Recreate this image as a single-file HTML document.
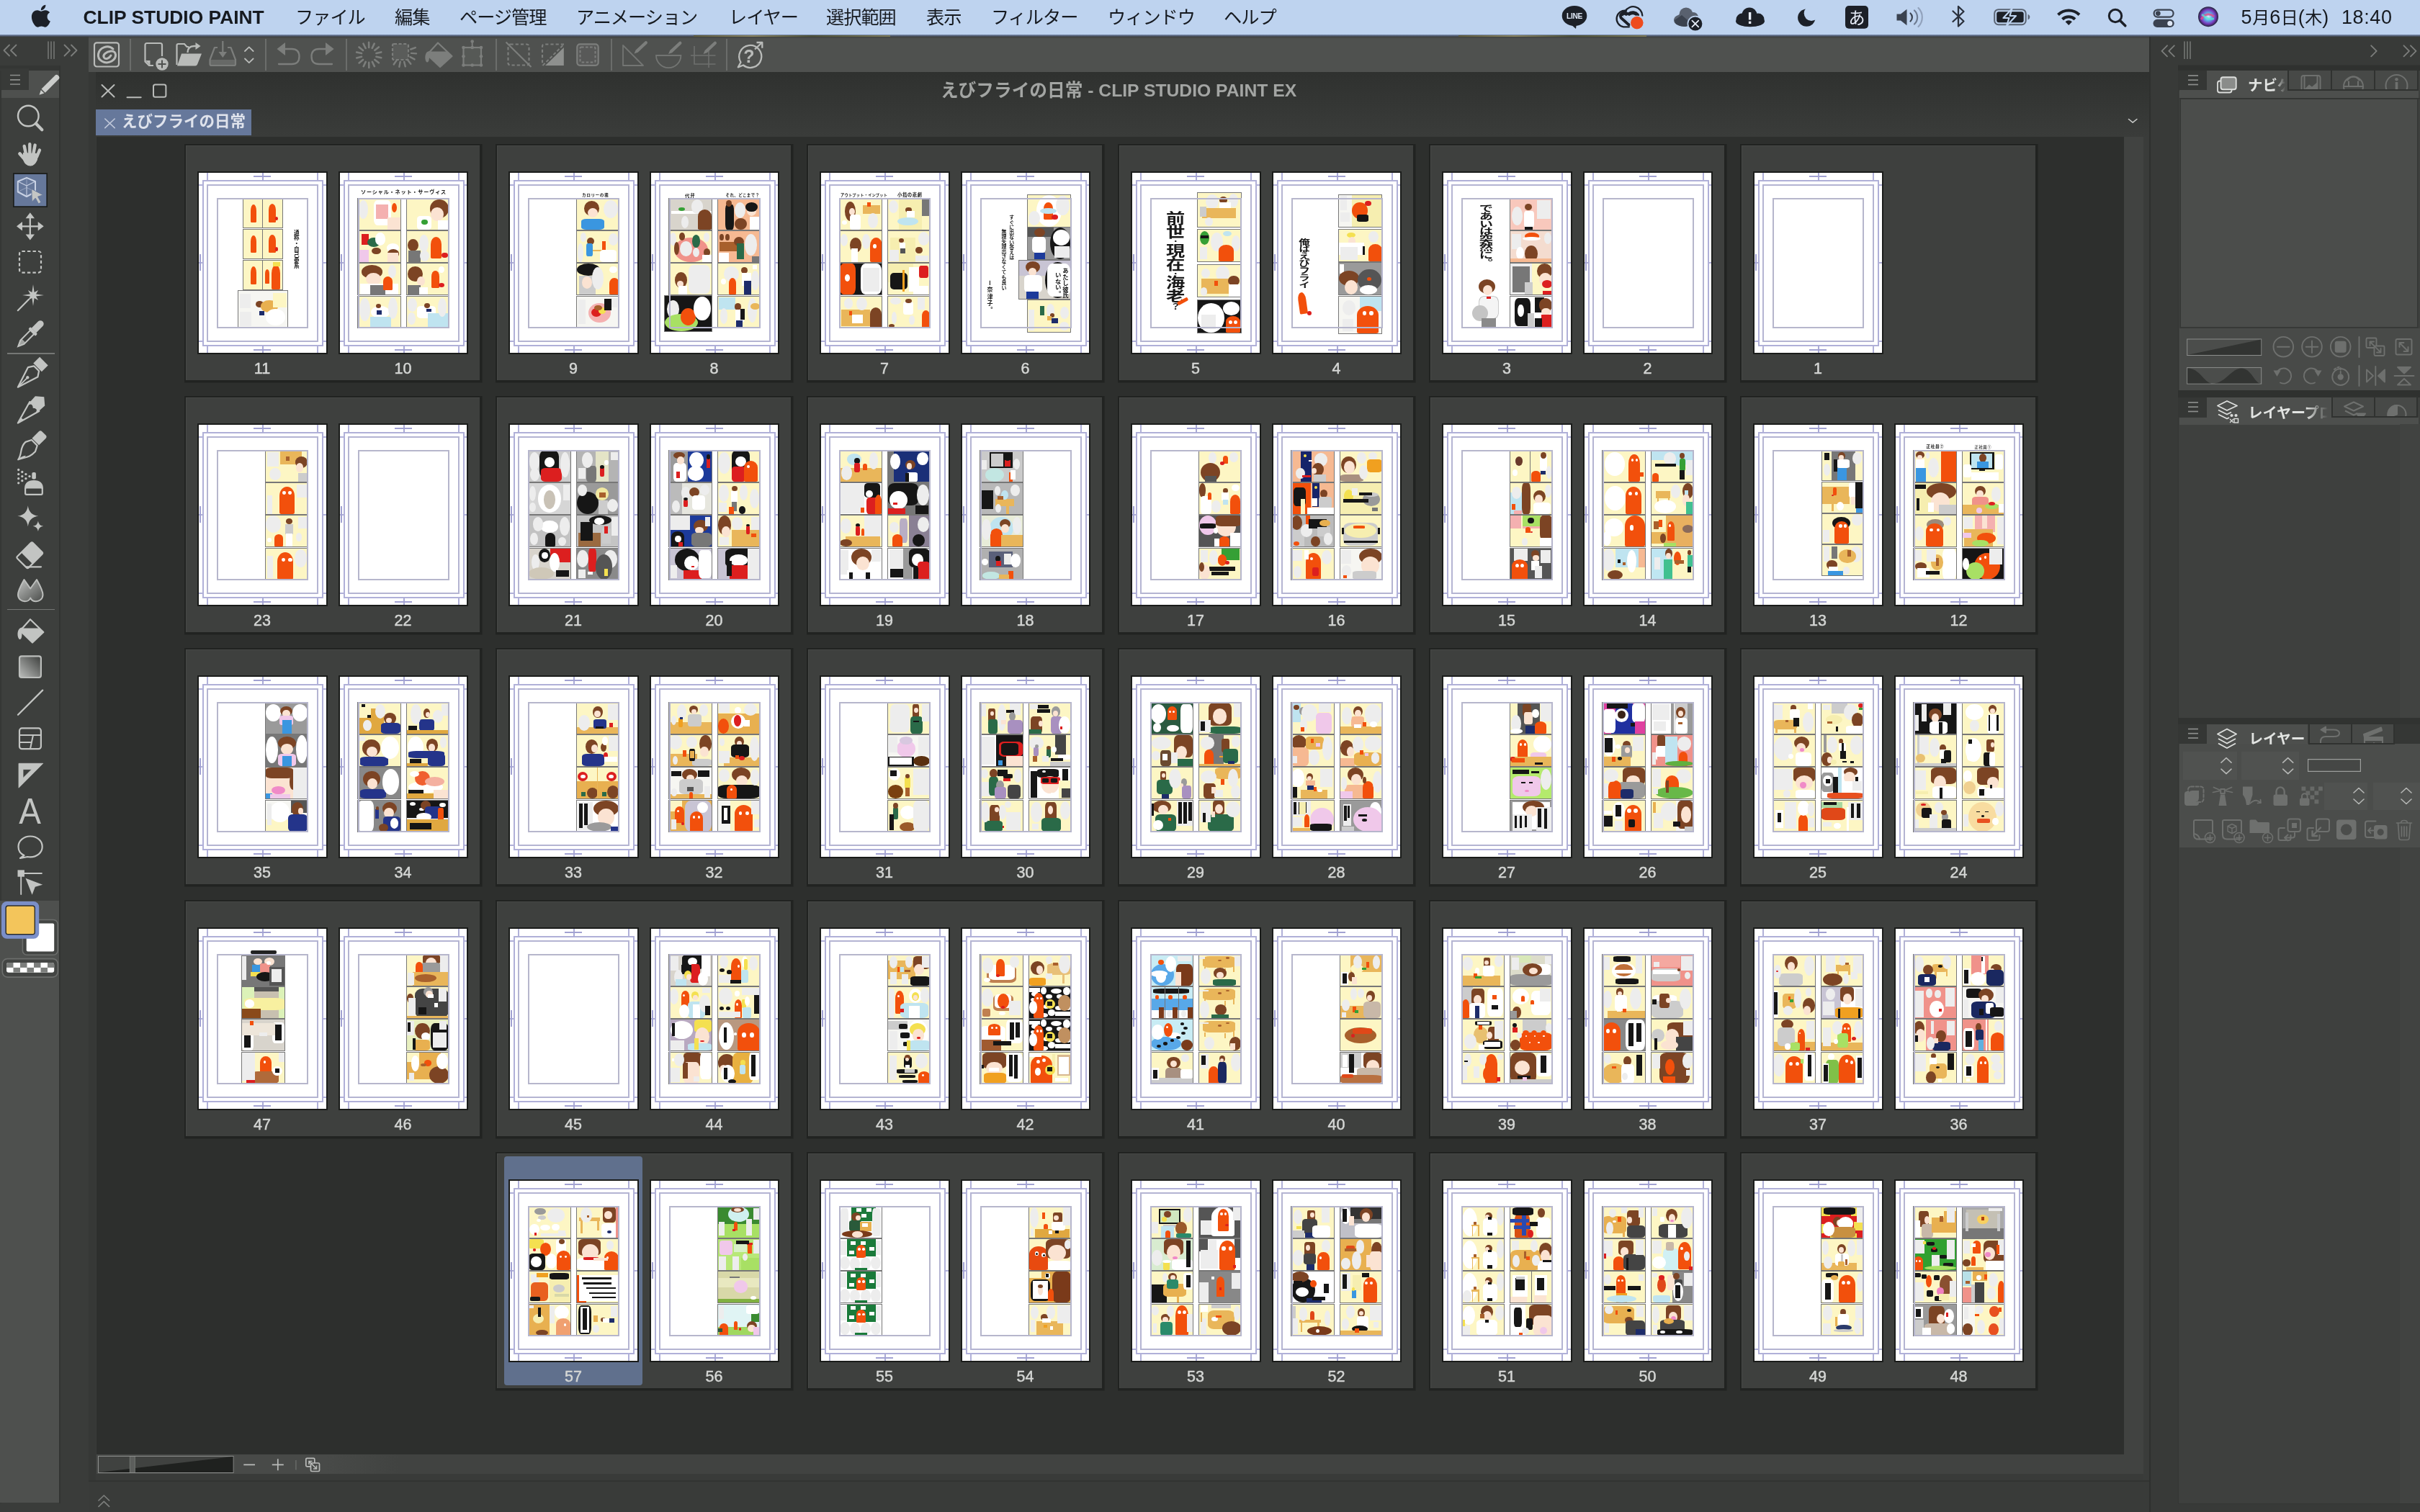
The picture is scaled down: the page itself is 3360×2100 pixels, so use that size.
<!DOCTYPE html><html lang="ja"><head><meta charset="utf-8"><title>CLIP STUDIO PAINT</title><style>
*{margin:0;padding:0;box-sizing:border-box}
html,body{width:3360px;height:2100px;overflow:hidden;background:#393b39}
body{will-change:transform;position:relative;font-family:"Liberation Sans","Noto Sans CJK JP",sans-serif;color:#c8c8c8}
.a{position:absolute}
div,i,b,span,svg{position:absolute;display:block}
#mb{left:0;top:0;width:3360px;height:48px;background:#bed3ef}
#mbl{left:0;top:48px;width:3360px;height:3px;background:linear-gradient(#7f93b8,#3b4048)}
.wp{top:48.5px;height:3px;background:linear-gradient(90deg,#5d5a3c,#8a8460 30%,#4c5036 60%,#7d7a58)}
#mb span{top:0;height:48px;line-height:48.5px;font-size:25.2px;letter-spacing:-1px;color:#161a20;white-space:nowrap}
#mb .tm{letter-spacing:1.15px}
#mb em{font-style:normal;font-size:24px;letter-spacing:0}
#mb .ap{font-weight:bold;font-size:26.4px;letter-spacing:0;line-height:48px}
#mb .md{font-size:27px;letter-spacing:0.6px;line-height:49.5px}
/* left */
#lt{left:0;top:51px;width:123px;height:2049px;background:#3a3c3a}
#lp{left:0;top:98px;width:82px;height:1989px;background:#3d3f3d}
#lph{left:0;top:98px;width:82px;height:38px;background:#4e504e}
#lpt{left:0;top:90.5px;width:84px;height:7.5px;background:#343634}
#lpr{left:82px;top:90.5px;width:1.8px;height:1997px;background:#323432}
#lpl{left:0;top:98px;width:2px;height:1990px;background:#353735}
#lpm{left:0;top:94.600px;width:39.700px;height:30.600px;background:#383a38}
#lpb{left:0;top:1251px;width:82px;height:836px;background:#4e504e}
.sep{left:10px;width:66px;height:1.6px;background:#757775}

/* toolbar */
#tb{left:123px;top:51px;width:2861px;height:49px;background:#4f514f}
#tbl{left:123px;top:51px;width:2861px;height:2px;background:#454745}
.vs{top:54px;width:2px;height:44px;background:#6b6d6b}
/* doc window */
#dw{left:123px;top:100px;width:2861px;height:90px;background:linear-gradient(#2f312f,#3a3c3a)}
#dwl{left:123px;top:100px;width:10px;height:1956px;background:#363836}
#tab{left:133px;top:152px;width:216px;height:36px;background:#66789b}
#tab span{left:36px;top:0;line-height:35px;font-size:21.5px;font-weight:bold;color:#dfe3ec;white-space:nowrap}
#ttl{left:1203px;top:108px;width:700px;text-align:center;font-size:24.7px;font-weight:bold;color:#a3a5a3;white-space:nowrap;line-height:36px}
#cv{left:134px;top:190px;width:2815px;height:1830px;background:#2d2f2d}
#vsb{left:2949px;top:190px;width:27px;height:1857px;background:#414341}
#vsr{left:2976px;top:190px;width:8px;height:1866px;background:#3a3c3a}
#hsb{left:134px;top:2020px;width:2815px;height:27px;background:#414341}
#st{left:134px;top:2020px;width:420px;height:27px;background:linear-gradient(90deg,#484a48 76%,#414341)}
#bt{left:123px;top:2056px;width:2861px;height:44px;background:#393b39;border-top:2px solid #323432}
/* spreads */
.sp{width:408px;height:326px;background:#3e403e;box-shadow:.75px .75px 0 2.75px #212321, inset 1px 1px 0 #474947}
.pg{width:176.5px;height:250px;background:#fff;top:38px;box-shadow:0 0 0 2px #1a1c1a;overflow:hidden}
.pn{top:294.6px;width:176px;text-align:center;font-size:21.5px;line-height:30px;color:#d4d6d4;-webkit-text-stroke:0.5px #d4d6d4}
.pg i{border:0 solid #b0b0d8}
.g1{left:5px;top:10px;width:168px;height:231px;border-width:2px!important}
.g2{left:11px;top:16px;width:155px;height:219px;border-width:2px!important;border-color:#b4b4d2!important}
.g3{left:25px;top:35px;width:127px;height:181px;border-width:2px!important;border-color:#b6b6cc!important}
.t1{left:11px;top:0;width:155px;height:11px;border-left-width:2px!important;border-right-width:2px!important}
.t2{left:11px;top:240px;width:155px;height:10px;border-left-width:2px!important;border-right-width:2px!important}
.t3{left:0;top:16px;width:6px;height:219px;border-top-width:2px!important;border-bottom-width:2px!important}
.t4{left:171px;top:16px;width:6px;height:219px;border-top-width:2px!important;border-bottom-width:2px!important}
.c1{left:88px;top:0;width:2px;height:11px;background:#aaaad6}
.c2{left:76px;top:4px;width:24px;height:2px;background:#a2a2d2}
.c3{left:88px;top:240px;width:2px;height:10px;background:#aaaad6}
.c4{left:76px;top:245px;width:24px;height:2px;background:#a2a2d2}
.c5{left:0;top:124px;width:6px;height:2px;background:#b0b0d8}
.c6{left:1px;top:113px;width:2px;height:23px;background:#a2a2d2}
.c7{left:171px;top:124px;width:6px;height:2px;background:#b0b0d8}
.pg b{position:absolute;display:block}
.k{outline:.7px solid #777;outline-offset:-.7px;overflow:hidden}
.kn{overflow:hidden}
.e{border-radius:50%}
.t{border-radius:50% 50% 12% 12%/34% 34% 6% 6%}
.r{border-radius:22%}
.tt{color:#1a1a1a;font-weight:bold;white-space:nowrap;line-height:1.2;font-family:"Liberation Sans","Noto Sans CJK JP",sans-serif}
.vt{color:#1a1a1a;font-weight:bold;white-space:nowrap;writing-mode:vertical-rl;line-height:1.15;font-family:"Liberation Sans","Noto Sans CJK JP",sans-serif}
.hw{font-family:"Noto Sans CJK JP",sans-serif;font-weight:700}
.dt{position:static!important;display:inline!important;font-style:normal;font-size:40%;border:0!important}
.dq{position:static!important;display:inline!important;font-style:normal;font-size:55%;border:0!important}
/* right dock */
#rd{left:2984px;top:51px;width:376px;height:2049px;background:#383a38;border-left:2px solid #2e302e}
#rp{left:3025px;top:91px;width:335px;height:1997px;background:#3e403e;box-shadow:0 0 0 1px #343634}
.ph{left:3024px;width:336px;background:#353735}
.pt{background:#4b4d4b}
.pt2{background:#474947;box-shadow:inset 2px 2px 0 #333533}

.ic{overflow:visible}
.s{fill:none;stroke:#b4b6b4;stroke-width:2.2;stroke-linecap:round;stroke-linejoin:round}
.sd{fill:none;stroke:#7d7f7d;stroke-width:2.4;stroke-linecap:round;stroke-linejoin:round}
.fl{fill:#b4b6b4}
.fd{fill:#7d7f7d}
.ptx{font-size:20.5px;font-weight:bold;color:#e2e4e2;line-height:36px;height:36px;white-space:nowrap;overflow:hidden;-webkit-mask-image:linear-gradient(90deg,#000 72%,transparent 100%);mask-image:linear-gradient(90deg,#000 72%,transparent 100%)}
</style></head><body><div id="mb"><span class="ap" style="left:115.5px">CLIP STUDIO PAINT</span><span class="" style="left:410px">ファイル</span><span class="" style="left:548px">編集</span><span class="" style="left:638px">ページ管理</span><span class="" style="left:800px">アニメーション</span><span class="" style="left:1012px">レイヤー</span><span class="" style="left:1147px">選択範囲</span><span class="" style="left:1286px">表示</span><span class="" style="left:1376px">フィルター</span><span class="" style="left:1538px">ウィンドウ</span><span class="" style="left:1699px">ヘルプ</span><span class="md" style="left:3111.5px">5<em>月</em>6<em>日</em>(<em>木</em>)</span><span class="md tm" style="left:3251px">18:40</span><svg class="ic" style="left:0;top:0" width="3360" height="48" viewBox="0 0 3360 48"><g transform="translate(43.6,4.6) scale(0.0690)"><path fill="#1c2028" d="M318.7 268.7c-.2-36.7 16.4-64.4 50-84.8-18.8-26.9-47.2-41.7-84.7-44.6-35.5-2.8-74.3 20.7-88.5 20.7-15 0-49.4-19.7-76.4-19.7C63.3 141.2 4 184.8 4 273.5q0 39.3 14.4 81.2c12.8 36.7 59 126.7 107.2 125.2 25.2-.6 43-17.9 75.8-17.9 31.8 0 48.3 17.9 76.4 17.9 48.6-.7 90.4-82.5 102.6-119.3-65.2-30.7-61.7-90-61.7-91.9zm-56.6-164.2c27.3-32.4 24.8-61.9 24-72.5-24.1 1.4-52 16.4-67.9 34.9-17.5 19.8-27.8 44.3-25.6 71.9 26.1 2 49.9-11.4 69.5-34.3z"/></g><ellipse cx="2186" cy="22" rx="17.3" ry="14" fill="#1c2028"/><path d="M2180 33 l8 7 l1 -8z" fill="#1c2028"/><text x="2186" y="26" font-family="Liberation Sans,sans-serif" font-weight="bold" font-size="10.2" fill="#dfe8f6" text-anchor="middle" letter-spacing="-0.3">LINE</text><g fill="none" stroke="#1c2028" stroke-linecap="round"><path d="M2262 37.300 H2254 A10.600 10.600 0 1 1 2258 14.800" stroke-width="2.300"/><path d="M2256.500 15.500 A12.800 12.800 0 0 1 2280.300 21.500" stroke-width="2.300"/><path d="M2261.500 33.500 L2251.300 24.300 A4.300 4.300 0 0 1 2257.800 19" stroke-width="5.400"/><path d="M2262 19.300 A8.300 8.300 0 0 1 2273.500 20.800" stroke-width="5"/></g><path d="M2252.800 22.800 L2262.500 31.600" stroke="#bed3ef" stroke-width="1.700" stroke-linecap="round"/><circle cx="2272.800" cy="31.600" r="9.400" fill="#ee4b1e" stroke="#bed3ef" stroke-width="1.200"/><g fill="#59616f"><ellipse cx="2337" cy="28" rx="13" ry="8.5"/><circle cx="2341" cy="20" r="9.5"/><circle cx="2351" cy="24" r="7"/></g><path d="M2325 28 a13 8.5 0 0 0 24 5 l-14 -12z" fill="#3b424e"/><circle cx="2353.8" cy="33" r="10.4" fill="#1c2028" stroke="#bed3ef" stroke-width="1.6"/><path d="M2349.4 28.6 l8.8 8.8 M2358.2 28.6 l-8.8 8.8" stroke="#e8eefa" stroke-width="1.8" stroke-linecap="round"/><g fill="#1c2028"><ellipse cx="2430" cy="29.5" rx="20" ry="7.8"/><circle cx="2429" cy="21" r="10.6"/><circle cx="2419" cy="27" r="8.5"/><circle cx="2441" cy="27" r="8.5"/></g><rect x="2427.9" y="17" width="3.4" height="10.5" fill="#e8eefa"/><rect x="2427.9" y="29.6" width="3.4" height="3.4" fill="#e8eefa"/><circle cx="2508.300" cy="24.600" r="12.200" fill="#1c2028"/><circle cx="2515" cy="18.600" r="10.300" fill="#bed3ef"/><rect x="2562" y="8" width="32" height="31.8" rx="5" fill="#1c2028"/><text x="2578" y="32.5" font-family="Noto Sans CJK JP,sans-serif" font-size="23" fill="#e8eefa" text-anchor="middle">あ</text><path d="M2633.5 19.5 h5.5 l8.5 -6.8 v22.6 l-8.5 -6.8 h-5.5z" fill="#3a4250"/><g fill="none" stroke-linecap="round" stroke-width="2.2"><path d="M2652.5 18.5 a7.5 7.5 0 0 1 0 11" stroke="#3a4250"/><path d="M2658 14.5 a13 13 0 0 1 0 19" stroke="#6f7c92"/><path d="M2663.5 11 a18.5 18.5 0 0 1 0 26" stroke="#92a2bc"/></g><path d="M2711.5 15.5 l15 14 l-7.5 7 v-27.5 l7.5 7 l-15 14" fill="none" stroke="#2a303c" stroke-width="2.3" stroke-linejoin="round" stroke-linecap="round"/><rect x="2769.2" y="13.2" width="43.5" height="21" rx="5.5" fill="none" stroke="#5a6474" stroke-width="2"/><rect x="2772.2" y="16.2" width="37.5" height="15" rx="3" fill="#1c2028"/><path d="M2815.6 20 a4 4 0 0 1 0 7.6z" fill="#5a6474"/><path d="M2793.5 12 l-12 13 h8 l-3.5 11 l13 -14 h-8.500z" fill="#1c2028" stroke="#bed3ef" stroke-width="2.2" stroke-linejoin="round"/><g fill="none" stroke="#1c2028" stroke-width="4" stroke-linecap="butt"><path d="M2857.5 20.5 a21 21 0 0 1 29.500 0"/><path d="M2863.5 26.700 a12.5 12.5 0 0 1 17.500 0"/></g><path d="M2867.6 30.200 a6.500 6.500 0 0 1 9.300 0 l-4.650 4.900z" fill="#1c2028"/><circle cx="2937" cy="22" r="8.7" fill="none" stroke="#1c2028" stroke-width="3"/><path d="M2943.5 28.500 l7.300 7.300" stroke="#1c2028" stroke-width="3.6" stroke-linecap="round"/><rect x="2990.600" y="13.600" width="27" height="10" rx="5" fill="none" stroke="#3a4250" stroke-width="2.200"/><circle cx="2996.300" cy="18.600" r="3.400" fill="#3a4250"/><rect x="2989.500" y="26.800" width="29.200" height="11.200" rx="5.600" fill="#3a4250"/><circle cx="3012.800" cy="32.400" r="3.500" fill="#dfe8f6"/><defs><radialGradient id="sg" cx="0.5" cy="0.5" r="0.5"><stop offset="0" stop-color="#dfe6ff"/><stop offset="0.35" stop-color="#5ac0e8"/><stop offset="0.7" stop-color="#7a3cc0"/><stop offset="1" stop-color="#23233a"/></radialGradient></defs><circle cx="3066" cy="23.200" r="14" fill="url(#sg)"/><path d="M3056 27 q8 -12 18 -4" stroke="#e64a8a" stroke-width="3" fill="none" opacity=".8"/><path d="M3057 20 q9 8 17 6" stroke="#5af0d0" stroke-width="2.500" fill="none" opacity=".7"/></svg></div><div id="mbl"></div><div class="wp" style="left:963px;width:273px"></div><div class="wp" style="left:2025px;width:261px"></div><div id="lt"></div><div id="lp"></div><div id="lph"></div><div id="lpt"></div><div id="lpm"></div><div id="lpr"></div><div id="lpl"></div><div id="lpb"></div><div class="sep" style="top:490.2px"></div><div class="sep" style="top:845.8px"></div><svg class="ic" style="left:0;top:0" width="124" height="1400" viewBox="0 0 124 1400"><defs><linearGradient id="gb" x1="0" y1="0" x2="1" y2="1"><stop offset="0" stop-color="#c0c2c0"/><stop offset="1" stop-color="#4a4c4a"/></linearGradient><linearGradient id="gg" x1="1" y1="0" x2="0" y2="1"><stop offset="0" stop-color="#3c3e3c"/><stop offset="1" stop-color="#bcbebc"/></linearGradient></defs><g fill="none" stroke="#7c7e7c" stroke-width="1.8" stroke-linecap="round" stroke-linejoin="round"><path d="M13 62.500 l-7.500 7.500 l7.500 7.500 M22.500 62.500 l-7.500 7.500 l7.500 7.500 M89.500 62.500 l7.500 7.500 l-7.500 7.500 M99 62.500 l7.500 7.500 l-7.500 7.500"/><path d="M67 58 v23.400 M71 58 v23.400 M75 58 v23.400" stroke-width="1.4"/></g><path d="M14 104.500 h14 M14 110.800 h14 M14 117 h14" stroke="#8c8e8c" stroke-width="1.700"/><g transform="translate(54.500,131.800) rotate(-45)" fill="#cbcdcb"><path d="M0 0 L6.500 -3.200 L6.500 3.200z"/><path d="M8 -3.700 H34 a3.700 3.700 0 0 1 0 7.400 H8z"/></g><circle cx="39.300" cy="161" r="14.300" fill="none" stroke="#c2c4c2" stroke-width="2.400"/><path d="M50 171.800 L58.300 180.300" stroke="#c2c4c2" stroke-width="4.300" stroke-linecap="round"/><g stroke="#c2c4c2" stroke-linecap="round" fill="none"><path d="M36 214 L33.700 203 M41.300 212 L41.300 200.200 M46.500 213 L48.600 201.600 M51 218 L55 208.500" stroke-width="4.400"/><path d="M35 222 L27.500 213.500" stroke-width="4.800"/></g><path d="M32 212 L52.500 213 L52 222 Q48 231 42 230.500 Q35 230.500 32 222Z" fill="#c2c4c2"/><rect x="18.900" y="241.100" width="46.300" height="46" fill="#66789b" stroke="#1b1d1b" stroke-width="1.700"/><g fill="none" stroke="#c9d2e4" stroke-linejoin="round"><path d="M37 246.800 L49 252 V266.500 L37 273 L24.800 266.500 V252Z" stroke-width="2"/><path d="M24.800 252 L37 258 L49 252 M37 258 V273" stroke-width="1.100"/><path d="M37 246.800 V258 M24.800 266.500 L37 260.500 L49 266.500" stroke-width=".7" opacity=".7"/></g><path d="M43.800 262.400 L59.700 270.800 L52.600 273.200 L57 281 L53.500 283 L49.200 275.200 L44.300 280.500Z" fill="#c4c6c4" stroke="#66789b" stroke-width="1"/><path d="M41.800 299 V329.500 M26.500 314.300 H57" stroke="#c2c4c2" stroke-width="2.300"/><path d="M41.800 295.200 L35.600 303.200 H48 Z M41.800 333.400 L35.600 325.400 H48 Z M23 314.300 L31 308.100 V320.500 Z M60.700 314.300 L52.700 308.100 V320.500Z" fill="#c2c4c2"/><rect x="27" y="349" width="30" height="29.600" rx="3.500" fill="none" stroke="#c2c4c2" stroke-width="2.200" stroke-dasharray="4.400 3.100"/><polygon points="46.0,395.0 47.6,406.0 53.1,402.9 50.0,408.4 61.0,410.0 50.0,411.6 53.1,417.1 47.6,414.0 46.0,425.0 44.4,414.0 38.9,417.1 42.0,411.6 31.0,410.0 42.0,408.4 38.9,402.9 44.4,406.0" fill="#c2c4c2"/><path d="M24.800 431.200 L40 415.800" stroke="#c2c4c2" stroke-width="2.200" stroke-linecap="round"/><g transform="translate(24.500,481.800) rotate(-45.400)"><path d="M1 0 L9 -3.600 H29 V3.600 H9Z" fill="none" stroke="#c2c4c2" stroke-width="2"/><path d="M1 0 L9 -3.600 L12 -3.600 L12 3.600 L9 3.600Z" fill="#c2c4c2" opacity=".75"/><rect x="28" y="-7" width="4.200" height="14" rx="1.500" fill="#c2c4c2"/><path d="M32 -4.600 H45 a4.600 4.600 0 0 1 0 9.200 H32Z" fill="#c2c4c2"/></g><g transform="translate(24.500,538) rotate(-45)"><path d="M0.500 0 L30 -9.500 L37 -4.800 V4.800 L30 9.500Z" fill="none" stroke="#c2c4c2" stroke-width="2.200" stroke-linejoin="round"/><path d="M3 0 H18" stroke="#c2c4c2" stroke-width="1.800"/><circle cx="19.500" cy="0" r="2.200" fill="#c2c4c2"/><rect x="39" y="-8.200" width="12.500" height="16.400" fill="#c2c4c2"/></g><g transform="translate(24.500,587.900) rotate(-45)"><path d="M0.500 0 L33 -9.200 V9.200Z" fill="none" stroke="#c2c4c2" stroke-width="2.200" stroke-linejoin="round"/><path d="M0 0 L9 -2.600 V2.600Z" fill="#c2c4c2"/><path d="M27 -8.500 L44 -9.400 L52 0 L44 9.400 L27 8.500 L33.500 4.500 L30 0 L33.500 -4.500Z" fill="#c2c4c2"/></g><g transform="translate(24.500,638.300) rotate(-45)"><path d="M0.500 0.500 C11 -1 13 -10 25 -9.500 L33 -5.500 V5.500 L25 9.500 C13 10 9 4 0.500 0.500Z" fill="none" stroke="#c2c4c2" stroke-width="2.200" stroke-linejoin="round"/><path d="M0 0 C6 0 9 2 12 4 L8 5 Z" fill="#c2c4c2"/><path d="M35 -6.800 H48 q3.500 0 3.500 3 V3.800 q0 3 -3.500 3 H35Z" fill="#c2c4c2"/></g><circle cx="25.7" cy="652.5" r="1.650" fill="#c2c4c2"/><circle cx="25.7" cy="658.6" r="1.650" fill="#c2c4c2"/><circle cx="25.7" cy="664.7" r="1.650" fill="#c2c4c2"/><circle cx="25.7" cy="670.8" r="1.650" fill="#c2c4c2"/><circle cx="30.8" cy="655.5" r="1.650" fill="#c2c4c2"/><circle cx="30.8" cy="661.6" r="1.650" fill="#c2c4c2"/><circle cx="30.8" cy="667.7" r="1.650" fill="#c2c4c2"/><circle cx="35.9" cy="658.6" r="1.650" fill="#c2c4c2"/><circle cx="35.9" cy="664.7" r="1.650" fill="#c2c4c2"/><circle cx="41.0" cy="661.6" r="1.650" fill="#c2c4c2"/><rect x="44.300" y="656" width="5.600" height="9.500" rx="2" fill="#c2c4c2"/><path d="M34 679 q0 -12 13 -12 q13 0 13 12z" fill="#c2c4c2"/><rect x="35.100" y="677.500" width="23.700" height="9.400" rx="1.800" fill="#3d3f3d" stroke="#c2c4c2" stroke-width="2.200"/><path d="M38.800 702.300 Q40.300 715.300 53.300 716.800 Q40.300 718.300 38.800 731.300 Q37.300 718.300 24.300 716.800 Q37.300 715.300 38.800 702.300Z M52.900 723.500 Q53.700 730 60.200 730.800 Q53.700 731.600 52.900 738.100 Q52.100 731.600 45.600 730.800 Q52.100 730 52.900 723.500Z" fill="#c2c4c2"/><g transform="translate(42.500,770) rotate(-45)"><rect x="-17" y="-11" width="30.500" height="22" rx="2" fill="none" stroke="#c2c4c2" stroke-width="2.200"/><rect x="-7.500" y="-11" width="21" height="22" rx="1.500" fill="#c2c4c2"/></g><path d="M36.500 787.300 H57" stroke="#c2c4c2" stroke-width="2.200" stroke-linecap="round"/><path d="M33.500 805 L42.200 817.500 L51 805 C56 814 59.500 820 59.500 826 C59.500 832.500 54 835.300 50 835.300 C46.500 835.300 43.500 833.500 42.200 830.500 C41 833.500 38 835.300 34.500 835.300 C30.500 835.300 25 832.500 25 826 C25 820 28.500 814 33.500 805Z" fill="url(#gb)" stroke="#bcbebc" stroke-width="2" stroke-linejoin="round"/><path d="M42 860.200 L60.300 878 L45 892.500 L28 876Z" fill="none" stroke="#c2c4c2" stroke-width="2.200" stroke-linejoin="round"/><path d="M30.500 872.500 H55 L60.300 878 L45 892.500 L28 876Z" fill="#c2c4c2"/><path d="M31 871.500 C22.500 871.500 23.500 887 27.500 888 C31 888 30.500 880 30.500 875Z" fill="#c2c4c2"/><rect x="27" y="911.400" width="29.900" height="29.600" rx="3" fill="url(#gg)" stroke="#bcbebc" stroke-width="2.200"/><path d="M25 992.800 L59.200 958.600" stroke="#c2c4c2" stroke-width="2.300" stroke-linecap="round"/><rect x="27" y="1011.400" width="29.900" height="28.800" rx="3.500" fill="none" stroke="#c2c4c2" stroke-width="2.200"/><path d="M27 1020.900 H57 M27 1031 H43.500 M46 1021 L42 1040" stroke="#c2c4c2" stroke-width="2" fill="none"/><path d="M26 1060.300 H59.800 L26 1094.200Z M32 1068.600 V1080.500 L44 1068.600Z" fill="#c2c4c2" fill-rule="evenodd" stroke="#c2c4c2" stroke-width=".8" stroke-linejoin="round"/><text x="41.700" y="1143.700" font-family="Liberation Sans,sans-serif" font-size="49.500" fill="#c2c4c2" text-anchor="middle" transform="translate(41.700 0) scale(.93 1) translate(-41.700 0)">A</text><path d="M33.500 1188 C27 1185 25.500 1180 25.500 1176 C25.500 1167.500 33 1161.500 42 1161.500 C51.500 1161.500 58.700 1167.500 58.700 1176 C58.700 1184.500 51 1190.300 42 1190.300 C40.500 1190.300 39.500 1190.200 38.200 1190 L28 1192 Z" fill="none" stroke="#c2c4c2" stroke-width="2.200" stroke-linejoin="round"/><rect x="24.500" y="1208.400" width="9.400" height="9.300" fill="#c2c4c2"/><path d="M33.900 1213 H57.900 M29.200 1217.700 V1242" stroke="#c2c4c2" stroke-width="1.900" stroke-linecap="round"/><path d="M35.500 1219.700 L59.200 1228.800 L48.800 1231.700 L44.600 1242.800Z" fill="#c2c4c2"/><rect x="31.400" y="1277.500" width="48.800" height="48.700" rx="6" fill="#434543" stroke="#6c6e6c" stroke-width="1.600"/><rect x="36.700" y="1282.500" width="38.500" height="38.900" rx="2" fill="#fff"/><rect x="2" y="1252" width="52.200" height="51.700" rx="7.500" fill="#7b8fc8"/><rect x="7.400" y="1257.300" width="41.600" height="41.200" rx="4" fill="#2c2e2c"/><rect x="8.900" y="1258.800" width="38.700" height="38.200" rx="2.600" fill="#f3c55b"/><rect x="3.300" y="1331.600" width="77" height="25.500" rx="7" fill="#434543" stroke="#6c6e6c" stroke-width="1.600"/><clipPath id="ck"><rect x="9" y="1337" width="66.200" height="13.800" rx="3"/></clipPath><g clip-path="url(#ck)"><rect x="9" y="1337" width="67" height="14" fill="#fff"/><rect x="9.0" y="1337.0" width="9.500" height="6.900" fill="#7c7e7c"/><rect x="28.0" y="1337.0" width="9.500" height="6.900" fill="#7c7e7c"/><rect x="47.0" y="1337.0" width="9.500" height="6.900" fill="#7c7e7c"/><rect x="66.0" y="1337.0" width="9.500" height="6.900" fill="#7c7e7c"/><rect x="18.5" y="1343.9" width="9.500" height="6.900" fill="#7c7e7c"/><rect x="37.5" y="1343.9" width="9.500" height="6.900" fill="#7c7e7c"/><rect x="56.5" y="1343.9" width="9.500" height="6.900" fill="#7c7e7c"/></g></svg><div id="tb"></div><div id="tbl"></div><div class="vs" style="left:180px"></div><div class="vs" style="left:368px"></div><div class="vs" style="left:480px"></div><div class="vs" style="left:688px"></div><div class="vs" style="left:848px"></div><div class="vs" style="left:1008px"></div><svg class="ic" style="left:0;top:0" width="1100" height="102" viewBox="0 0 1100 102"><rect x="131" y="59.300" width="34" height="33.200" rx="3.500" fill="none" stroke="#b9bbb9" stroke-width="2.200"/><path d="M157 68 C150 61.500 138 66 136.500 75 C135 84 146 90 155 85 C163 80.500 162 70 154 71 C147.500 72 142 76 144.500 80 C147 83.500 152 80.500 154 77" fill="none" stroke="#b9bbb9" stroke-width="3" stroke-linecap="round"/><path d="M213 91 H207 L201.500 85.500 V62.500 q0 -2.500 2.500 -2.500 H222.500 q2.500 0 2.500 2.500 V78" fill="none" stroke="#b9bbb9" stroke-width="2.200" stroke-linejoin="round"/><path d="M202 84 H208.500 V91Z" fill="#b9bbb9"/><circle cx="225" cy="89" r="8.700" fill="#b9bbb9"/><path d="M219.500 89 H230.500 M225 83.500 V94.500" stroke="#4f514f" stroke-width="2"/><path d="M245.500 90 V63 q0 -2 2 -2 H256 l3.500 4 H262" fill="none" stroke="#b9bbb9" stroke-width="2.200"/><path d="M246 91.500 L252 74.500 H280 L274 89.500 q-.8 2 -3 2Z" fill="#b9bbb9"/><path d="M260.500 73 q0 -9 9 -9 h3" fill="none" stroke="#b9bbb9" stroke-width="2.400"/><path d="M271.500 59 L278.500 64 L271.500 69Z" fill="#b9bbb9"/><path d="M302 66 H298 L291.500 83 V89 q0 2 2 2 H325 q2 0 2 -2 V83 L320.500 66 H316" fill="none" stroke="#7c7e7c" stroke-width="2.200" stroke-linejoin="round"/><path d="M292 83 H327 V91 H292Z" fill="#7c7e7c" opacity=".55"/><path d="M309.300 57 V74" stroke="#7c7e7c" stroke-width="2.200"/><path d="M303.500 72 H315 L309.300 80Z" fill="#7c7e7c"/><path d="M340 71 l5.800 -5.600 l5.800 5.600 M340 81.500 l5.800 5.600 l5.800 -5.600" fill="none" stroke="#b9bbb9" stroke-width="1.800" stroke-linecap="round" stroke-linejoin="round"/><path d="M387 89 H405 q10.500 0 10.500 -10.500 q0 -10.500 -10.500 -10.500 H396" fill="none" stroke="#7c7e7c" stroke-width="2.300" stroke-linecap="round"/><path d="M384.500 68 L396 59 V77Z" fill="#7c7e7c"/><path d="M461 89 H443 q-10.500 0 -10.500 -10.500 q0 -10.500 10.500 -10.500 H452" fill="none" stroke="#7c7e7c" stroke-width="2.300" stroke-linecap="round"/><path d="M463.700 68 L452 59 V77Z" fill="#7c7e7c"/><path d="M522.4 78.7 L529.3 80.2 M520.4 82.9 L525.9 87.3 M516.8 85.8 L519.9 92.1 M512.2 86.9 L512.3 93.9 M507.7 85.9 L504.7 92.2 M504.0 83.0 L498.6 87.4 M502.0 78.8 L495.2 80.4 M502.0 74.1 L495.1 72.6 M504.0 69.9 L498.5 65.5 M507.6 67.0 L504.5 60.7 M512.2 65.9 L512.1 58.9 M516.7 66.9 L519.7 60.6 M520.4 69.8 L525.8 65.4 M522.4 74.0 L529.2 72.4 " stroke="#7c7e7c" stroke-width="2.600" stroke-linecap="round"/><rect x="545" y="61" width="22" height="22" rx="2" fill="#7c7e7c" fill-opacity=".25" stroke="#7c7e7c" stroke-width="2.200" stroke-dasharray="4 2.600"/><path d="M570.2 68.5 L576.8 66.1 M571.0 73.9 L578.0 74.4 M569.5 79.1 L575.6 82.4 M566.0 83.3 L570.3 88.8 M561.1 85.6 L562.8 92.4 M555.7 85.8 L554.4 92.7 M550.7 83.7 L546.7 89.5 " stroke="#7c7e7c" stroke-width="2.400" stroke-linecap="round"/><path d="M608 59.500 L627.500 78 L611 93 L593 76Z" fill="none" stroke="#7c7e7c" stroke-width="2.200" stroke-linejoin="round"/><path d="M597 71.500 H621 L627.500 78 L611 93 L593 76Z" fill="#7c7e7c"/><path d="M596.500 71 C588.500 71 589.500 85.500 593 86.500 C596.500 86.500 596 79 596 74.500Z" fill="#7c7e7c"/><rect x="643.500" y="66" width="24.500" height="24.500" fill="#7c7e7c" fill-opacity=".18" stroke="#7c7e7c" stroke-width="2.200"/><path d="M655.700 66 V58.500" stroke="#7c7e7c" stroke-width="2"/><circle cx="643.5" cy="66.0" r="2.300" fill="#7c7e7c"/><circle cx="655.7" cy="66.0" r="2.300" fill="#7c7e7c"/><circle cx="668.0" cy="66.0" r="2.300" fill="#7c7e7c"/><circle cx="643.5" cy="78.2" r="2.300" fill="#7c7e7c"/><circle cx="668.0" cy="78.2" r="2.300" fill="#7c7e7c"/><circle cx="643.5" cy="90.5" r="2.300" fill="#7c7e7c"/><circle cx="655.7" cy="90.5" r="2.300" fill="#7c7e7c"/><circle cx="668.0" cy="90.5" r="2.300" fill="#7c7e7c"/><circle cx="655.7" cy="57.5" r="2.300" fill="#7c7e7c"/><rect x="705.500" y="61.500" width="29" height="29" rx="3" fill="none" stroke="#7c7e7c" stroke-width="2.200" stroke-dasharray="4.200 3"/><path d="M702.500 58.500 L737.500 93" stroke="#7c7e7c" stroke-width="2.200"/><path d="M782.800 66 V91 H757Z" fill="#8e908e"/><path d="M783 61.500 H756 q-3 0 -3 3 V90.500" fill="none" stroke="#7c7e7c" stroke-width="2.200" stroke-dasharray="4.200 3"/><path d="M753.500 91 L783 61.500" stroke="#7c7e7c" stroke-width="2" stroke-dasharray="4.500 2.500"/><rect x="801.300" y="61.400" width="29.400" height="29.400" rx="4" fill="#7c7e7c" fill-opacity=".2" stroke="#7c7e7c" stroke-width="2.200"/><rect x="805.500" y="65.600" width="21" height="21" rx="1.500" fill="none" stroke="#7c7e7c" stroke-width="2" stroke-dasharray="3.600 2.400"/><path d="M865 63 V91 H893 Z" fill="none" stroke="#7c7e7c" stroke-width="1.800" stroke-linejoin="round" opacity=".8"/><g transform="translate(880.5,74.5) rotate(-43)"><path d="M0 0 L5 -2.200 H22 q2.500 0 2.500 2.200 q0 2.200 -2.500 2.200 H5Z" fill="#7c7e7c"/></g><path d="M911 77 a17.200 17.200 0 0 0 34.400 0 Z" fill="none" stroke="#7c7e7c" stroke-width="1.800" opacity=".8"/><g transform="translate(928,75) rotate(-43)"><path d="M0 0 L5 -2.200 H22 q2.500 0 2.500 2.200 q0 2.200 -2.500 2.200 H5Z" fill="#7c7e7c"/></g><path d="M964 64 V89 H993.500 M959 77 H993.500 M984 68 V94" fill="none" stroke="#7c7e7c" stroke-width="1.600" opacity=".7"/><g transform="translate(976.5,75) rotate(-43)"><path d="M0 0 L5 -2.200 H22 q2.500 0 2.500 2.200 q0 2.200 -2.500 2.200 H5Z" fill="#7c7e7c"/></g><path d="M1032 90.500 L1024.800 93.400 L1028.500 86.500 A15.500 15.500 0 1 1 1032 90.500Z" fill="none" stroke="#b9bbb9" stroke-width="2.300" stroke-linejoin="round"/><text x="1040" y="86.800" font-family="Liberation Sans,sans-serif" font-weight="bold" font-size="25" fill="#b9bbb9" text-anchor="middle">?</text><path d="M1048 68.500 L1057 60" stroke="#b9bbb9" stroke-width="2.300"/><path d="M1050.500 59 H1058.300 V66.800" fill="none" stroke="#b9bbb9" stroke-width="2.300" stroke-linejoin="round"/></svg><div id="dw"></div><div id="dwl"></div><div id="ttl">えびフライの日常 - CLIP STUDIO PAINT EX</div><div id="tab"><span>えびフライの日常</span></div><div id="cv"></div><div id="vsb"></div><div id="vsr"></div><div id="hsb"></div><div id="st"></div><div id="bt"></div><svg class="ic" style="left:0;top:0" width="3000" height="2100" viewBox="0 0 3000 2100"><path d="M141.500 118 L158.500 134.500 M158.500 118 L141.500 134.500 M176.500 135.300 H195.700" stroke="#b9bbb9" stroke-width="2" stroke-linecap="round"/><rect x="213" y="117.400" width="17.400" height="17.400" rx="2.500" fill="none" stroke="#b9bbb9" stroke-width="2"/><path d="M145.800 165 L159.200 177.600 M159.200 165 L145.800 177.600" stroke="#c0c8da" stroke-width="1.600" stroke-linecap="round"/><path d="M2955.500 165.500 l5.700 4.600 l5.700 -4.600" fill="none" stroke="#c8cac8" stroke-width="1.600" stroke-linecap="round" stroke-linejoin="round"/><rect x="136.500" y="2022.500" width="187.500" height="23" fill="#404240" stroke="#8c8e8c" stroke-width="1"/><path d="M137 2045 L323.500 2023 V2045Z" fill="#1f211f"/><rect x="180" y="2023" width="7.600" height="22" fill="#5c5e5c"/><path d="M180.300 2023 V2045 M187.300 2023 V2045" stroke="#7a7c7a" stroke-width=".8"/><path d="M338.300 2034.300 H354 M377.800 2034.300 H393.800 M385.800 2026.300 V2042.300" stroke="#b9bbb9" stroke-width="1.700"/><path d="M410.900 2028 V2041.500" stroke="#6a6c6a" stroke-width="1.400"/><rect x="424.800" y="2025.300" width="12" height="11.500" rx="1.500" fill="none" stroke="#b9bbb9" stroke-width="1.700"/><rect x="431.500" y="2032" width="12" height="11.500" rx="1.500" fill="#484a48" stroke="#b9bbb9" stroke-width="1.700"/><path d="M429 2029.500 L439.500 2040 M429 2034 V2029.500 H433.500 M439.500 2035.500 V2040 H435" fill="none" stroke="#b9bbb9" stroke-width="1.600"/><path d="M137 2084 l7.300 -7 l7.300 7 M137 2092.300 l7.300 -7 l7.300 7" fill="none" stroke="#7c7e7c" stroke-width="1.700" stroke-linecap="round" stroke-linejoin="round"/></svg><div class="sp" style="left:258px;top:202px"><div class="pg" style="left:18px"><b class="k" style="left:61.6px;top:35.6px;width:27px;height:40.6px;background:#fdf6c4"><b class=t style="left:38%;top:20%;width:30%;height:62%;background:#f2500c"></b></b><b class="k" style="left:89px;top:35.6px;width:27px;height:40.6px;background:#fdf6c4"><b class=t style="left:30%;top:18%;width:38%;height:64%;background:#f2500c"></b><b class=e style="left:62%;top:62%;width:16%;height:14%;background:#dc1f1f"></b></b><b class="k" style="left:61.6px;top:78.5px;width:27px;height:40px;background:#fdf6c4"><b class=t style="left:38%;top:20%;width:30%;height:62%;background:#f2500c"></b></b><b class="k" style="left:89px;top:78.5px;width:27px;height:40px;background:#fdf6c4"><b class=t style="left:30%;top:18%;width:38%;height:64%;background:#f2500c"></b><b class=e style="left:62%;top:62%;width:16%;height:14%;background:#dc1f1f"></b></b><b class="k" style="left:61.6px;top:121.8px;width:27px;height:40.7px;background:#fdf6c4"><b class=t style="left:38%;top:20%;width:30%;height:62%;background:#f2500c"></b></b><b class="k" style="left:89px;top:121.8px;width:27px;height:40.7px;background:#fdf6c4"><b class=t style="left:45%;top:15%;width:45%;height:85%;background:#f2500c"></b><b style="left:50%;top:5%;width:40%;height:14%;background:#f4e050"></b><b class=t style="left:10%;top:30%;width:25%;height:50%;background:#f2500c"></b></b><b class="k" style="left:55px;top:164px;width:68.4px;height:50.6px;background:#f6f6f2"><b style="left:3%;top:8%;width:22%;height:40%;background:#ededed"></b><b style="left:3%;top:58%;width:24%;height:38%;background:#ededed"></b><b class=e style="left:35%;top:28%;width:16%;height:18%;background:#7c4424"></b><b class=e style="left:45%;top:25%;width:35%;height:35%;background:#e8b050"></b><b class=e style="left:55%;top:50%;width:40%;height:45%;background:#ffffff"></b><b style="left:42%;top:55%;width:10%;height:12%;background:#1d2c6a"></b><b style="left:70%;top:5%;width:28%;height:40%;background:#fdf6c4"></b></b><span class="vt" style="left:129.5px;top:79px;font-size:7.6px;letter-spacing:0.2px">通称・自己愛系</span><i class="g1"></i><i class="g2"></i><i class="g3"></i><i class="t1"></i><i class="t2"></i><i class="t3"></i><i class="t4"></i><i class="c1"></i><i class="c2"></i><i class="c3"></i><i class="c4"></i><i class="c5"></i><i class="c6"></i><i class="c7"></i></div><div class="pn" style="left:18px">11</div><div class="pg" style="left:213.5px"><span class="tt" style="left:29.5px;top:23.2px;font-size:7.1px;letter-spacing:0.85px">ソーシャル・ネット・サーヴィス</span><b class="k" style="left:25.7px;top:35.8px;width:58.4px;height:43.2px;background:#fdf6c4"><b class=e style="left:2%;top:5%;width:22%;height:60%;background:#ededed"></b><b class=r style="left:38%;top:5%;width:40%;height:80%;background:#ffffff"></b><b style="left:42%;top:20%;width:30%;height:45%;background:#f4b0b0"></b><b class=e style="left:80%;top:15%;width:12%;height:30%;background:#f2500c"></b><b style="left:70%;top:60%;width:30%;height:40%;background:#fbe3d2"></b></b><b class="k" style="left:25.7px;top:81.2px;width:58.4px;height:43.2px;background:#fdf6c4"><b style="left:8%;top:8%;width:18%;height:35%;background:#dc1f1f"></b><b class=e style="left:22%;top:20%;width:30%;height:30%;background:#2a6a48"></b><b class=e style="left:40%;top:5%;width:25%;height:40%;background:#ffffff"></b><b style="left:0%;top:60%;width:25%;height:40%;background:#f0c8ea"></b><b class=e style="left:32%;top:52%;width:22%;height:22%;background:#7c4424"></b><b class=e style="left:68%;top:40%;width:30%;height:30%;background:#ffffff"></b><b class=e style="left:70%;top:58%;width:28%;height:30%;background:#7c4424"></b><b style="left:70%;top:70%;width:26%;height:30%;background:#fbe3d2"></b></b><b class="k" style="left:25.7px;top:126.3px;width:58.4px;height:43.2px;background:#fdf6c4"><b class=e style="left:8%;top:5%;width:50%;height:42%;background:#7c4424"></b><b class=e style="left:18%;top:30%;width:36%;height:38%;background:#fbe3d2"></b><b style="left:5%;top:65%;width:90%;height:35%;background:#ffffff"></b><b style="left:28%;top:68%;width:36%;height:30%;background:#777777"></b><b class=t style="left:60%;top:40%;width:22%;height:45%;background:#f2500c"></b><b class=e style="left:72%;top:5%;width:18%;height:40%;background:#ededed"></b></b><b class="k" style="left:25.7px;top:171.6px;width:58.4px;height:43.2px;background:#fdf6c4"><b class=e style="left:3%;top:5%;width:25%;height:75%;background:#ededed"></b><b class=e style="left:30%;top:30%;width:45%;height:40%;background:#ffffff"></b><b class=e style="left:42%;top:25%;width:12%;height:14%;background:#7c4424"></b><b style="left:45%;top:45%;width:12%;height:14%;background:#1d2c6a"></b><b style="left:28%;top:65%;width:50%;height:35%;background:#bfe4f0"></b><b class=e style="left:72%;top:3%;width:22%;height:70%;background:#ededed"></b></b><b class="k" style="left:93px;top:35.8px;width:58.2px;height:43.2px;background:#fdf6c4"><b class=e style="left:55%;top:3%;width:45%;height:60%;background:#7c4424"></b><b class=e style="left:58%;top:28%;width:30%;height:45%;background:#fbe3d2"></b><b class=r style="left:25%;top:55%;width:35%;height:45%;background:#ffffff"></b><b class=e style="left:36%;top:68%;width:14%;height:16%;background:#35a035"></b><b style="left:75%;top:70%;width:25%;height:30%;background:#ffffff"></b></b><b class="k" style="left:93px;top:81.2px;width:58.2px;height:43.2px;background:#fdf6c4"><b class=e style="left:2%;top:25%;width:26%;height:40%;background:#7c4424"></b><b style="left:5%;top:62%;width:28%;height:38%;background:#777777"></b><b class=e style="left:30%;top:12%;width:22%;height:55%;background:#ededed"></b><b class=t style="left:58%;top:18%;width:26%;height:70%;background:#f2500c"></b><b class=e style="left:84%;top:70%;width:14%;height:16%;background:#dc1f1f"></b><b class=e style="left:32%;top:62%;width:22%;height:35%;background:#ededed"></b></b><b class="k" style="left:93px;top:126.3px;width:58.2px;height:43.2px;background:#fdf6c4"><b class=e style="left:2%;top:8%;width:36%;height:50%;background:#7c4424"></b><b class=e style="left:25%;top:42%;width:18%;height:30%;background:#fbe3d2"></b><b style="left:2%;top:68%;width:32%;height:32%;background:#777777"></b><b style="left:30%;top:75%;width:20%;height:25%;background:#ffffff"></b><b class=t style="left:60%;top:22%;width:18%;height:55%;background:#f2500c"></b><b class=e style="left:76%;top:62%;width:14%;height:14%;background:#dc1f1f"></b><b class=e style="left:76%;top:8%;width:14%;height:22%;background:#ffffff"></b></b><b class="k" style="left:93px;top:171.6px;width:58.2px;height:43.2px;background:#fdf6c4"><b class=e style="left:3%;top:5%;width:22%;height:45%;background:#ededed"></b><b class=e style="left:3%;top:52%;width:18%;height:40%;background:#ededed"></b><b class=r style="left:25%;top:30%;width:45%;height:40%;background:#ffffff"></b><b class=e style="left:42%;top:22%;width:14%;height:16%;background:#7c4424"></b><b style="left:50%;top:55%;width:50%;height:45%;background:#bfe4f0"></b><b class=e style="left:74%;top:5%;width:22%;height:60%;background:#ededed"></b><b style="left:48%;top:40%;width:12%;height:10%;background:#1d2c6a"></b></b><i class="g1"></i><i class="g2"></i><i class="g3"></i><i class="t1"></i><i class="t2"></i><i class="t3"></i><i class="t4"></i><i class="c1"></i><i class="c2"></i><i class="c3"></i><i class="c4"></i><i class="c5"></i><i class="c6"></i><i class="c7"></i></div><div class="pn" style="left:213.5px">10</div></div><div class="sp" style="left:690px;top:202px"><div class="pg" style="left:18px"><span class="tt" style="left:100px;top:28.2px;font-size:5.6px;letter-spacing:0.6px">カロリーの塊</span><b class="k" style="left:93px;top:35.8px;width:58.2px;height:43.2px;background:#fdf6c4"><b class=e style="left:18%;top:8%;width:36%;height:48%;background:#7c4424"></b><b class=e style="left:26%;top:30%;width:24%;height:30%;background:#fbe3d2"></b><b class=r style="left:10%;top:65%;width:55%;height:35%;background:#3a96e0"></b><b class=e style="left:64%;top:4%;width:34%;height:58%;background:#ededed"></b></b><b class="k" style="left:93px;top:81.2px;width:58.2px;height:43.2px;background:#fdf6c4"><b class=e style="left:2%;top:40%;width:14%;height:58%;background:#ededed"></b><b class=e style="left:24%;top:20%;width:18%;height:24%;background:#7c4424"></b><b class=r style="left:22%;top:40%;width:16%;height:40%;background:#3a96e0"></b><b style="left:60%;top:32%;width:8%;height:30%;background:#f2500c"></b><b style="left:38%;top:60%;width:32%;height:5%;background:#e9b65a"></b><b class=e style="left:76%;top:6%;width:22%;height:40%;background:#ededed"></b><b class=r style="left:55%;top:60%;width:40%;height:38%;background:#ffffff"></b><b class=e style="left:8%;top:5%;width:14%;height:30%;background:#ededed"></b></b><b class="k" style="left:93px;top:126.3px;width:58.2px;height:43.2px;background:#fdf6c4"><b class=e style="left:0%;top:0%;width:55%;height:38%;background:#161616"></b><b style="left:5%;top:38%;width:40%;height:62%;background:#cccccc"></b><b class=e style="left:12%;top:40%;width:24%;height:40%;background:#fbe3d2"></b><b class=e style="left:36%;top:12%;width:28%;height:70%;background:#ededed"></b><b class=e style="left:78%;top:8%;width:18%;height:22%;background:#ffffff"></b><b class=t style="left:78%;top:45%;width:24%;height:55%;background:#f2500c"></b></b><b class="k" style="left:93px;top:171.6px;width:58.2px;height:43.2px;background:#f6f6f2"><b style="left:3%;top:10%;width:18%;height:80%;background:#ededed"></b><b class=e style="left:28%;top:22%;width:52%;height:62%;background:#f4b0b0"></b><b class=e style="left:34%;top:38%;width:24%;height:28%;background:#dc1f1f"></b><b class=e style="left:52%;top:36%;width:16%;height:20%;background:#f4e050"></b><b class=e style="left:42%;top:28%;width:18%;height:18%;background:#a8602c"></b><b style="left:80%;top:5%;width:16%;height:30%;background:#ededed"></b><b style="left:66%;top:8%;width:16%;height:36%;background:#161616"></b></b><i class="g1"></i><i class="g2"></i><i class="g3"></i><i class="t1"></i><i class="t2"></i><i class="t3"></i><i class="t4"></i><i class="c1"></i><i class="c2"></i><i class="c3"></i><i class="c4"></i><i class="c5"></i><i class="c6"></i><i class="c7"></i></div><div class="pn" style="left:18px">9</div><div class="pg" style="left:213.5px"><span class="tt" style="left:47.5px;top:27.6px;font-size:6.4px;letter-spacing:0.8px">代弁</span><span class="tt" style="left:104px;top:28.4px;font-size:5.4px;letter-spacing:0.5px">それ、どこまで？</span><b class="k" style="left:25.7px;top:35.8px;width:58.4px;height:43.2px;background:#d8d4cc"><b style="left:5%;top:40%;width:95%;height:10%;background:#ffffff"></b><b class=e style="left:22%;top:28%;width:16%;height:12%;background:#35a035"></b><b class=e style="left:52%;top:3%;width:28%;height:45%;background:#ededed"></b><b class=e style="left:28%;top:55%;width:18%;height:40%;background:#ededed"></b><b class=t style="left:68%;top:35%;width:32%;height:65%;background:#7c4424"></b></b><b class="k" style="left:25.7px;top:81.2px;width:58.4px;height:43.2px;background:#fdf6c4"><b class=e style="left:12%;top:20%;width:80%;height:80%;background:#f0928a"></b><b class=e style="left:2%;top:5%;width:14%;height:40%;background:#ededed"></b><b class=e style="left:24%;top:5%;width:14%;height:24%;background:#7c4424"></b><b class=e style="left:12%;top:35%;width:12%;height:40%;background:#7c4424"></b><b class=e style="left:55%;top:12%;width:18%;height:40%;background:#2a6a48"></b><b class=e style="left:26%;top:32%;width:28%;height:48%;background:#ededed"></b><b class=e style="left:56%;top:52%;width:16%;height:32%;background:#ededed"></b><b class=e style="left:82%;top:55%;width:16%;height:25%;background:#7c4424"></b><b style="left:78%;top:75%;width:22%;height:25%;background:#ffffff"></b><b class=e style="left:82%;top:5%;width:14%;height:30%;background:#ededed"></b></b><b class="k" style="left:25.7px;top:126.3px;width:58.4px;height:43.2px;background:#fdf6c4"><b class=e style="left:14%;top:28%;width:28%;height:50%;background:#7c4424"></b><b class=e style="left:18%;top:55%;width:16%;height:20%;background:#fbe3d2"></b><b style="left:22%;top:72%;width:20%;height:28%;background:#ffffff"></b><b class=r style="left:46%;top:4%;width:52%;height:92%;background:#ededed"></b></b><b class="k" style="left:19.6px;top:171.4px;width:65px;height:48.6px;background:#161616"><b class=e style="left:4%;top:12%;width:26%;height:50%;background:#ededed"></b><b class=e style="left:0%;top:50%;width:70%;height:50%;background:#a8e064"></b><b class=e style="left:34%;top:35%;width:32%;height:48%;background:#f2500c"></b><b class=e style="left:62%;top:2%;width:36%;height:68%;background:#ffffff"></b></b><b class="k" style="left:93px;top:35.8px;width:58.2px;height:43.2px;background:#f6b992"><b class=r style="left:18%;top:18%;width:20%;height:82%;background:#161616"></b><b class=e style="left:20%;top:5%;width:14%;height:22%;background:#7c4424"></b><b class=e style="left:70%;top:22%;width:22%;height:34%;background:#fbe3d2"></b><b class=e style="left:66%;top:12%;width:30%;height:30%;background:#161616"></b><b class=e style="left:40%;top:12%;width:26%;height:50%;background:#ededed"></b><b class=e style="left:40%;top:62%;width:30%;height:38%;background:#7c4424"></b><b style="left:76%;top:58%;width:24%;height:42%;background:#ffffff"></b></b><b class="k" style="left:93px;top:81.2px;width:58.2px;height:43.2px;background:#f6b992"><b class=e style="left:4%;top:8%;width:10%;height:22%;background:#7c4424"></b><b class=e style="left:18%;top:8%;width:10%;height:22%;background:#7c4424"></b><b style="left:5%;top:35%;width:40%;height:30%;background:#a8602c"></b><b class=e style="left:38%;top:18%;width:24%;height:30%;background:#7c4424"></b><b style="left:46%;top:40%;width:16%;height:50%;background:#2a6a48"></b><b class=e style="left:64%;top:8%;width:30%;height:70%;background:#ededed"></b><b style="left:2%;top:68%;width:24%;height:30%;background:#ffffff"></b><b style="left:82%;top:80%;width:18%;height:20%;background:#777777"></b></b><b class="k" style="left:93px;top:126.3px;width:58.2px;height:43.2px;background:#fdf6c4"><b class=e style="left:14%;top:8%;width:36%;height:50%;background:#ededed"></b><b class=e style="left:8%;top:48%;width:12%;height:18%;background:#ffffff"></b><b class=t style="left:26%;top:46%;width:18%;height:54%;background:#f2500c"></b><b class=e style="left:56%;top:10%;width:16%;height:22%;background:#7c4424"></b><b style="left:58%;top:30%;width:22%;height:40%;background:#ffffff"></b><b style="left:62%;top:55%;width:18%;height:45%;background:#1d2c6a"></b><b class=e style="left:80%;top:22%;width:18%;height:62%;background:#ededed"></b><b style="left:84%;top:3%;width:10%;height:14%;background:#ffffff"></b></b><b class="k" style="left:93px;top:171.6px;width:58.2px;height:43.2px;background:#fdf6c4"><b style="left:2%;top:3%;width:40%;height:40%;background:#bfe4f0"></b><b class=e style="left:6%;top:38%;width:18%;height:50%;background:#ededed"></b><b class=e style="left:40%;top:22%;width:16%;height:22%;background:#7c4424"></b><b style="left:42%;top:42%;width:20%;height:40%;background:#ffffff"></b><b style="left:54%;top:40%;width:10%;height:36%;background:#161616"></b><b style="left:44%;top:78%;width:16%;height:22%;background:#1d2c6a"></b><b class=e style="left:72%;top:5%;width:22%;height:80%;background:#ededed"></b><b class=e style="left:78%;top:22%;width:22%;height:20%;background:#e9b65a"></b></b><i class="g1"></i><i class="g2"></i><i class="g3"></i><i class="t1"></i><i class="t2"></i><i class="t3"></i><i class="t4"></i><i class="c1"></i><i class="c2"></i><i class="c3"></i><i class="c4"></i><i class="c5"></i><i class="c6"></i><i class="c7"></i></div><div class="pn" style="left:213.5px">8</div></div><div class="sp" style="left:1122px;top:202px"><div class="pg" style="left:18px"><span class="tt" style="left:27px;top:27.6px;font-size:5.3px;letter-spacing:0.15px">アウトプット・インプット</span><span class="tt" style="left:106px;top:27.2px;font-size:6.4px;letter-spacing:0.5px">小指の悲劇</span><b class="k" style="left:25.7px;top:35.8px;width:58.4px;height:43.2px;background:#fdf6c4"><b class=e style="left:12%;top:10%;width:26%;height:62%;background:#7c4424"></b><b class=e style="left:22%;top:30%;width:14%;height:24%;background:#fbe3d2"></b><b class=r style="left:24%;top:52%;width:26%;height:48%;background:#ffffff"></b><b style="left:55%;top:22%;width:42%;height:26%;background:#e9b65a"></b><b style="left:66%;top:12%;width:8%;height:14%;background:#f2500c"></b><b class=e style="left:68%;top:46%;width:24%;height:50%;background:#ededed"></b><b class=e style="left:6%;top:70%;width:12%;height:14%;background:#ffffff"></b></b><b class="k" style="left:25.7px;top:81.2px;width:58.4px;height:43.2px;background:#fdf6c4"><b class=e style="left:2%;top:8%;width:18%;height:40%;background:#ededed"></b><b class=e style="left:24%;top:20%;width:28%;height:48%;background:#7c4424"></b><b style="left:28%;top:56%;width:16%;height:44%;background:#ffffff"></b><b class=e style="left:54%;top:8%;width:18%;height:50%;background:#ededed"></b><b class=t style="left:72%;top:20%;width:30%;height:80%;background:#f2500c"></b><b class=e style="left:80%;top:42%;width:8%;height:14%;background:#ffffff"></b></b><b class="k" style="left:25.7px;top:126.3px;width:58.4px;height:43.2px;background:#161616"><b class=r style="left:0%;top:0%;width:38%;height:100%;background:#f2500c"></b><b class=e style="left:12%;top:35%;width:12%;height:22%;background:#ffffff"></b><b class=r style="left:50%;top:0%;width:50%;height:100%;background:#ffffff"></b><b style="left:56%;top:14%;width:38%;height:76%;background:#ededed"></b></b><b class="k" style="left:25.7px;top:171.6px;width:58.4px;height:43.2px;background:#fdf6c4"><b style="left:4%;top:42%;width:68%;height:54%;background:#e9b65a"></b><b style="left:30%;top:58%;width:26%;height:28%;background:#ffffff"></b><b class=e style="left:10%;top:5%;width:22%;height:36%;background:#ededed"></b><b class=e style="left:40%;top:3%;width:26%;height:42%;background:#ededed"></b><b class=t style="left:72%;top:35%;width:28%;height:65%;background:#7c4424"></b><b style="left:22%;top:48%;width:8%;height:14%;background:#f2500c"></b></b><b class="k" style="left:93px;top:35.8px;width:58.2px;height:43.2px;background:#fdf6c4"><b class=e style="left:2%;top:5%;width:22%;height:42%;background:#ededed"></b><b style="left:25%;top:0%;width:55%;height:100%;background:#f6eeb0"></b><b class=e style="left:22%;top:60%;width:50%;height:26%;background:#bfe4f0"></b><b class=e style="left:42%;top:28%;width:14%;height:16%;background:#7c4424"></b><b style="left:44%;top:40%;width:20%;height:20%;background:#ffffff"></b><b style="left:80%;top:0%;width:20%;height:56%;background:#777777"></b></b><b class="k" style="left:93px;top:81.2px;width:58.2px;height:43.2px;background:#fdf6c4"><b style="left:5%;top:20%;width:60%;height:80%;background:#f6eeb0"></b><b class=e style="left:26%;top:22%;width:12%;height:14%;background:#7c4424"></b><b style="left:28%;top:36%;width:14%;height:20%;background:#ffffff"></b><b style="left:30%;top:55%;width:12%;height:16%;background:#555555"></b><b class=e style="left:66%;top:50%;width:16%;height:22%;background:#7c4424"></b><b class=e style="left:72%;top:3%;width:26%;height:42%;background:#ededed"></b><b style="left:4%;top:60%;width:22%;height:36%;background:#ededed"></b><b style="left:66%;top:78%;width:30%;height:20%;background:#ededed"></b></b><b class="k" style="left:93px;top:126.3px;width:58.2px;height:43.2px;background:#fdf6c4"><b style="left:0%;top:0%;width:60%;height:60%;background:#f6eeb0"></b><b class=r style="left:6%;top:30%;width:40%;height:52%;background:#161616"></b><b style="left:34%;top:20%;width:6%;height:70%;background:#f0a020"></b><b style="left:50%;top:10%;width:24%;height:80%;background:#ffffff"></b><b class=r style="left:74%;top:6%;width:22%;height:40%;background:#dc1f1f"></b><b style="left:60%;top:70%;width:36%;height:28%;background:#ffffff"></b></b><b class="k" style="left:93px;top:171.6px;width:58.2px;height:43.2px;background:#fdf6c4"><b class=e style="left:5%;top:3%;width:26%;height:24%;background:#ededed"></b><b class=r style="left:36%;top:16%;width:24%;height:42%;background:#ffffff"></b><b class=e style="left:42%;top:8%;width:14%;height:14%;background:#7c4424"></b><b style="left:70%;top:3%;width:18%;height:40%;background:#ededed"></b><b class=t style="left:80%;top:45%;width:20%;height:55%;background:#f2500c"></b><b class=e style="left:8%;top:50%;width:12%;height:40%;background:#ededed"></b><b class=e style="left:50%;top:62%;width:14%;height:30%;background:#ededed"></b><b class=e style="left:2%;top:88%;width:14%;height:12%;background:#7c4424"></b></b><i class="g1"></i><i class="g2"></i><i class="g3"></i><i class="t1"></i><i class="t2"></i><i class="t3"></i><i class="t4"></i><i class="c1"></i><i class="c2"></i><i class="c3"></i><i class="c4"></i><i class="c5"></i><i class="c6"></i><i class="c7"></i></div><div class="pn" style="left:18px">7</div><div class="pg" style="left:213.5px"><span class="vt" style="left:64.2px;top:57.5px;font-size:6.9px;letter-spacing:0.15px">すぐに出ない答えは</span><span class="vt" style="left:53.6px;top:78px;font-size:6.9px;letter-spacing:0.15px">無理矢理出さなくても良い</span><span class="vt" style="left:33.4px;top:149px;font-size:8px;letter-spacing:1.300px">ー奈津子。</span><b class="k" style="left:91.8px;top:31px;width:59px;height:44px;background:#f6f6f2"><b style="left:0%;top:0%;width:100%;height:100%;background:#fdf6c4"></b><b class=e style="left:20%;top:0%;width:60%;height:100%;background:#ffffff"></b><b class=t style="left:36%;top:22%;width:22%;height:56%;background:#f2500c"></b><b class=e style="left:56%;top:62%;width:14%;height:16%;background:#dc1f1f"></b><b class=e style="left:2%;top:50%;width:26%;height:45%;background:#ededed"></b><b class=e style="left:66%;top:3%;width:32%;height:60%;background:#ededed"></b><b class=e style="left:28%;top:40%;width:40%;height:20%;background:#bfe4f0"></b></b><b class="k" style="left:91.8px;top:75.6px;width:59px;height:44.4px;background:#9a9a9a"><b style="left:0%;top:0%;width:60%;height:30%;background:#555555"></b><b class=e style="left:14%;top:3%;width:26%;height:28%;background:#7c4424"></b><b class=r style="left:10%;top:30%;width:32%;height:50%;background:#ffffff"></b><b style="left:14%;top:80%;width:26%;height:20%;background:#1c3a9a"></b><b class=e style="left:52%;top:0%;width:48%;height:100%;background:#161616"></b><b class=e style="left:58%;top:8%;width:40%;height:50%;background:#ffffff"></b><b style="left:62%;top:60%;width:36%;height:36%;background:#ededed"></b></b><b class="k" style="left:79.8px;top:122px;width:71px;height:53.4px;background:#c8c4d4"><b style="left:0%;top:40%;width:100%;height:60%;background:#d8d4cc"></b><b class=e style="left:12%;top:2%;width:28%;height:30%;background:#7c4424"></b><b class=e style="left:18%;top:18%;width:16%;height:22%;background:#fbe3d2"></b><b class=r style="left:10%;top:38%;width:34%;height:44%;background:#ffffff"></b><b style="left:14%;top:80%;width:24%;height:20%;background:#1c3a9a"></b><b class=e style="left:50%;top:4%;width:50%;height:94%;background:#161616"></b><b class=r style="left:55%;top:8%;width:45%;height:86%;background:#ffffff"></b></b><span class="vt" style="left:137.2px;top:131.5px;font-size:8.4px;letter-spacing:0;color:#111">あたし彼氏</span><span class="vt" style="left:127px;top:137.5px;font-size:8.4px;letter-spacing:0;color:#111">いない。</span><b class="k" style="left:91.8px;top:177px;width:59px;height:44px;background:#fdf6c4"><b style="left:2%;top:30%;width:12%;height:65%;background:#ededed"></b><b style="left:28%;top:18%;width:10%;height:30%;background:#2a6a48"></b><b class=e style="left:44%;top:12%;width:18%;height:40%;background:#ededed"></b><b class=e style="left:52%;top:42%;width:10%;height:12%;background:#7c4424"></b><b style="left:56%;top:56%;width:14%;height:16%;background:#1d2c6a"></b><b class=e style="left:76%;top:20%;width:20%;height:40%;background:#ededed"></b><b class=e style="left:74%;top:68%;width:22%;height:28%;background:#ededed"></b><b style="left:46%;top:50%;width:10%;height:14%;background:#e8b050"></b></b><i class="g1"></i><i class="g2"></i><i class="g3"></i><i class="t1"></i><i class="t2"></i><i class="t3"></i><i class="t4"></i><i class="c1"></i><i class="c2"></i><i class="c3"></i><i class="c4"></i><i class="c5"></i><i class="c6"></i><i class="c7"></i></div><div class="pn" style="left:213.5px">6</div></div><div class="sp" style="left:1554px;top:202px"><div class="pg" style="left:18px"><span class="vt hw" style="left:47px;top:53px;font-size:20.5px;line-height:25px;letter-spacing:-1.5px;transform:scaleX(1.28)">前世<i class="dt">・</i>現在<i class="dt">・</i>海老<i class="dq">？</i></span><b style="left:62px;top:176px;width:16px;height:4.5px;background:#f2500c;transform:rotate(-28deg);border-radius:2px"></b><b class="k" style="left:91.4px;top:27.5px;width:59.6px;height:47.5px;background:#fdf6c4"><b class=e style="left:18%;top:5%;width:30%;height:42%;background:#ededed"></b><b class=e style="left:72%;top:3%;width:22%;height:40%;background:#ededed"></b><b class=e style="left:50%;top:12%;width:18%;height:20%;background:#7c4424"></b><b style="left:50%;top:28%;width:26%;height:30%;background:#ffffff"></b><b style="left:10%;top:45%;width:78%;height:30%;background:#e9b65a"></b><b style="left:5%;top:42%;width:14%;height:28%;background:#cccccc"></b><b class=e style="left:16%;top:72%;width:18%;height:26%;background:#ededed"></b></b><b class="k" style="left:91.4px;top:79.3px;width:59.6px;height:44px;background:#fdf6c4"><b class=e style="left:4%;top:4%;width:22%;height:42%;background:#35a035"></b><b style="left:6%;top:18%;width:18%;height:8%;background:#161616"></b><b class=e style="left:58%;top:3%;width:20%;height:16%;background:#bfe4f0"></b><b class=e style="left:30%;top:8%;width:28%;height:60%;background:#ededed"></b><b class=e style="left:78%;top:18%;width:20%;height:50%;background:#ededed"></b><b class=t style="left:48%;top:46%;width:36%;height:54%;background:#f2500c"></b><b style="left:4%;top:55%;width:18%;height:38%;background:#ededed"></b></b><b class="k" style="left:91.4px;top:127.5px;width:59.6px;height:44.3px;background:#fdf6c4"><b class=e style="left:42%;top:3%;width:32%;height:48%;background:#ededed"></b><b class=e style="left:8%;top:12%;width:20%;height:30%;background:#ededed"></b><b style="left:8%;top:45%;width:64%;height:46%;background:#e9b65a"></b><b style="left:38%;top:50%;width:8%;height:16%;background:#f2500c"></b><b class=e style="left:70%;top:35%;width:26%;height:32%;background:#7c4424"></b><b style="left:72%;top:62%;width:28%;height:38%;background:#ffffff"></b><b class=e style="left:6%;top:72%;width:16%;height:26%;background:#ededed"></b></b><b class="k" style="left:91.4px;top:177px;width:59.6px;height:44.8px;background:#161616"><b class=e style="left:0%;top:10%;width:62%;height:90%;background:#ffffff"></b><b style="left:8%;top:45%;width:34%;height:45%;background:#ededed"></b><b class=e style="left:58%;top:5%;width:38%;height:42%;background:#ffffff"></b><b class=t style="left:64%;top:50%;width:34%;height:50%;background:#f2500c"></b><b class=e style="left:72%;top:62%;width:8%;height:12%;background:#ffffff"></b><b class=e style="left:84%;top:62%;width:8%;height:12%;background:#ffffff"></b></b><i class="g1"></i><i class="g2"></i><i class="g3"></i><i class="t1"></i><i class="t2"></i><i class="t3"></i><i class="t4"></i><i class="c1"></i><i class="c2"></i><i class="c3"></i><i class="c4"></i><i class="c5"></i><i class="c6"></i><i class="c7"></i></div><div class="pn" style="left:18px">5</div><div class="pg" style="left:213.5px"><span class="vt hw" style="left:37.400px;top:91px;font-size:10.800px;line-height:12px;letter-spacing:-0.900px;transform:scaleX(1.450)">俺はえびフライ</span><b class="t" style="left:35.5px;top:166px;width:11px;height:30px;background:#f2500c;transform:rotate(-8deg)"></b><b class="e" style="left:47px;top:192px;width:6px;height:6px;background:#dc1f1f"></b><b class="k" style="left:91.4px;top:31px;width:59px;height:44px;background:#f6f6f2"><b style="left:30%;top:0%;width:70%;height:100%;background:#f6eeb0"></b><b style="left:3%;top:3%;width:16%;height:45%;background:#ededed"></b><b class=e style="left:30%;top:22%;width:38%;height:52%;background:#f2500c"></b><b class=e style="left:62%;top:18%;width:14%;height:16%;background:#dc1f1f"></b><b class=r style="left:42%;top:62%;width:28%;height:22%;background:#161616"></b><b style="left:4%;top:55%;width:22%;height:30%;background:#ededed"></b></b><b class="k" style="left:91.4px;top:79px;width:59px;height:44.2px;background:#fdf6c4"><b class=e style="left:18%;top:8%;width:22%;height:18%;background:#f4e050"></b><b class=e style="left:22%;top:22%;width:18%;height:30%;background:#fbe3d2"></b><b style="left:0%;top:40%;width:60%;height:40%;background:#ffffff"></b><b class=e style="left:70%;top:5%;width:24%;height:36%;background:#ededed"></b><b class=t style="left:70%;top:45%;width:32%;height:55%;background:#f2500c"></b><b style="left:4%;top:55%;width:40%;height:40%;background:#ededed"></b><b style="left:56%;top:52%;width:6%;height:28%;background:#161616"></b></b><b class="k" style="left:91.4px;top:124.8px;width:59px;height:44px;background:#9a9a9a"><b style="left:2%;top:5%;width:10%;height:30%;background:#ffffff"></b><b class=e style="left:0%;top:25%;width:48%;height:48%;background:#7c4424"></b><b class=e style="left:14%;top:55%;width:30%;height:45%;background:#fbe3d2"></b><b class=e style="left:45%;top:20%;width:55%;height:70%;background:#555555"></b><b class=e style="left:66%;top:45%;width:10%;height:12%;background:#f2500c"></b><b class=e style="left:50%;top:70%;width:40%;height:30%;background:#ffffff"></b></b><b class="k" style="left:91.4px;top:171.8px;width:59px;height:50.9px;background:#f6f6f2"><b style="left:50%;top:0%;width:50%;height:40%;background:#bfe4f0"></b><b class=e style="left:8%;top:10%;width:32%;height:42%;background:#ededed"></b><b class=t style="left:42%;top:26%;width:52%;height:74%;background:#f2500c"></b><b class=e style="left:56%;top:40%;width:9%;height:12%;background:#ffffff"></b><b class=e style="left:72%;top:40%;width:9%;height:12%;background:#ffffff"></b><b style="left:8%;top:62%;width:26%;height:32%;background:#ededed"></b></b><i class="g1"></i><i class="g2"></i><i class="g3"></i><i class="t1"></i><i class="t2"></i><i class="t3"></i><i class="t4"></i><i class="c1"></i><i class="c2"></i><i class="c3"></i><i class="c4"></i><i class="c5"></i><i class="c6"></i><i class="c7"></i></div><div class="pn" style="left:213.5px">4</div></div><div class="sp" style="left:1986px;top:202px"><div class="pg" style="left:18px"><span class="vt hw" style="left:52px;top:43px;font-size:12.500px;line-height:15px;letter-spacing:-1.700px;transform:scaleX(1.550)">であいは突然に。</span><b class="e" style="left:49px;top:148px;width:23px;height:20px;background:#7c4424"></b><b class="e" style="left:55px;top:156px;width:13px;height:14px;background:#fbe3d2"></b><b class="r" style="left:50px;top:172px;width:26px;height:30px;background:#f4f4f4;box-shadow:0 0 0 .5px #999"></b><b class="e" style="left:40px;top:184px;width:22px;height:22px;background:#c4c4c4"></b><b style="left:53px;top:202px;width:20px;height:12px;background:#8a8a8a"></b><b style="left:60px;top:172px;width:6px;height:3px;background:#dc1f1f"></b><b class="k" style="left:93px;top:35.8px;width:58.2px;height:43.2px;background:#f8c8bc"><b class=e style="left:3%;top:25%;width:26%;height:60%;background:#ededed"></b><b class=e style="left:34%;top:16%;width:18%;height:22%;background:#7c4424"></b><b class=r style="left:32%;top:40%;width:24%;height:52%;background:#ffffff"></b><b style="left:34%;top:90%;width:20%;height:10%;background:#161616"></b><b style="left:64%;top:5%;width:32%;height:60%;background:#ededed"></b></b><b class="k" style="left:93px;top:81.2px;width:58.2px;height:43.2px;background:#f4dccf"><b class=e style="left:34%;top:5%;width:34%;height:22%;background:#f2500c"></b><b class=e style="left:30%;top:18%;width:42%;height:12%;background:#ffffff"></b><b style="left:3%;top:8%;width:22%;height:50%;background:#ededed"></b><b class=e style="left:80%;top:5%;width:18%;height:36%;background:#ededed"></b><b class=e style="left:34%;top:46%;width:32%;height:54%;background:#7c4424"></b><b class=e style="left:14%;top:50%;width:18%;height:40%;background:#ffffff"></b><b style="left:0%;top:88%;width:100%;height:12%;background:#f6b992"></b></b><b class="k" style="left:93px;top:126.3px;width:58.2px;height:43.2px;background:#fdf6c4"><b style="left:0%;top:0%;width:52%;height:100%;background:#ededed"></b><b style="left:6%;top:8%;width:40%;height:84%;background:#777777"></b><b style="left:34%;top:60%;width:20%;height:40%;background:#cccccc"></b><b class=e style="left:64%;top:0%;width:36%;height:48%;background:#7c4424"></b><b class=e style="left:68%;top:30%;width:30%;height:40%;background:#fbe3d2"></b><b class=e style="left:76%;top:52%;width:24%;height:26%;background:#dc1f1f"></b><b style="left:78%;top:88%;width:22%;height:12%;background:#dc1f1f"></b></b><b class="k" style="left:93px;top:171.6px;width:58.2px;height:43.2px;background:#ffffff"><b class=r style="left:10%;top:6%;width:38%;height:90%;background:#161616"></b><b class=e style="left:18%;top:26%;width:14%;height:40%;background:#ffffff"></b><b style="left:42%;top:55%;width:14%;height:45%;background:#cccccc"></b><b style="left:58%;top:3%;width:22%;height:50%;background:#161616"></b><b class=e style="left:68%;top:6%;width:32%;height:46%;background:#7c4424"></b><b class=e style="left:74%;top:38%;width:22%;height:24%;background:#fbe3d2"></b><b style="left:74%;top:58%;width:26%;height:42%;background:#dc1f1f"></b><b style="left:58%;top:70%;width:18%;height:30%;background:#161616"></b></b><i class="g1"></i><i class="g2"></i><i class="g3"></i><i class="t1"></i><i class="t2"></i><i class="t3"></i><i class="t4"></i><i class="c1"></i><i class="c2"></i><i class="c3"></i><i class="c4"></i><i class="c5"></i><i class="c6"></i><i class="c7"></i></div><div class="pn" style="left:18px">3</div><div class="pg" style="left:213.5px"><i class="g1"></i><i class="g2"></i><i class="g3"></i><i class="t1"></i><i class="t2"></i><i class="t3"></i><i class="t4"></i><i class="c1"></i><i class="c2"></i><i class="c3"></i><i class="c4"></i><i class="c5"></i><i class="c6"></i><i class="c7"></i></div><div class="pn" style="left:213.5px">2</div></div><div class="sp" style="left:2418px;top:202px"><div class="pg" style="left:18px"><i class="g1"></i><i class="g2"></i><i class="g3"></i><i class="t1"></i><i class="t2"></i><i class="t3"></i><i class="t4"></i><i class="c1"></i><i class="c2"></i><i class="c3"></i><i class="c4"></i><i class="c5"></i><i class="c6"></i><i class="c7"></i></div><div class="pn" style="left:18px">1</div></div><div class="sp" style="left:258px;top:552px"><div class="pg" style="left:18px"><b class="k" style="left:93px;top:35.8px;width:58.2px;height:43.2px;background:#fdf6c4"><b style="left:34%;top:0%;width:52%;height:44%;background:#e9b65a"></b><b style="left:3%;top:5%;width:28%;height:46%;background:#ededed"></b><b class=e style="left:8%;top:55%;width:28%;height:40%;background:#ededed"></b><b class=e style="left:70%;top:20%;width:30%;height:36%;background:#7c4424"></b><b class=e style="left:72%;top:40%;width:18%;height:30%;background:#fbe3d2"></b><b style="left:78%;top:72%;width:22%;height:28%;background:#cccccc"></b><b style="left:48%;top:18%;width:8%;height:14%;background:#a8602c"></b></b><b class="k" style="left:93px;top:81.2px;width:58.2px;height:43.2px;background:#fdf6c4"><b class=t style="left:33%;top:12%;width:35%;height:88%;background:#f2500c"></b><b class=e style="left:40%;top:26%;width:8%;height:10%;background:#ffffff"></b><b class=e style="left:54%;top:26%;width:8%;height:10%;background:#ffffff"></b><b style="left:3%;top:40%;width:12%;height:58%;background:#ededed"></b><b style="left:74%;top:5%;width:24%;height:42%;background:#ededed"></b></b><b class="k" style="left:93px;top:126.3px;width:58.2px;height:43.2px;background:#fdf6c4"><b class=e style="left:0%;top:0%;width:36%;height:55%;background:#ededed"></b><b class=t style="left:20%;top:60%;width:22%;height:40%;background:#f2500c"></b><b class=e style="left:48%;top:8%;width:16%;height:18%;background:#7c4424"></b><b style="left:46%;top:26%;width:20%;height:34%;background:#cccccc"></b><b style="left:48%;top:58%;width:16%;height:42%;background:#ffffff"></b><b style="left:78%;top:5%;width:20%;height:36%;background:#ededed"></b><b class=e style="left:72%;top:56%;width:14%;height:26%;background:#ededed"></b><b class=e style="left:4%;top:70%;width:10%;height:16%;background:#ffffff"></b></b><b class="k" style="left:93px;top:171.6px;width:58.2px;height:43.2px;background:#fdf6c4"><b class=t style="left:28%;top:12%;width:38%;height:88%;background:#f2500c"></b><b class=e style="left:38%;top:30%;width:9%;height:12%;background:#ffffff"></b><b class=e style="left:54%;top:30%;width:9%;height:12%;background:#ffffff"></b><b class=e style="left:68%;top:3%;width:30%;height:58%;background:#ededed"></b><b style="left:3%;top:25%;width:14%;height:70%;background:#ededed"></b></b><i class="g1"></i><i class="g2"></i><i class="g3"></i><i class="t1"></i><i class="t2"></i><i class="t3"></i><i class="t4"></i><i class="c1"></i><i class="c2"></i><i class="c3"></i><i class="c4"></i><i class="c5"></i><i class="c6"></i><i class="c7"></i></div><div class="pn" style="left:18px">23</div><div class="pg" style="left:213.5px"><i class="g1"></i><i class="g2"></i><i class="g3"></i><i class="t1"></i><i class="t2"></i><i class="t3"></i><i class="t4"></i><i class="c1"></i><i class="c2"></i><i class="c3"></i><i class="c4"></i><i class="c5"></i><i class="c6"></i><i class="c7"></i></div><div class="pn" style="left:213.5px">22</div></div><div class="sp" style="left:690px;top:552px"><div class="pg" style="left:18px"><b class="k" style="left:25.7px;top:35.8px;width:58.4px;height:43.2px;background:#cccccc"><b class=e style="left:2%;top:5%;width:24%;height:60%;background:#ededed"></b><b class=e style="left:4%;top:55%;width:22%;height:42%;background:#ededed"></b><b class=r style="left:27%;top:0%;width:46%;height:86%;background:#161616"></b><b class=e style="left:38%;top:22%;width:24%;height:32%;background:#ffffff"></b><b class=r style="left:30%;top:56%;width:50%;height:44%;background:#dc1f1f"></b><b class=e style="left:76%;top:5%;width:22%;height:80%;background:#ededed"></b></b><b class="k" style="left:25.7px;top:81.2px;width:58.4px;height:43.2px;background:#d6d6d6"><b class=e style="left:22%;top:5%;width:56%;height:90%;background:#ffffff"></b><b class=e style="left:36%;top:22%;width:28%;height:60%;background:#c9c2b6"></b><b class=e style="left:2%;top:8%;width:16%;height:50%;background:#ededed"></b><b style="left:82%;top:5%;width:16%;height:50%;background:#ededed"></b><b class=e style="left:3%;top:62%;width:14%;height:30%;background:#ededed"></b></b><b class="k" style="left:25.7px;top:126.3px;width:58.4px;height:43.2px;background:#c2c2c2"><b class=e style="left:30%;top:15%;width:40%;height:40%;background:#ffffff"></b><b class=e style="left:10%;top:5%;width:24%;height:45%;background:#ededed"></b><b class=e style="left:74%;top:5%;width:24%;height:60%;background:#ededed"></b><b class=t style="left:40%;top:56%;width:24%;height:44%;background:#161616"></b><b class=e style="left:4%;top:55%;width:18%;height:40%;background:#ededed"></b><b class=e style="left:70%;top:68%;width:20%;height:28%;background:#ededed"></b></b><b class="k" style="left:25.7px;top:171.6px;width:58.4px;height:43.2px;background:#d8d4cc"><b class=e style="left:24%;top:0%;width:28%;height:46%;background:#161616"></b><b class=e style="left:32%;top:12%;width:14%;height:22%;background:#ffffff"></b><b style="left:52%;top:0%;width:48%;height:46%;background:#dc1f1f"></b><b class=e style="left:8%;top:20%;width:18%;height:50%;background:#ededed"></b><b class=e style="left:50%;top:14%;width:24%;height:60%;background:#ffffff"></b><b class=e style="left:0%;top:62%;width:60%;height:38%;background:#cfc8b8"></b><b style="left:66%;top:70%;width:30%;height:22%;background:#161616"></b></b><b class="k" style="left:93px;top:35.8px;width:58.2px;height:43.2px;background:#b4b4b4"><b style="left:44%;top:0%;width:32%;height:100%;background:#e4e4c6"></b><b class=r style="left:22%;top:50%;width:24%;height:50%;background:#777777"></b><b class=r style="left:55%;top:52%;width:10%;height:32%;background:#dc1f1f"></b><b class=e style="left:55%;top:46%;width:10%;height:12%;background:#161616"></b><b class=e style="left:12%;top:5%;width:26%;height:50%;background:#ededed"></b><b style="left:4%;top:55%;width:16%;height:36%;background:#ededed"></b><b style="left:80%;top:5%;width:18%;height:26%;background:#ededed"></b><b class=e style="left:66%;top:30%;width:10%;height:16%;background:#ffffff"></b></b><b class="k" style="left:93px;top:81.2px;width:58.2px;height:43.2px;background:#9a9a9a"><b class=e style="left:0%;top:28%;width:52%;height:72%;background:#161616"></b><b class=e style="left:44%;top:14%;width:32%;height:42%;background:#f0e8a0"></b><b style="left:54%;top:30%;width:14%;height:16%;background:#a8602c"></b><b class=e style="left:2%;top:5%;width:22%;height:36%;background:#ededed"></b><b style="left:52%;top:55%;width:22%;height:45%;background:#cccccc"></b><b class=e style="left:72%;top:50%;width:26%;height:42%;background:#ededed"></b></b><b class="k" style="left:93px;top:126.3px;width:58.2px;height:43.2px;background:#c4c4c4"><b class=e style="left:30%;top:0%;width:52%;height:30%;background:#161616"></b><b class=e style="left:42%;top:6%;width:24%;height:24%;background:#ffffff"></b><b style="left:4%;top:55%;width:52%;height:45%;background:#9a6a40"></b><b style="left:8%;top:20%;width:30%;height:60%;background:#161616"></b><b style="left:60%;top:40%;width:20%;height:50%;background:#cccccc"></b><b style="left:66%;top:35%;width:8%;height:22%;background:#dc1f1f"></b><b style="left:82%;top:5%;width:18%;height:58%;background:#ededed"></b></b><b class="k" style="left:93px;top:171.6px;width:58.2px;height:43.2px;background:#8a8a8a"><b class=r style="left:28%;top:0%;width:18%;height:76%;background:#dc1f1f"></b><b class=e style="left:0%;top:5%;width:28%;height:56%;background:#ededed"></b><b class=e style="left:64%;top:5%;width:32%;height:58%;background:#ededed"></b><b class=e style="left:45%;top:20%;width:40%;height:80%;background:#555555"></b><b style="left:3%;top:68%;width:18%;height:28%;background:#ededed"></b><b style="left:66%;top:66%;width:8%;height:22%;background:#f4e050"></b><b style="left:26%;top:74%;width:12%;height:10%;background:#ffffff"></b></b><i class="g1"></i><i class="g2"></i><i class="g3"></i><i class="t1"></i><i class="t2"></i><i class="t3"></i><i class="t4"></i><i class="c1"></i><i class="c2"></i><i class="c3"></i><i class="c4"></i><i class="c5"></i><i class="c6"></i><i class="c7"></i></div><div class="pn" style="left:18px">21</div><div class="pg" style="left:213.5px"><b class="k" style="left:25.7px;top:35.8px;width:58.4px;height:43.2px;background:#1c3a9a"><b style="left:0%;top:0%;width:44%;height:100%;background:#9a9a9a"></b><b class=e style="left:10%;top:4%;width:28%;height:22%;background:#7c4424"></b><b class=r style="left:10%;top:40%;width:30%;height:60%;background:#ffffff"></b><b class=e style="left:18%;top:20%;width:18%;height:24%;background:#fbe3d2"></b><b class=e style="left:48%;top:5%;width:34%;height:50%;background:#ffffff"></b><b class=e style="left:44%;top:50%;width:38%;height:48%;background:#ffffff"></b><b style="left:88%;top:25%;width:10%;height:30%;background:#dc1f1f"></b><b class=e style="left:88%;top:12%;width:10%;height:16%;background:#161616"></b><b style="left:16%;top:68%;width:10%;height:20%;background:#dc1f1f"></b></b><b class="k" style="left:25.7px;top:81.2px;width:58.4px;height:43.2px;background:#e6e6de"><b style="left:0%;top:0%;width:30%;height:100%;background:#bbb"></b><b class=e style="left:28%;top:10%;width:22%;height:40%;background:#ededed"></b><b class=e style="left:74%;top:5%;width:22%;height:34%;background:#ededed"></b><b class=e style="left:48%;top:14%;width:24%;height:30%;background:#7c4424"></b><b class=r style="left:54%;top:40%;width:32%;height:46%;background:#ffffff"></b><b class=r style="left:34%;top:52%;width:10%;height:24%;background:#dc1f1f"></b><b class=e style="left:34%;top:46%;width:10%;height:10%;background:#161616"></b><b class=e style="left:6%;top:55%;width:20%;height:40%;background:#ededed"></b></b><b class="k" style="left:25.7px;top:126.3px;width:58.4px;height:43.2px;background:#1c3a9a"><b style="left:0%;top:0%;width:50%;height:46%;background:#ededed"></b><b class=e style="left:58%;top:14%;width:34%;height:38%;background:#7c4424"></b><b class=e style="left:62%;top:36%;width:20%;height:22%;background:#fbe3d2"></b><b class=r style="left:52%;top:56%;width:48%;height:44%;background:#777777"></b><b class=t style="left:4%;top:50%;width:32%;height:50%;background:#161616"></b><b class=e style="left:14%;top:64%;width:14%;height:20%;background:#ffffff"></b><b style="left:22%;top:86%;width:10%;height:14%;background:#dc1f1f"></b><b style="left:86%;top:5%;width:12%;height:30%;background:#ededed"></b></b><b class="k" style="left:25.7px;top:171.6px;width:58.4px;height:43.2px;background:#c8c4d4"><b class=e style="left:14%;top:0%;width:58%;height:72%;background:#161616"></b><b class=e style="left:36%;top:24%;width:34%;height:46%;background:#ffffff"></b><b style="left:34%;top:70%;width:42%;height:30%;background:#dc1f1f"></b><b style="left:52%;top:56%;width:8%;height:6%;background:#dc1f1f"></b><b class=r style="left:70%;top:5%;width:30%;height:92%;background:#ffffff"></b><b style="left:2%;top:55%;width:16%;height:40%;background:#ededed"></b></b><b class="k" style="left:93px;top:35.8px;width:58.2px;height:43.2px;background:#fdf6c4"><b class=e style="left:0%;top:5%;width:30%;height:70%;background:#ededed"></b><b class=r style="left:34%;top:0%;width:42%;height:72%;background:#161616"></b><b class=e style="left:42%;top:18%;width:26%;height:34%;background:#ffffff"></b><b class=r style="left:34%;top:52%;width:32%;height:48%;background:#dc1f1f"></b><b class=t style="left:62%;top:34%;width:34%;height:66%;background:#f2500c"></b><b class=e style="left:70%;top:46%;width:7%;height:9%;background:#ffffff"></b></b><b class="k" style="left:93px;top:81.2px;width:58.2px;height:43.2px;background:#fdf6c4"><b class=e style="left:3%;top:5%;width:24%;height:55%;background:#ededed"></b><b class=e style="left:34%;top:8%;width:14%;height:18%;background:#7c4424"></b><b style="left:32%;top:26%;width:16%;height:34%;background:#ffffff"></b><b style="left:34%;top:60%;width:12%;height:30%;background:#777777"></b><b class=e style="left:52%;top:5%;width:20%;height:50%;background:#ededed"></b><b class=e style="left:76%;top:18%;width:22%;height:62%;background:#ededed"></b><b style="left:26%;top:76%;width:12%;height:22%;background:#f2500c"></b><b class=e style="left:50%;top:74%;width:16%;height:24%;background:#161616"></b><b style="left:3%;top:62%;width:18%;height:30%;background:#ededed"></b></b><b class="k" style="left:93px;top:126.3px;width:58.2px;height:43.2px;background:#fdf6c4"><b class=e style="left:0%;top:0%;width:32%;height:62%;background:#7c4424"></b><b class=e style="left:10%;top:34%;width:20%;height:34%;background:#fbe3d2"></b><b style="left:34%;top:46%;width:66%;height:54%;background:#e9b65a"></b><b class=e style="left:34%;top:5%;width:26%;height:40%;background:#ededed"></b><b class=r style="left:68%;top:32%;width:8%;height:28%;background:#dc1f1f"></b><b class=e style="left:68%;top:26%;width:8%;height:8%;background:#161616"></b><b style="left:80%;top:58%;width:12%;height:10%;background:#f2500c"></b><b style="left:80%;top:5%;width:18%;height:40%;background:#ededed"></b><b style="left:4%;top:68%;width:22%;height:26%;background:#ededed"></b></b><b class="k" style="left:93px;top:171.6px;width:58.2px;height:43.2px;background:#c8c4d4"><b class=r style="left:18%;top:0%;width:68%;height:60%;background:#161616"></b><b class=e style="left:28%;top:20%;width:44%;height:36%;background:#ffffff"></b><b style="left:28%;top:54%;width:54%;height:46%;background:#dc1f1f"></b><b style="left:22%;top:40%;width:12%;height:50%;background:#161616"></b><b style="left:72%;top:0%;width:28%;height:100%;background:#ededed"></b></b><i class="g1"></i><i class="g2"></i><i class="g3"></i><i class="t1"></i><i class="t2"></i><i class="t3"></i><i class="t4"></i><i class="c1"></i><i class="c2"></i><i class="c3"></i><i class="c4"></i><i class="c5"></i><i class="c6"></i><i class="c7"></i></div><div class="pn" style="left:213.5px">20</div></div><div class="sp" style="left:1122px;top:552px"><div class="pg" style="left:18px"><b class="k" style="left:25.7px;top:35.8px;width:58.4px;height:43.2px;background:#fdf6c4"><b style="left:0%;top:56%;width:100%;height:44%;background:#e9b65a"></b><b class=e style="left:18%;top:10%;width:34%;height:36%;background:#bfe4f0"></b><b class=e style="left:34%;top:24%;width:14%;height:18%;background:#161616"></b><b class=r style="left:34%;top:40%;width:14%;height:30%;background:#dc1f1f"></b><b class=t style="left:56%;top:42%;width:9%;height:22%;background:#f2500c"></b><b class=e style="left:70%;top:5%;width:22%;height:56%;background:#ededed"></b><b class=e style="left:4%;top:50%;width:26%;height:45%;background:#ededed"></b></b><b class="k" style="left:25.7px;top:81.2px;width:58.4px;height:43.2px;background:#ffffff"><b style="left:2%;top:3%;width:56%;height:94%;background:#ededed"></b><b class=r style="left:58%;top:0%;width:38%;height:46%;background:#161616"></b><b class=e style="left:62%;top:22%;width:18%;height:24%;background:#ffffff"></b><b class=r style="left:64%;top:46%;width:26%;height:54%;background:#dc1f1f"></b><b class=t style="left:84%;top:36%;width:16%;height:64%;background:#f2500c"></b><b style="left:50%;top:78%;width:8%;height:16%;background:#f2500c"></b></b><b class="k" style="left:25.7px;top:126.3px;width:58.4px;height:43.2px;background:#fdf6c4"><b style="left:58%;top:0%;width:42%;height:72%;background:#ededed"></b><b class=e style="left:2%;top:8%;width:26%;height:50%;background:#ededed"></b><b style="left:14%;top:66%;width:82%;height:34%;background:#e9b65a"></b><b class=e style="left:38%;top:24%;width:10%;height:12%;background:#161616"></b><b class=r style="left:38%;top:34%;width:10%;height:30%;background:#dc1f1f"></b><b class=t style="left:52%;top:40%;width:7%;height:24%;background:#f2500c"></b><b class=e style="left:0%;top:76%;width:30%;height:24%;background:#7c4424"></b></b><b class="k" style="left:25.7px;top:171.6px;width:58.4px;height:43.2px;background:#ffffff"><b style="left:3%;top:5%;width:18%;height:80%;background:#ededed"></b><b class=e style="left:28%;top:0%;width:48%;height:56%;background:#7c4424"></b><b class=e style="left:40%;top:26%;width:30%;height:44%;background:#fbe3d2"></b><b style="left:18%;top:70%;width:60%;height:30%;background:#ffffff"></b><b style="left:22%;top:78%;width:10%;height:22%;background:#161616"></b><b style="left:62%;top:78%;width:10%;height:22%;background:#161616"></b><b style="left:76%;top:3%;width:22%;height:40%;background:#ededed"></b></b><b class="k" style="left:93px;top:35.8px;width:58.2px;height:43.2px;background:#1a2f78"><b style="left:0%;top:0%;width:14%;height:100%;background:#777777"></b><b class=e style="left:5%;top:10%;width:24%;height:50%;background:#ffffff"></b><b class=e style="left:68%;top:4%;width:28%;height:42%;background:#ffffff"></b><b class=e style="left:42%;top:30%;width:24%;height:30%;background:#7c4424"></b><b class=e style="left:44%;top:40%;width:12%;height:20%;background:#fbe3d2"></b><b class=r style="left:44%;top:70%;width:26%;height:30%;background:#ffffff"></b><b style="left:42%;top:72%;width:8%;height:28%;background:#161616"></b></b><b class="k" style="left:93px;top:81.2px;width:58.2px;height:43.2px;background:#777777"><b class=r style="left:0%;top:0%;width:72%;height:72%;background:#161616"></b><b class=e style="left:4%;top:24%;width:42%;height:58%;background:#ffffff"></b><b style="left:12%;top:62%;width:10%;height:6%;background:#dc1f1f"></b><b style="left:0%;top:80%;width:42%;height:20%;background:#dc1f1f"></b><b class=e style="left:68%;top:5%;width:30%;height:66%;background:#ededed"></b><b style="left:66%;top:72%;width:30%;height:26%;background:#161616"></b></b><b class="k" style="left:93px;top:126.3px;width:58.2px;height:43.2px;background:#fdf6c4"><b style="left:50%;top:0%;width:50%;height:100%;background:#8a8094"></b><b class=r style="left:28%;top:8%;width:18%;height:80%;background:#b8aec4"></b><b class=e style="left:3%;top:20%;width:22%;height:36%;background:#ededed"></b><b class=e style="left:70%;top:3%;width:28%;height:50%;background:#ededed"></b><b class=t style="left:10%;top:60%;width:24%;height:40%;background:#f2500c"></b><b class=e style="left:58%;top:60%;width:30%;height:40%;background:#161616"></b></b><b class="k" style="left:93px;top:171.6px;width:58.2px;height:43.2px;background:#ffffff"><b style="left:3%;top:3%;width:34%;height:60%;background:#ededed"></b><b style="left:6%;top:66%;width:30%;height:28%;background:#161616"></b><b style="left:36%;top:0%;width:22%;height:100%;background:#9a9a9a"></b><b class=r style="left:50%;top:0%;width:50%;height:62%;background:#161616"></b><b class=e style="left:56%;top:16%;width:28%;height:40%;background:#ffffff"></b><b class=r style="left:70%;top:42%;width:30%;height:58%;background:#dc1f1f"></b><b style="left:60%;top:60%;width:12%;height:40%;background:#161616"></b></b><i class="g1"></i><i class="g2"></i><i class="g3"></i><i class="t1"></i><i class="t2"></i><i class="t3"></i><i class="t4"></i><i class="c1"></i><i class="c2"></i><i class="c3"></i><i class="c4"></i><i class="c5"></i><i class="c6"></i><i class="c7"></i></div><div class="pn" style="left:18px">19</div><div class="pg" style="left:213.5px"><b class="k" style="left:25.7px;top:35.8px;width:58.4px;height:43.2px;background:#cacaca"><b style="left:22%;top:5%;width:54%;height:52%;background:#161616"></b><b style="left:26%;top:10%;width:28%;height:42%;background:#cccccc"></b><b style="left:58%;top:30%;width:14%;height:22%;background:#dc1f1f"></b><b class=e style="left:58%;top:14%;width:14%;height:18%;background:#161616"></b><b class=e style="left:12%;top:56%;width:44%;height:44%;background:#c2e6e2"></b><b class=e style="left:78%;top:25%;width:16%;height:36%;background:#ededed"></b><b style="left:3%;top:30%;width:12%;height:30%;background:#ededed"></b><b style="left:68%;top:70%;width:8%;height:30%;background:#f2500c"></b><b style="left:72%;top:62%;width:12%;height:30%;background:#ffffff"></b></b><b class="k" style="left:25.7px;top:81.2px;width:58.4px;height:43.2px;background:#b8b8b8"><b style="left:0%;top:22%;width:30%;height:62%;background:#161616"></b><b style="left:36%;top:50%;width:44%;height:24%;background:#e9b65a"></b><b style="left:62%;top:74%;width:6%;height:24%;background:#e9b65a"></b><b class=e style="left:34%;top:8%;width:14%;height:30%;background:#ededed"></b><b class=e style="left:50%;top:22%;width:16%;height:30%;background:#bfe4f0"></b><b class=e style="left:72%;top:5%;width:22%;height:36%;background:#ededed"></b><b class=e style="left:36%;top:66%;width:14%;height:28%;background:#ededed"></b><b style="left:40%;top:42%;width:14%;height:10%;background:#a8602c"></b></b><b class="k" style="left:25.7px;top:126.3px;width:58.4px;height:43.2px;background:#e8ecd8"><b class=e style="left:22%;top:5%;width:56%;height:70%;background:#bfe4f0"></b><b class=e style="left:46%;top:10%;width:26%;height:30%;background:#7c4424"></b><b class=e style="left:50%;top:28%;width:18%;height:26%;background:#fbe3d2"></b><b class=t style="left:24%;top:40%;width:28%;height:60%;background:#f2500c"></b><b style="left:50%;top:62%;width:50%;height:38%;background:#e9b65a"></b><b class=e style="left:3%;top:12%;width:22%;height:66%;background:#ededed"></b><b class=e style="left:76%;top:3%;width:22%;height:56%;background:#ededed"></b></b><b class="k" style="left:25.7px;top:171.6px;width:58.4px;height:43.2px;background:#b0b0b0"><b style="left:20%;top:10%;width:56%;height:52%;background:#5a607a"></b><b class=e style="left:36%;top:24%;width:12%;height:18%;background:#161616"></b><b style="left:38%;top:40%;width:12%;height:16%;background:#dc1f1f"></b><b style="left:56%;top:16%;width:18%;height:36%;background:#ededed"></b><b class=e style="left:4%;top:76%;width:42%;height:24%;background:#c2e6e2"></b><b class=e style="left:72%;top:16%;width:24%;height:46%;background:#ffffff"></b><b class=e style="left:3%;top:34%;width:16%;height:20%;background:#ffffff"></b><b style="left:66%;top:72%;width:12%;height:28%;background:#f2500c"></b><b style="left:44%;top:84%;width:24%;height:16%;background:#e9b65a"></b></b><i class="g1"></i><i class="g2"></i><i class="g3"></i><i class="t1"></i><i class="t2"></i><i class="t3"></i><i class="t4"></i><i class="c1"></i><i class="c2"></i><i class="c3"></i><i class="c4"></i><i class="c5"></i><i class="c6"></i><i class="c7"></i></div><div class="pn" style="left:213.5px">18</div></div><div class="sp" style="left:1554px;top:552px"><div class="pg" style="left:18px"><b class="k" style="left:93px;top:35.8px;width:58.2px;height:43.2px;background:#fdf6c4"><b class=e style="left:22%;top:5%;width:20%;height:38%;background:#ededed"></b><b class=e style="left:72%;top:5%;width:20%;height:32%;background:#ededed"></b><b class=t style="left:56%;top:16%;width:12%;height:26%;background:#f2500c"></b><b class=e style="left:50%;top:36%;width:10%;height:10%;background:#dc1f1f"></b><b class=e style="left:4%;top:40%;width:46%;height:60%;background:#7c4424"></b><b style="left:14%;top:82%;width:28%;height:18%;background:#555555"></b></b><b class="k" style="left:93px;top:81.2px;width:58.2px;height:43.2px;background:#fdf6c4"><b class=e style="left:0%;top:0%;width:16%;height:46%;background:#7c4424"></b><b class=r style="left:4%;top:42%;width:26%;height:58%;background:#ffffff"></b><b class=t style="left:20%;top:30%;width:10%;height:22%;background:#f2500c"></b><b class=e style="left:30%;top:55%;width:22%;height:40%;background:#ededed"></b><b class=e style="left:56%;top:16%;width:12%;height:16%;background:#7c4424"></b><b style="left:54%;top:30%;width:16%;height:24%;background:#ffffff"></b><b style="left:56%;top:52%;width:12%;height:18%;background:#bfe4f0"></b><b class=e style="left:78%;top:4%;width:18%;height:22%;background:#ffffff"></b><b class=t style="left:74%;top:36%;width:24%;height:64%;background:#f2500c"></b></b><b class="k" style="left:93px;top:126.3px;width:58.2px;height:43.2px;background:#555555"><b class=e style="left:0%;top:0%;width:42%;height:62%;background:#f0c8ea"></b><b class=r style="left:2%;top:24%;width:38%;height:16%;background:#161616"></b><b class=e style="left:40%;top:5%;width:48%;height:62%;background:#fbe3d2"></b><b class=r style="left:40%;top:0%;width:60%;height:34%;background:#7c4424"></b><b class=t style="left:48%;top:66%;width:24%;height:34%;background:#f2500c"></b><b style="left:74%;top:55%;width:26%;height:45%;background:#ffffff"></b><b style="left:36%;top:74%;width:12%;height:24%;background:#ffffff"></b><b class=e style="left:34%;top:38%;width:10%;height:20%;background:#ffffff"></b></b><b class="k" style="left:93px;top:171.6px;width:58.2px;height:43.2px;background:#fdf6c4"><b style="left:54%;top:0%;width:42%;height:38%;background:#35a035"></b><b class=e style="left:44%;top:20%;width:22%;height:36%;background:#f2500c"></b><b class=e style="left:62%;top:40%;width:10%;height:12%;background:#dc1f1f"></b><b class=e style="left:24%;top:5%;width:20%;height:50%;background:#ededed"></b><b style="left:3%;top:5%;width:18%;height:40%;background:#ededed"></b><b style="left:24%;top:58%;width:62%;height:14%;background:#161616"></b><b style="left:30%;top:76%;width:40%;height:10%;background:#161616"></b><b class=e style="left:0%;top:52%;width:26%;height:48%;background:#fbe3d2"></b><b class=e style="left:0%;top:46%;width:12%;height:30%;background:#7c4424"></b></b><i class="g1"></i><i class="g2"></i><i class="g3"></i><i class="t1"></i><i class="t2"></i><i class="t3"></i><i class="t4"></i><i class="c1"></i><i class="c2"></i><i class="c3"></i><i class="c4"></i><i class="c5"></i><i class="c6"></i><i class="c7"></i></div><div class="pn" style="left:18px">17</div><div class="pg" style="left:213.5px"><b class="k" style="left:25.7px;top:35.8px;width:58.4px;height:43.2px;background:#f6b992"><b style="left:22%;top:0%;width:26%;height:100%;background:#16246a"></b><b class=e style="left:28%;top:12%;width:7%;height:10%;background:#f4e050"></b><b style="left:40%;top:30%;width:10%;height:6%;background:#ffffff"></b><b class=e style="left:54%;top:8%;width:32%;height:44%;background:#ededed"></b><b class=e style="left:10%;top:55%;width:22%;height:36%;background:#ededed"></b><b class=e style="left:50%;top:40%;width:26%;height:42%;background:#7c4424"></b><b class=e style="left:48%;top:56%;width:12%;height:18%;background:#fbe3d2"></b><b style="left:52%;top:76%;width:30%;height:24%;background:#cccccc"></b><b style="left:26%;top:80%;width:20%;height:6%;background:#dc1f1f"></b></b><b class="k" style="left:25.7px;top:81.2px;width:58.4px;height:43.2px;background:#f6b992"><b style="left:0%;top:0%;width:46%;height:100%;background:#f2500c"></b><b class=r style="left:4%;top:14%;width:30%;height:60%;background:#161616"></b><b style="left:22%;top:50%;width:10%;height:50%;background:#fdf6c4"></b><b style="left:50%;top:0%;width:16%;height:76%;background:#16246a"></b><b class=e style="left:54%;top:8%;width:7%;height:10%;background:#f4e050"></b><b class=e style="left:68%;top:20%;width:18%;height:26%;background:#7c4424"></b><b class=r style="left:64%;top:44%;width:32%;height:36%;background:#cccccc"></b><b style="left:38%;top:78%;width:62%;height:22%;background:#ffffff"></b><b style="left:48%;top:48%;width:14%;height:26%;background:#ffffff"></b></b><b class="k" style="left:25.7px;top:126.3px;width:58.4px;height:43.2px;background:#bbb"><b class=e style="left:0%;top:0%;width:26%;height:46%;background:#7c4424"></b><b style="left:0%;top:46%;width:30%;height:54%;background:#cccccc"></b><b style="left:34%;top:0%;width:10%;height:40%;background:#f2500c"></b><b class=e style="left:22%;top:28%;width:28%;height:40%;background:#ededed"></b><b style="left:40%;top:12%;width:44%;height:30%;background:#161616"></b><b class=e style="left:66%;top:14%;width:26%;height:20%;background:#e8b050"></b><b style="left:62%;top:36%;width:30%;height:30%;background:#cccccc"></b><b class=e style="left:76%;top:55%;width:22%;height:40%;background:#ededed"></b><b class=e style="left:46%;top:66%;width:22%;height:34%;background:#7c4424"></b><b class=e style="left:4%;top:82%;width:14%;height:14%;background:#f2500c"></b></b><b class="k" style="left:25.7px;top:171.6px;width:58.4px;height:43.2px;background:#fdf6c4"><b class=t style="left:34%;top:14%;width:36%;height:86%;background:#f2500c"></b><b class=r style="left:50%;top:62%;width:14%;height:28%;background:#dc1f1f"></b><b class=e style="left:44%;top:28%;width:7%;height:9%;background:#ffffff"></b><b class=e style="left:72%;top:5%;width:24%;height:46%;background:#ededed"></b><b style="left:3%;top:5%;width:22%;height:36%;background:#ededed"></b><b class=e style="left:4%;top:56%;width:20%;height:40%;background:#ededed"></b><b style="left:30%;top:5%;width:10%;height:30%;background:#ffffff"></b></b><b class="k" style="left:93px;top:35.8px;width:58.2px;height:43.2px;background:#fdf6c4"><b class=e style="left:2%;top:18%;width:36%;height:54%;background:#7c4424"></b><b class=e style="left:10%;top:34%;width:26%;height:40%;background:#fbe3d2"></b><b class=r style="left:0%;top:76%;width:56%;height:24%;background:#a89080"></b><b class=e style="left:40%;top:5%;width:22%;height:36%;background:#ededed"></b><b class=e style="left:68%;top:5%;width:20%;height:26%;background:#ededed"></b><b class=r style="left:64%;top:28%;width:36%;height:42%;background:#f0a020"></b><b class=e style="left:46%;top:46%;width:20%;height:46%;background:#ededed"></b></b><b class="k" style="left:93px;top:81.2px;width:58.2px;height:43.2px;background:#fdf6c4"><b style="left:0%;top:0%;width:100%;height:100%;background:#f6eeb0"></b><b class=e style="left:54%;top:30%;width:42%;height:44%;background:#9a9a9a"></b><b class=e style="left:58%;top:30%;width:34%;height:14%;background:#cccccc"></b><b class=e style="left:10%;top:20%;width:22%;height:42%;background:#f4e050"></b><b style="left:8%;top:50%;width:60%;height:12%;background:#161616"></b><b style="left:46%;top:30%;width:30%;height:10%;background:#161616"></b><b style="left:28%;top:16%;width:14%;height:22%;background:#ededed"></b><b style="left:76%;top:78%;width:14%;height:12%;background:#777777"></b></b><b class="k" style="left:93px;top:126.3px;width:58.2px;height:43.2px;background:#fdf6c4"><b class=r style="left:8%;top:22%;width:82%;height:74%;background:#cccccc"></b><b class=e style="left:12%;top:24%;width:74%;height:48%;background:#f6eeb0"></b><b class=r style="left:32%;top:32%;width:28%;height:9%;background:#f2500c"></b><b style="left:4%;top:38%;width:6%;height:22%;background:#161616"></b><b style="left:90%;top:38%;width:6%;height:22%;background:#161616"></b><b style="left:10%;top:80%;width:80%;height:8%;background:#161616"></b></b><b class="k" style="left:93px;top:171.6px;width:58.2px;height:43.2px;background:#f6f6f2"><b style="left:3%;top:5%;width:24%;height:44%;background:#ededed"></b><b class=e style="left:46%;top:0%;width:54%;height:52%;background:#7c4424"></b><b class=e style="left:50%;top:26%;width:44%;height:58%;background:#fbe3d2"></b><b class=r style="left:30%;top:72%;width:56%;height:28%;background:#cccccc"></b><b class=e style="left:4%;top:55%;width:22%;height:36%;background:#ededed"></b><b style="left:8%;top:86%;width:8%;height:10%;background:#f2500c"></b></b><i class="g1"></i><i class="g2"></i><i class="g3"></i><i class="t1"></i><i class="t2"></i><i class="t3"></i><i class="t4"></i><i class="c1"></i><i class="c2"></i><i class="c3"></i><i class="c4"></i><i class="c5"></i><i class="c6"></i><i class="c7"></i></div><div class="pn" style="left:213.5px">16</div></div><div class="sp" style="left:1986px;top:552px"><div class="pg" style="left:18px"><b class="k" style="left:93px;top:35.8px;width:58.2px;height:43.2px;background:#fdf6c4"><b class=e style="left:12%;top:20%;width:18%;height:30%;background:#6a3a2a"></b><b class=r style="left:70%;top:10%;width:18%;height:56%;background:#ffffff"></b><b class=e style="left:72%;top:4%;width:14%;height:22%;background:#7c4424"></b><b style="left:72%;top:66%;width:12%;height:10%;background:#1d2c6a"></b><b class=t style="left:50%;top:66%;width:22%;height:34%;background:#f2500c"></b><b class=e style="left:86%;top:50%;width:12%;height:40%;background:#ededed"></b><b class=e style="left:5%;top:60%;width:12%;height:22%;background:#ffffff"></b><b style="left:46%;top:0%;width:1.5%;height:100%;background:#777777"></b></b><b class="k" style="left:93px;top:81.2px;width:58.2px;height:43.2px;background:#fdf6c4"><b style="left:0%;top:30%;width:30%;height:70%;background:#bfe4f0"></b><b class=e style="left:3%;top:10%;width:22%;height:40%;background:#ededed"></b><b class=r style="left:28%;top:0%;width:20%;height:100%;background:#7c4424"></b><b class=e style="left:55%;top:22%;width:30%;height:40%;background:#7c4424"></b><b class=e style="left:58%;top:36%;width:20%;height:30%;background:#fbe3d2"></b><b class=r style="left:55%;top:62%;width:42%;height:38%;background:#ffffff"></b><b class=e style="left:82%;top:5%;width:16%;height:42%;background:#ededed"></b><b style="left:4%;top:66%;width:8%;height:20%;background:#f2500c"></b><b style="left:8%;top:88%;width:20%;height:12%;background:#f4b0b0"></b></b><b class="k" style="left:93px;top:126.3px;width:58.2px;height:43.2px;background:#fdf6c4"><b style="left:0%;top:0%;width:26%;height:40%;background:#f4b0b0"></b><b style="left:30%;top:0%;width:42%;height:34%;background:#a8e064"></b><b class=e style="left:42%;top:6%;width:14%;height:18%;background:#161616"></b><b style="left:30%;top:34%;width:42%;height:8%;background:#f4b0b0"></b><b class=r style="left:70%;top:0%;width:30%;height:76%;background:#7c4424"></b><b style="left:70%;top:70%;width:30%;height:30%;background:#ffffff"></b><b class=t style="left:36%;top:36%;width:12%;height:20%;background:#f2500c"></b><b class=e style="left:48%;top:50%;width:6%;height:6%;background:#dc1f1f"></b><b class=e style="left:28%;top:72%;width:14%;height:24%;background:#ededed"></b></b><b class="k" style="left:93px;top:171.6px;width:58.2px;height:43.2px;background:#555555"><b style="left:8%;top:0%;width:34%;height:40%;background:#ededed"></b><b class=t style="left:4%;top:36%;width:38%;height:64%;background:#f2500c"></b><b class=e style="left:12%;top:50%;width:8%;height:12%;background:#ffffff"></b><b class=e style="left:24%;top:50%;width:8%;height:12%;background:#ffffff"></b><b class=e style="left:50%;top:5%;width:18%;height:26%;background:#7c4424"></b><b class=e style="left:54%;top:22%;width:14%;height:18%;background:#fbe3d2"></b><b style="left:50%;top:40%;width:18%;height:30%;background:#ffffff"></b><b style="left:72%;top:5%;width:24%;height:42%;background:#ededed"></b><b style="left:58%;top:56%;width:18%;height:40%;background:#ededed"></b></b><i class="g1"></i><i class="g2"></i><i class="g3"></i><i class="t1"></i><i class="t2"></i><i class="t3"></i><i class="t4"></i><i class="c1"></i><i class="c2"></i><i class="c3"></i><i class="c4"></i><i class="c5"></i><i class="c6"></i><i class="c7"></i></div><div class="pn" style="left:18px">15</div><div class="pg" style="left:213.5px"><b class="k" style="left:25.7px;top:35.8px;width:58.4px;height:43.2px;background:#fdf6c4"><b class=e style="left:4%;top:5%;width:48%;height:76%;background:#ffffff"></b><b class=t style="left:62%;top:12%;width:26%;height:88%;background:#f2500c"></b><b class=e style="left:68%;top:26%;width:6%;height:9%;background:#ffffff"></b><b class=e style="left:78%;top:26%;width:6%;height:9%;background:#ffffff"></b><b style="left:86%;top:70%;width:12%;height:14%;background:#f2500c"></b></b><b class="k" style="left:25.7px;top:81.2px;width:58.4px;height:43.2px;background:#fdf6c4"><b class=e style="left:4%;top:8%;width:50%;height:80%;background:#ffffff"></b><b class=t style="left:54%;top:10%;width:38%;height:90%;background:#f2500c"></b><b class=e style="left:62%;top:28%;width:8%;height:12%;background:#ffffff"></b><b class=e style="left:76%;top:28%;width:8%;height:12%;background:#ffffff"></b></b><b class="k" style="left:25.7px;top:126.3px;width:58.4px;height:43.2px;background:#fdf6c4"><b class=e style="left:4%;top:8%;width:46%;height:58%;background:#ffffff"></b><b class=e style="left:0%;top:50%;width:20%;height:46%;background:#ffffff"></b><b class=t style="left:52%;top:0%;width:48%;height:100%;background:#f2500c"></b><b class=e style="left:64%;top:30%;width:10%;height:18%;background:#ffffff"></b></b><b class="k" style="left:25.7px;top:171.6px;width:58.4px;height:43.2px;background:#fdf6c4"><b style="left:30%;top:0%;width:70%;height:62%;background:#bfe4f0"></b><b class=e style="left:0%;top:0%;width:28%;height:72%;background:#ededed"></b><b class=e style="left:58%;top:5%;width:22%;height:72%;background:#ffffff"></b><b style="left:86%;top:0%;width:14%;height:62%;background:#f6b992"></b><b class=e style="left:12%;top:70%;width:36%;height:30%;background:#7c4424"></b><b style="left:36%;top:36%;width:6%;height:12%;background:#161616"></b><b style="left:48%;top:44%;width:6%;height:10%;background:#a8602c"></b></b><b class="k" style="left:93px;top:35.8px;width:58.2px;height:43.2px;background:#fdf6c4"><b style="left:0%;top:0%;width:100%;height:30%;background:#bfe4f0"></b><b class=e style="left:50%;top:20%;width:40%;height:30%;background:#bfe4f0"></b><b class=e style="left:30%;top:5%;width:30%;height:42%;background:#ededed"></b><b class=r style="left:68%;top:26%;width:14%;height:40%;background:#35a035"></b><b class=e style="left:68%;top:8%;width:12%;height:18%;background:#7c4424"></b><b style="left:68%;top:64%;width:12%;height:30%;background:#161616"></b><b class=t style="left:2%;top:72%;width:16%;height:28%;background:#f2500c"></b><b style="left:10%;top:42%;width:50%;height:10%;background:#161616"></b><b style="left:84%;top:30%;width:14%;height:50%;background:#ededed"></b></b><b class="k" style="left:93px;top:81.2px;width:58.2px;height:43.2px;background:#fdf6c4"><b style="left:12%;top:24%;width:34%;height:24%;background:#e9b65a"></b><b style="left:14%;top:48%;width:4%;height:20%;background:#e9b65a"></b><b style="left:40%;top:48%;width:4%;height:20%;background:#e9b65a"></b><b class=e style="left:48%;top:4%;width:22%;height:44%;background:#ededed"></b><b class=e style="left:8%;top:52%;width:52%;height:44%;background:#ffffff"></b><b class=e style="left:74%;top:0%;width:26%;height:50%;background:#7c4424"></b><b class=e style="left:74%;top:34%;width:18%;height:40%;background:#fbe3d2"></b><b style="left:84%;top:60%;width:16%;height:40%;background:#40c090"></b><b style="left:80%;top:22%;width:8%;height:14%;background:#bfe4f0"></b></b><b class="k" style="left:93px;top:126.3px;width:58.2px;height:43.2px;background:#e8b060"><b style="left:0%;top:0%;width:38%;height:100%;background:#fdf6c4"></b><b style="left:0%;top:52%;width:36%;height:38%;background:#e9b65a"></b><b class=t style="left:38%;top:18%;width:18%;height:62%;background:#f2500c"></b><b class=e style="left:42%;top:28%;width:5%;height:8%;background:#ffffff"></b><b style="left:6%;top:18%;width:12%;height:26%;background:#a8602c"></b><b style="left:18%;top:14%;width:8%;height:22%;background:#f2500c"></b><b class=e style="left:22%;top:58%;width:14%;height:30%;background:#7c4424"></b><b class=e style="left:74%;top:30%;width:26%;height:24%;background:#8a6a5a"></b><b style="left:36%;top:0%;width:3%;height:100%;background:#e9b65a"></b><b style="left:30%;top:88%;width:30%;height:12%;background:#a8e064"></b></b><b class="k" style="left:93px;top:171.6px;width:58.2px;height:43.2px;background:#bfe6f2"><b style="left:50%;top:0%;width:50%;height:100%;background:#fdf6c4"></b><b class=e style="left:34%;top:0%;width:16%;height:30%;background:#7c4424"></b><b class=e style="left:36%;top:14%;width:12%;height:20%;background:#fbe3d2"></b><b style="left:30%;top:36%;width:20%;height:64%;background:#40c090"></b><b class=e style="left:54%;top:10%;width:18%;height:44%;background:#f2500c"></b><b style="left:56%;top:38%;width:22%;height:12%;background:#a8602c"></b><b style="left:86%;top:22%;width:12%;height:36%;background:#40c090"></b><b class=e style="left:86%;top:6%;width:10%;height:16%;background:#7c4424"></b><b style="left:86%;top:58%;width:10%;height:20%;background:#161616"></b><b style="left:8%;top:28%;width:14%;height:40%;background:#ededed"></b></b><i class="g1"></i><i class="g2"></i><i class="g3"></i><i class="t1"></i><i class="t2"></i><i class="t3"></i><i class="t4"></i><i class="c1"></i><i class="c2"></i><i class="c3"></i><i class="c4"></i><i class="c5"></i><i class="c6"></i><i class="c7"></i></div><div class="pn" style="left:213.5px">14</div></div><div class="sp" style="left:2418px;top:552px"><div class="pg" style="left:18px"><b class="k" style="left:94.3px;top:35.7px;width:56.7px;height:41.3px;background:#fdf6c4"><b style="left:22%;top:0%;width:58%;height:100%;background:#777777"></b><b class=e style="left:38%;top:5%;width:18%;height:24%;background:#7c4424"></b><b class=e style="left:40%;top:16%;width:12%;height:16%;background:#fbe3d2"></b><b class=r style="left:34%;top:30%;width:32%;height:30%;background:#ffffff"></b><b style="left:28%;top:30%;width:8%;height:40%;background:#161616"></b><b style="left:36%;top:60%;width:24%;height:40%;background:#3a96e0"></b><b class=e style="left:74%;top:5%;width:22%;height:42%;background:#ededed"></b><b class=e style="left:3%;top:45%;width:16%;height:40%;background:#ededed"></b><b style="left:4%;top:8%;width:14%;height:24%;background:#161616"></b></b><b class="k" style="left:94.3px;top:79.8px;width:56.7px;height:42px;background:#fdf6c4"><b style="left:0%;top:14%;width:66%;height:58%;background:#e9b65a"></b><b style="left:22%;top:72%;width:5%;height:24%;background:#e9b65a"></b><b class=r style="left:26%;top:16%;width:9%;height:28%;background:#f2500c"></b><b class=e style="left:22%;top:40%;width:6%;height:6%;background:#dc1f1f"></b><b class=r style="left:64%;top:0%;width:22%;height:50%;background:#ffffff"></b><b style="left:80%;top:0%;width:20%;height:86%;background:#161616"></b><b style="left:82%;top:86%;width:18%;height:14%;background:#3a96e0"></b><b class=e style="left:34%;top:64%;width:18%;height:30%;background:#ffffff"></b><b style="left:70%;top:48%;width:10%;height:26%;background:#fbe3d2"></b></b><b class="k" style="left:94.3px;top:123.6px;width:56.7px;height:41px;background:#fdf6c4"><b class=e style="left:24%;top:10%;width:44%;height:42%;background:#161616"></b><b class=t style="left:30%;top:26%;width:34%;height:74%;background:#f2500c"></b><b class=e style="left:40%;top:36%;width:8%;height:11%;background:#ffffff"></b><b class=e style="left:52%;top:36%;width:8%;height:11%;background:#ffffff"></b><b class=e style="left:72%;top:0%;width:26%;height:40%;background:#ededed"></b><b style="left:2%;top:55%;width:16%;height:40%;background:#ededed"></b></b><b class="k" style="left:94.3px;top:167px;width:56.7px;height:42.3px;background:#fdf6c4"><b class=e style="left:68%;top:5%;width:28%;height:52%;background:#ededed"></b><b style="left:3%;top:5%;width:14%;height:50%;background:#ededed"></b><b class=e style="left:40%;top:14%;width:42%;height:46%;background:#e9b65a"></b><b style="left:62%;top:16%;width:8%;height:22%;background:#a8602c"></b><b class=e style="left:10%;top:50%;width:26%;height:30%;background:#7c4424"></b><b style="left:16%;top:70%;width:22%;height:20%;background:#ffffff"></b><b style="left:14%;top:86%;width:36%;height:14%;background:#3a96e0"></b><b class=e style="left:50%;top:72%;width:16%;height:24%;background:#ededed"></b><b style="left:22%;top:5%;width:14%;height:40%;background:#777777"></b></b><i class="g1"></i><i class="g2"></i><i class="g3"></i><i class="t1"></i><i class="t2"></i><i class="t3"></i><i class="t4"></i><i class="c1"></i><i class="c2"></i><i class="c3"></i><i class="c4"></i><i class="c5"></i><i class="c6"></i><i class="c7"></i></div><div class="pn" style="left:18px">13</div><div class="pg" style="left:213.5px"><span class="tt" style="left:43px;top:27.3px;font-size:5.6px;letter-spacing:0.6px">正社員②</span><span class="tt" style="left:110px;top:27.8px;font-size:5.4px;letter-spacing:0.5px;color:#444">正社員①</span><b class="k" style="left:25.7px;top:35.8px;width:58.4px;height:43.2px;background:#fdf6c4"><b style="left:64%;top:0%;width:36%;height:100%;background:#f2500c"></b><b class=e style="left:5%;top:3%;width:20%;height:22%;background:#7c4424"></b><b class=e style="left:8%;top:14%;width:12%;height:16%;background:#fbe3d2"></b><b style="left:5%;top:28%;width:20%;height:28%;background:#ffffff"></b><b style="left:5%;top:55%;width:24%;height:45%;background:#3a96e0"></b><b class=e style="left:34%;top:24%;width:26%;height:62%;background:#ededed"></b><b class=e style="left:28%;top:5%;width:10%;height:20%;background:#ededed"></b></b><b class="k" style="left:25.7px;top:81.2px;width:58.4px;height:43.2px;background:#fdf6c4"><b style="left:0%;top:0%;width:100%;height:100%;background:#f6eeb0"></b><b class=e style="left:30%;top:0%;width:70%;height:52%;background:#7c4424"></b><b class=e style="left:40%;top:30%;width:46%;height:62%;background:#fbe3d2"></b><b style="left:2%;top:5%;width:26%;height:14%;background:#161616"></b><b style="left:6%;top:48%;width:8%;height:40%;background:#161616"></b><b style="left:34%;top:62%;width:14%;height:30%;background:#ffffff"></b><b style="left:60%;top:70%;width:40%;height:30%;background:#cccccc"></b></b><b class="k" style="left:25.7px;top:126.3px;width:58.4px;height:43.2px;background:#fdf6c4"><b class=e style="left:30%;top:10%;width:42%;height:36%;background:#9a8a7a"></b><b class=t style="left:28%;top:25%;width:42%;height:75%;background:#f2500c"></b><b class=e style="left:38%;top:40%;width:8%;height:11%;background:#ffffff"></b><b class=e style="left:54%;top:40%;width:8%;height:11%;background:#ffffff"></b><b class=e style="left:70%;top:5%;width:18%;height:26%;background:#ededed"></b><b class=e style="left:3%;top:34%;width:20%;height:46%;background:#ededed"></b></b><b class="k" style="left:25.7px;top:171.6px;width:58.4px;height:43.2px;background:#fdf6c4"><b class=r style="left:68%;top:0%;width:32%;height:100%;background:#ffffff"></b><b class=e style="left:40%;top:20%;width:30%;height:50%;background:#e9b65a"></b><b style="left:52%;top:32%;width:8%;height:24%;background:#a8602c"></b><b style="left:30%;top:3%;width:22%;height:40%;background:#ededed"></b><b class=e style="left:3%;top:44%;width:28%;height:26%;background:#7c4424"></b><b style="left:8%;top:64%;width:30%;height:30%;background:#ffffff"></b><b style="left:2%;top:5%;width:16%;height:36%;background:#ededed"></b><b style="left:28%;top:72%;width:34%;height:12%;background:#161616"></b></b><b class="k" style="left:93px;top:35.8px;width:58.2px;height:43.2px;background:#fdf6c4"><b style="left:18%;top:5%;width:58%;height:56%;background:#161616"></b><b style="left:22%;top:9%;width:50%;height:48%;background:#bfe4f0"></b><b class=e style="left:40%;top:10%;width:18%;height:28%;background:#7c4424"></b><b style="left:36%;top:36%;width:26%;height:20%;background:#3a96e0"></b><b style="left:22%;top:70%;width:64%;height:26%;background:#ffffff"></b><b style="left:40%;top:60%;width:14%;height:6%;background:#161616"></b><b class=r style="left:78%;top:12%;width:19%;height:48%;background:#ffffff"></b><b class=r style="left:3%;top:44%;width:18%;height:42%;background:#ffffff"></b></b><b class="k" style="left:93px;top:81.2px;width:58.2px;height:43.2px;background:#fdf6c4"><b class=e style="left:30%;top:8%;width:26%;height:34%;background:#7c4424"></b><b class=e style="left:34%;top:22%;width:16%;height:24%;background:#fbe3d2"></b><b class=r style="left:24%;top:44%;width:38%;height:38%;background:#f0928a"></b><b style="left:0%;top:70%;width:100%;height:30%;background:#e9b65a"></b><b class=e style="left:54%;top:64%;width:32%;height:20%;background:#a8e064"></b><b class=e style="left:62%;top:60%;width:16%;height:12%;background:#dc1f1f"></b><b class=e style="left:70%;top:10%;width:22%;height:50%;background:#ededed"></b><b class=e style="left:34%;top:78%;width:14%;height:18%;background:#f0c8ea"></b><b style="left:86%;top:66%;width:12%;height:28%;background:#ffffff"></b></b><b class="k" style="left:93px;top:126.3px;width:58.2px;height:43.2px;background:#fdf6c4"><b style="left:30%;top:0%;width:48%;height:52%;background:#f4b0b0"></b><b style="left:48%;top:0%;width:12%;height:40%;background:#fbe3d2"></b><b style="left:5%;top:44%;width:68%;height:56%;background:#e9b65a"></b><b class=e style="left:36%;top:54%;width:44%;height:36%;background:#f2500c"></b><b class=e style="left:24%;top:78%;width:38%;height:22%;background:#a8e064"></b><b style="left:84%;top:5%;width:16%;height:88%;background:#ededed"></b><b style="left:3%;top:5%;width:22%;height:36%;background:#ededed"></b><b style="left:0%;top:56%;width:22%;height:14%;background:#f0c8ea"></b></b><b class="k" style="left:93px;top:171.6px;width:58.2px;height:43.2px;background:#161616"><b class=e style="left:28%;top:14%;width:62%;height:86%;background:#f2500c"></b><b class=e style="left:40%;top:28%;width:6%;height:10%;background:#ffffff"></b><b class=e style="left:52%;top:24%;width:6%;height:10%;background:#ffffff"></b><b class=e style="left:10%;top:44%;width:42%;height:56%;background:#a8e064"></b><b class=e style="left:0%;top:30%;width:16%;height:40%;background:#ffffff"></b><b style="left:64%;top:0%;width:32%;height:52%;background:#ededed"></b></b><i class="g1"></i><i class="g2"></i><i class="g3"></i><i class="t1"></i><i class="t2"></i><i class="t3"></i><i class="t4"></i><i class="c1"></i><i class="c2"></i><i class="c3"></i><i class="c4"></i><i class="c5"></i><i class="c6"></i><i class="c7"></i></div><div class="pn" style="left:213.5px">12</div></div><div class="sp" style="left:258px;top:902px"><div class="pg" style="left:18px"><b class="k" style="left:93px;top:35.8px;width:58.2px;height:43.2px;background:#9a9a9a"><b class=e style="left:0%;top:5%;width:36%;height:56%;background:#ffffff"></b><b class=e style="left:64%;top:5%;width:36%;height:56%;background:#ffffff"></b><b class=e style="left:35%;top:12%;width:28%;height:30%;background:#7c4424"></b><b class=e style="left:40%;top:24%;width:18%;height:22%;background:#fbe3d2"></b><b class=r style="left:32%;top:42%;width:34%;height:30%;background:#f0c8ea"></b><b style="left:40%;top:56%;width:22%;height:44%;background:#3a96e0"></b></b><b class="k" style="left:93px;top:81.2px;width:58.2px;height:43.2px;background:#777777"><b class=e style="left:0%;top:5%;width:30%;height:86%;background:#ffffff"></b><b class=e style="left:72%;top:0%;width:28%;height:90%;background:#ffffff"></b><b class=e style="left:30%;top:5%;width:42%;height:42%;background:#7c4424"></b><b class=e style="left:36%;top:28%;width:30%;height:34%;background:#fbe3d2"></b><b class=r style="left:30%;top:60%;width:42%;height:40%;background:#f0c8ea"></b><b style="left:40%;top:66%;width:22%;height:34%;background:#3a96e0"></b></b><b class="k" style="left:93px;top:126.3px;width:58.2px;height:43.2px;background:#fbe3d2"><b class=r style="left:0%;top:0%;width:66%;height:34%;background:#7c4424"></b><b class=e style="left:56%;top:20%;width:16%;height:50%;background:#7c4424"></b><b class=e style="left:14%;top:60%;width:32%;height:26%;background:#f08ac8"></b><b style="left:66%;top:0%;width:34%;height:100%;background:#ededed"></b><b style="left:0%;top:82%;width:16%;height:18%;background:#3a96e0"></b><b style="left:10%;top:86%;width:48%;height:14%;background:#f0c8ea"></b></b><b class="k" style="left:93px;top:171.6px;width:58.2px;height:43.2px;background:#f6f6f2"><b style="left:60%;top:0%;width:40%;height:40%;background:#555555"></b><b style="left:0%;top:60%;width:60%;height:40%;background:#fdf6c4"></b><b class=e style="left:10%;top:5%;width:46%;height:66%;background:#ffffff"></b><b class=e style="left:62%;top:5%;width:28%;height:46%;background:#7c4424"></b><b class=e style="left:78%;top:24%;width:12%;height:20%;background:#fbe3d2"></b><b class=r style="left:54%;top:46%;width:46%;height:54%;background:#24348a"></b><b style="left:3%;top:10%;width:10%;height:70%;background:#ededed"></b></b><i class="g1"></i><i class="g2"></i><i class="g3"></i><i class="t1"></i><i class="t2"></i><i class="t3"></i><i class="t4"></i><i class="c1"></i><i class="c2"></i><i class="c3"></i><i class="c4"></i><i class="c5"></i><i class="c6"></i><i class="c7"></i></div><div class="pn" style="left:18px">35</div><div class="pg" style="left:213.5px"><b class="k" style="left:25.7px;top:35.8px;width:58.4px;height:43.2px;background:#fdf6c4"><b style="left:0%;top:18%;width:62%;height:82%;background:#e0a840"></b><b style="left:0%;top:18%;width:30%;height:30%;background:#fdf6c4"></b><b class=e style="left:40%;top:5%;width:24%;height:46%;background:#ededed"></b><b class=e style="left:62%;top:34%;width:28%;height:36%;background:#7c4424"></b><b class=e style="left:66%;top:48%;width:14%;height:18%;background:#fbe3d2"></b><b class=r style="left:54%;top:66%;width:46%;height:34%;background:#24348a"></b><b class=e style="left:12%;top:55%;width:20%;height:36%;background:#ededed"></b><b style="left:8%;top:6%;width:8%;height:8%;background:#161616"></b><b style="left:22%;top:40%;width:8%;height:10%;background:#161616"></b></b><b class="k" style="left:25.7px;top:81.2px;width:58.4px;height:43.2px;background:#fdf6c4"><b class=e style="left:10%;top:14%;width:42%;height:54%;background:#7c4424"></b><b class=e style="left:20%;top:36%;width:26%;height:34%;background:#fbe3d2"></b><b class=r style="left:4%;top:70%;width:68%;height:30%;background:#24348a"></b><b class=e style="left:54%;top:5%;width:44%;height:72%;background:#ffffff"></b><b style="left:2%;top:5%;width:14%;height:14%;background:#ededed"></b></b><b class="k" style="left:25.7px;top:126.3px;width:58.4px;height:43.2px;background:#888"><b class=e style="left:12%;top:10%;width:40%;height:52%;background:#7c4424"></b><b class=e style="left:22%;top:34%;width:24%;height:34%;background:#fbe3d2"></b><b class=r style="left:4%;top:68%;width:62%;height:32%;background:#24348a"></b><b class=e style="left:58%;top:5%;width:40%;height:82%;background:#ffffff"></b></b><b class="k" style="left:25.7px;top:171.6px;width:58.4px;height:43.2px;background:#888"><b class=r style="left:0%;top:0%;width:38%;height:100%;background:#ffffff"></b><b class=e style="left:58%;top:5%;width:34%;height:42%;background:#7c4424"></b><b class=e style="left:62%;top:24%;width:24%;height:32%;background:#fbe3d2"></b><b class=r style="left:60%;top:52%;width:40%;height:48%;background:#24348a"></b><b class=e style="left:76%;top:56%;width:20%;height:36%;background:#ffffff"></b><b style="left:40%;top:28%;width:10%;height:30%;background:#24348a"></b><b class=e style="left:42%;top:20%;width:8%;height:10%;background:#7c4424"></b><b class=e style="left:50%;top:74%;width:22%;height:26%;background:#7c4424"></b></b><b class="k" style="left:93px;top:35.8px;width:58.2px;height:43.2px;background:#fdf6c4"><b class=e style="left:40%;top:20%;width:16%;height:30%;background:#7c4424"></b><b class=e style="left:46%;top:30%;width:10%;height:16%;background:#fbe3d2"></b><b class=r style="left:30%;top:54%;width:36%;height:36%;background:#24348a"></b><b class=e style="left:10%;top:5%;width:26%;height:66%;background:#ededed"></b><b class=e style="left:62%;top:24%;width:24%;height:42%;background:#ededed"></b><b style="left:0%;top:88%;width:100%;height:12%;background:#e0a840"></b><b style="left:5%;top:74%;width:20%;height:14%;background:#161616"></b><b style="left:84%;top:5%;width:14%;height:36%;background:#ededed"></b></b><b class="k" style="left:93px;top:81.2px;width:58.2px;height:43.2px;background:#fdf6c4"><b class=e style="left:3%;top:5%;width:38%;height:66%;background:#ffffff"></b><b class=e style="left:48%;top:12%;width:26%;height:40%;background:#7c4424"></b><b class=e style="left:52%;top:28%;width:16%;height:24%;background:#fbe3d2"></b><b class=r style="left:5%;top:50%;width:86%;height:24%;background:#24348a"></b><b class=r style="left:50%;top:60%;width:42%;height:40%;background:#24348a"></b><b style="left:8%;top:76%;width:28%;height:14%;background:#161616"></b><b style="left:0%;top:90%;width:50%;height:10%;background:#e0a840"></b><b class=e style="left:80%;top:5%;width:16%;height:36%;background:#ededed"></b></b><b class="k" style="left:93px;top:126.3px;width:58.2px;height:43.2px;background:#fdf6c4"><b class=e style="left:5%;top:44%;width:82%;height:36%;background:#ffffff"></b><b class=e style="left:20%;top:10%;width:36%;height:48%;background:#f06030"></b><b class=e style="left:44%;top:30%;width:46%;height:30%;background:#f4b0a0"></b><b class=e style="left:8%;top:12%;width:22%;height:18%;background:#ffffff"></b><b style="left:5%;top:70%;width:36%;height:20%;background:#161616"></b><b style="left:0%;top:82%;width:100%;height:18%;background:#e0a840"></b><b style="left:64%;top:70%;width:36%;height:30%;background:#fbe3d2"></b></b><b class="k" style="left:93px;top:171.6px;width:58.2px;height:43.2px;background:#ededed"><b style="left:0%;top:0%;width:100%;height:56%;background:#161616"></b><b class=e style="left:8%;top:6%;width:14%;height:12%;background:#ffffff"></b><b class=e style="left:30%;top:24%;width:12%;height:10%;background:#ffffff"></b><b class=e style="left:78%;top:8%;width:16%;height:14%;background:#ffffff"></b><b class=e style="left:62%;top:34%;width:12%;height:10%;background:#ffffff"></b><b class=e style="left:34%;top:0%;width:24%;height:30%;background:#7c4424"></b><b class=r style="left:44%;top:20%;width:38%;height:40%;background:#24348a"></b><b class=r style="left:74%;top:24%;width:14%;height:46%;background:#f2500c"></b><b class=e style="left:24%;top:40%;width:36%;height:26%;background:#ffffff"></b><b style="left:0%;top:60%;width:100%;height:40%;background:#e0a840"></b><b style="left:8%;top:72%;width:52%;height:22%;background:#161616"></b></b><i class="g1"></i><i class="g2"></i><i class="g3"></i><i class="t1"></i><i class="t2"></i><i class="t3"></i><i class="t4"></i><i class="c1"></i><i class="c2"></i><i class="c3"></i><i class="c4"></i><i class="c5"></i><i class="c6"></i><i class="c7"></i></div><div class="pn" style="left:213.5px">34</div></div><div class="sp" style="left:690px;top:902px"><div class="pg" style="left:18px"><b class="k" style="left:93px;top:35.8px;width:58.2px;height:43.2px;background:#fdf6c4"><b style="left:0%;top:80%;width:100%;height:20%;background:#e9b65a"></b><b class=e style="left:38%;top:12%;width:24%;height:38%;background:#7c4424"></b><b class=e style="left:42%;top:26%;width:14%;height:20%;background:#fbe3d2"></b><b class=r style="left:40%;top:54%;width:30%;height:30%;background:#24348a"></b><b class=e style="left:3%;top:40%;width:28%;height:50%;background:#ededed"></b><b style="left:74%;top:5%;width:24%;height:52%;background:#ededed"></b><b style="left:44%;top:78%;width:20%;height:6%;background:#161616"></b><b style="left:78%;top:66%;width:8%;height:14%;background:#dc1f1f"></b></b><b class="k" style="left:93px;top:81.2px;width:58.2px;height:43.2px;background:#fdf6c4"><b class=e style="left:20%;top:14%;width:30%;height:46%;background:#7c4424"></b><b class=e style="left:34%;top:30%;width:16%;height:26%;background:#fbe3d2"></b><b class=r style="left:12%;top:60%;width:54%;height:40%;background:#24348a"></b><b class=e style="left:56%;top:26%;width:14%;height:28%;background:#7c4424"></b><b class=e style="left:60%;top:5%;width:14%;height:26%;background:#ffffff"></b><b style="left:76%;top:3%;width:22%;height:48%;background:#ededed"></b><b class=e style="left:64%;top:56%;width:10%;height:20%;background:#dc1f1f"></b><b style="left:66%;top:70%;width:30%;height:16%;background:#ffffff"></b></b><b class="k" style="left:93px;top:126.3px;width:58.2px;height:43.2px;background:#fdf6c4"><b style="left:0%;top:44%;width:100%;height:56%;background:#e8b050"></b><b class=e style="left:2%;top:14%;width:24%;height:30%;background:#dc1f1f"></b><b class=e style="left:70%;top:14%;width:24%;height:30%;background:#dc1f1f"></b><b class=e style="left:8%;top:22%;width:12%;height:12%;background:#ffffff"></b><b class=e style="left:76%;top:22%;width:12%;height:12%;background:#ffffff"></b><b class=e style="left:24%;top:64%;width:26%;height:36%;background:#7c4424"></b><b class=e style="left:72%;top:58%;width:28%;height:42%;background:#7c4424"></b><b style="left:10%;top:78%;width:10%;height:14%;background:#2a6a48"></b><b style="left:60%;top:78%;width:10%;height:14%;background:#2a6a48"></b><b style="left:48%;top:0%;width:2%;height:100%;background:#e9b65a"></b></b><b class="k" style="left:93px;top:171.6px;width:58.2px;height:43.2px;background:#ffffff"><b style="left:2%;top:5%;width:36%;height:90%;background:#ededed"></b><b style="left:6%;top:10%;width:8%;height:78%;background:#161616"></b><b style="left:18%;top:10%;width:8%;height:70%;background:#161616"></b><b class=e style="left:40%;top:0%;width:60%;height:52%;background:#7c4424"></b><b class=e style="left:50%;top:26%;width:40%;height:56%;background:#fbe3d2"></b><b class=e style="left:24%;top:70%;width:58%;height:30%;background:#9a9a9a"></b><b style="left:80%;top:84%;width:20%;height:16%;background:#24348a"></b></b><i class="g1"></i><i class="g2"></i><i class="g3"></i><i class="t1"></i><i class="t2"></i><i class="t3"></i><i class="t4"></i><i class="c1"></i><i class="c2"></i><i class="c3"></i><i class="c4"></i><i class="c5"></i><i class="c6"></i><i class="c7"></i></div><div class="pn" style="left:18px">33</div><div class="pg" style="left:213.5px"><b class="k" style="left:25.7px;top:35.8px;width:58.4px;height:43.2px;background:#fdf6c4"><b style="left:0%;top:64%;width:100%;height:36%;background:#e9b65a"></b><b class=e style="left:18%;top:5%;width:22%;height:50%;background:#ededed"></b><b class=e style="left:72%;top:5%;width:20%;height:40%;background:#ededed"></b><b class=e style="left:48%;top:10%;width:20%;height:26%;background:#7c4424"></b><b class=e style="left:52%;top:22%;width:12%;height:16%;background:#fbe3d2"></b><b class=r style="left:44%;top:38%;width:32%;height:38%;background:#cccccc"></b><b class=r style="left:22%;top:50%;width:10%;height:30%;background:#f0a020"></b><b class=e style="left:4%;top:42%;width:12%;height:30%;background:#ededed"></b><b style="left:26%;top:46%;width:6%;height:8%;background:#1d2c6a"></b></b><b class="k" style="left:25.7px;top:81.2px;width:58.4px;height:43.2px;background:#fdf6c4"><b style="left:0%;top:60%;width:66%;height:40%;background:#e9b65a"></b><b class=e style="left:0%;top:0%;width:30%;height:46%;background:#ededed"></b><b class=e style="left:40%;top:5%;width:26%;height:36%;background:#ededed"></b><b class=e style="left:72%;top:0%;width:28%;height:56%;background:#7c4424"></b><b class=e style="left:74%;top:36%;width:20%;height:34%;background:#fbe3d2"></b><b class=r style="left:54%;top:76%;width:46%;height:24%;background:#cccccc"></b><b class=r style="left:48%;top:44%;width:14%;height:38%;background:#161616"></b><b style="left:50%;top:50%;width:10%;height:24%;background:#e8b050"></b><b style="left:32%;top:48%;width:8%;height:20%;background:#f2500c"></b><b class=e style="left:8%;top:66%;width:12%;height:28%;background:#ededed"></b></b><b class="k" style="left:25.7px;top:126.3px;width:58.4px;height:43.2px;background:#f6f6f2"><b class=e style="left:30%;top:5%;width:36%;height:36%;background:#7c4424"></b><b class=e style="left:40%;top:22%;width:20%;height:24%;background:#fbe3d2"></b><b class=r style="left:24%;top:36%;width:56%;height:50%;background:#cccccc"></b><b style="left:0%;top:86%;width:100%;height:14%;background:#e9b65a"></b><b style="left:4%;top:10%;width:24%;height:16%;background:#161616"></b><b style="left:68%;top:8%;width:28%;height:22%;background:#161616"></b><b class=e style="left:4%;top:66%;width:14%;height:26%;background:#ededed"></b><b style="left:84%;top:60%;width:14%;height:36%;background:#ededed"></b><b class=t style="left:48%;top:78%;width:8%;height:22%;background:#f2500c"></b><b style="left:42%;top:62%;width:16%;height:14%;background:#555555"></b></b><b class="k" style="left:25.7px;top:171.6px;width:58.4px;height:43.2px;background:#e8b050"><b style="left:0%;top:0%;width:30%;height:36%;background:#fdf6c4"></b><b class=t style="left:14%;top:20%;width:22%;height:52%;background:#f2500c"></b><b class=e style="left:18%;top:32%;width:5%;height:7%;background:#ffffff"></b><b class=r style="left:38%;top:0%;width:62%;height:100%;background:#c8c4d4"></b><b class=t style="left:50%;top:36%;width:30%;height:64%;background:#f2500c"></b><b class=e style="left:56%;top:50%;width:6%;height:8%;background:#ffffff"></b><b class=e style="left:68%;top:50%;width:6%;height:8%;background:#ffffff"></b><b class=e style="left:66%;top:5%;width:26%;height:36%;background:#ffffff"></b><b style="left:4%;top:62%;width:12%;height:32%;background:#ededed"></b><b class=e style="left:28%;top:70%;width:8%;height:10%;background:#dc1f1f"></b></b><b class="k" style="left:93px;top:35.8px;width:58.2px;height:43.2px;background:#fdf6c4"><b style="left:0%;top:36%;width:100%;height:64%;background:#e8b050"></b><b class=e style="left:0%;top:52%;width:26%;height:48%;background:#f2500c"></b><b class=e style="left:62%;top:3%;width:32%;height:40%;background:#ededed"></b><b style="left:3%;top:3%;width:26%;height:30%;background:#ededed"></b><b class=e style="left:32%;top:38%;width:34%;height:46%;background:#ffffff"></b><b class=e style="left:38%;top:40%;width:18%;height:36%;background:#dc1f1f"></b><b class=e style="left:40%;top:14%;width:16%;height:22%;background:#ffffff"></b><b style="left:62%;top:56%;width:14%;height:20%;background:#ffffff"></b></b><b class="k" style="left:93px;top:81.2px;width:58.2px;height:43.2px;background:#fdf6c4"><b class=e style="left:40%;top:5%;width:22%;height:32%;background:#7c4424"></b><b class=e style="left:46%;top:18%;width:12%;height:18%;background:#fbe3d2"></b><b class=r style="left:32%;top:30%;width:42%;height:42%;background:#161616"></b><b style="left:14%;top:72%;width:86%;height:28%;background:#e9b65a"></b><b class=e style="left:76%;top:5%;width:22%;height:78%;background:#ededed"></b><b style="left:3%;top:50%;width:26%;height:40%;background:#ededed"></b><b class=e style="left:50%;top:66%;width:14%;height:14%;background:#dc1f1f"></b><b style="left:42%;top:64%;width:8%;height:12%;background:#f2500c"></b><b class=e style="left:4%;top:8%;width:12%;height:26%;background:#ededed"></b></b><b class="k" style="left:93px;top:126.3px;width:58.2px;height:43.2px;background:#fdf6c4"><b class=e style="left:34%;top:0%;width:44%;height:46%;background:#7c4424"></b><b class=e style="left:44%;top:24%;width:28%;height:36%;background:#fbe3d2"></b><b class=r style="left:0%;top:56%;width:100%;height:44%;background:#161616"></b><b class=t style="left:22%;top:56%;width:24%;height:44%;background:#f2500c"></b><b class=e style="left:3%;top:5%;width:26%;height:40%;background:#ededed"></b><b class=e style="left:78%;top:5%;width:20%;height:52%;background:#ededed"></b><b class=e style="left:30%;top:66%;width:5%;height:8%;background:#ffffff"></b></b><b class="k" style="left:93px;top:171.6px;width:58.2px;height:43.2px;background:#f6f6f2"><b style="left:30%;top:0%;width:70%;height:100%;background:#fdf6c4"></b><b class=t style="left:40%;top:15%;width:44%;height:85%;background:#f2500c"></b><b class=e style="left:50%;top:36%;width:8%;height:11%;background:#ffffff"></b><b class=e style="left:66%;top:36%;width:8%;height:11%;background:#ffffff"></b><b style="left:10%;top:16%;width:20%;height:60%;background:#161616"></b><b style="left:14%;top:24%;width:10%;height:40%;background:#ffffff"></b><b style="left:80%;top:0%;width:20%;height:46%;background:#ededed"></b><b style="left:86%;top:60%;width:12%;height:26%;background:#ededed"></b></b><i class="g1"></i><i class="g2"></i><i class="g3"></i><i class="t1"></i><i class="t2"></i><i class="t3"></i><i class="t4"></i><i class="c1"></i><i class="c2"></i><i class="c3"></i><i class="c4"></i><i class="c5"></i><i class="c6"></i><i class="c7"></i></div><div class="pn" style="left:213.5px">32</div></div><div class="sp" style="left:1122px;top:902px"><div class="pg" style="left:18px"><b class="k" style="left:93px;top:35.8px;width:58.2px;height:43.2px;background:#fdf6c4"><b class=r style="left:5%;top:5%;width:46%;height:90%;background:#ededed"></b><b class=e style="left:3%;top:55%;width:20%;height:40%;background:#ededed"></b><b class=r style="left:58%;top:5%;width:16%;height:46%;background:#7c4424"></b><b class=e style="left:62%;top:16%;width:10%;height:16%;background:#fbe3d2"></b><b class=r style="left:54%;top:44%;width:28%;height:56%;background:#2a6a48"></b><b style="left:80%;top:5%;width:18%;height:56%;background:#ededed"></b><b style="left:60%;top:58%;width:14%;height:6%;background:#161616"></b></b><b class="k" style="left:93px;top:81.2px;width:58.2px;height:43.2px;background:#f6f6f2"><b class=e style="left:20%;top:15%;width:46%;height:56%;background:#f0c8ea"></b><b class=e style="left:28%;top:5%;width:30%;height:24%;background:#d8c8e0"></b><b style="left:2%;top:5%;width:20%;height:50%;background:#ededed"></b><b style="left:72%;top:5%;width:26%;height:60%;background:#ededed"></b><b style="left:0%;top:68%;width:62%;height:32%;background:#161616"></b><b style="left:4%;top:72%;width:52%;height:22%;background:#ffffff"></b><b class=e style="left:60%;top:66%;width:40%;height:34%;background:#5a3010"></b></b><b class="k" style="left:93px;top:126.3px;width:58.2px;height:43.2px;background:#fdf6c4"><b class=e style="left:2%;top:2%;width:28%;height:40%;background:#ffffff"></b><b style="left:6%;top:8%;width:14%;height:20%;background:#161616"></b><b class=e style="left:0%;top:55%;width:36%;height:45%;background:#7a4010"></b><b class=r style="left:40%;top:30%;width:14%;height:36%;background:#f4e050"></b><b class=e style="left:42%;top:20%;width:10%;height:14%;background:#7c4424"></b><b style="left:42%;top:64%;width:10%;height:28%;background:#a8602c"></b><b style="left:60%;top:5%;width:38%;height:82%;background:#ededed"></b><b class=e style="left:24%;top:30%;width:14%;height:20%;background:#fdf6c4"></b></b><b class="k" style="left:93px;top:171.6px;width:58.2px;height:43.2px;background:#fdf6c4"><b class=r style="left:12%;top:22%;width:12%;height:40%;background:#2a6a48"></b><b class=e style="left:12%;top:8%;width:12%;height:18%;background:#7c4424"></b><b class=e style="left:30%;top:18%;width:36%;height:44%;background:#ffffff"></b><b class=e style="left:28%;top:70%;width:38%;height:30%;background:#9a5a2a"></b><b class=r style="left:60%;top:0%;width:38%;height:100%;background:#ededed"></b><b style="left:4%;top:46%;width:10%;height:50%;background:#161616"></b></b><i class="g1"></i><i class="g2"></i><i class="g3"></i><i class="t1"></i><i class="t2"></i><i class="t3"></i><i class="t4"></i><i class="c1"></i><i class="c2"></i><i class="c3"></i><i class="c4"></i><i class="c5"></i><i class="c6"></i><i class="c7"></i></div><div class="pn" style="left:18px">31</div><div class="pg" style="left:213.5px"><b class="k" style="left:25.7px;top:35.8px;width:58.4px;height:43.2px;background:#fdf6c4"><b class=r style="left:18%;top:20%;width:18%;height:42%;background:#7c4424"></b><b class=e style="left:24%;top:28%;width:8%;height:14%;background:#fbe3d2"></b><b class=r style="left:18%;top:54%;width:22%;height:46%;background:#2a6a48"></b><b class=e style="left:40%;top:5%;width:22%;height:86%;background:#ededed"></b><b style="left:2%;top:5%;width:12%;height:40%;background:#ededed"></b><b style="left:70%;top:3%;width:26%;height:38%;background:#ededed"></b><b style="left:62%;top:24%;width:18%;height:8%;background:#161616"></b><b class=e style="left:68%;top:30%;width:16%;height:28%;background:#9a9a9a"></b><b class=r style="left:64%;top:55%;width:36%;height:45%;background:#a890c0"></b><b style="left:50%;top:56%;width:12%;height:14%;background:#fbe3d2"></b></b><b class="k" style="left:25.7px;top:81.2px;width:58.4px;height:43.2px;background:#ffffff"><b style="left:2%;top:5%;width:32%;height:90%;background:#ededed"></b><b style="left:38%;top:0%;width:62%;height:100%;background:#161616"></b><b class=r style="left:44%;top:20%;width:56%;height:50%;background:#dc1f1f"></b><b class=r style="left:50%;top:26%;width:40%;height:38%;background:#161616"></b><b style="left:62%;top:66%;width:38%;height:34%;background:#fbe3d2"></b><b style="left:42%;top:80%;width:10%;height:16%;background:#3a96e0"></b></b><b class="k" style="left:25.7px;top:126.3px;width:58.4px;height:43.2px;background:#fdf6c4"><b style="left:3%;top:45%;width:28%;height:46%;background:#ededed"></b><b class=e style="left:2%;top:5%;width:16%;height:30%;background:#ededed"></b><b class=e style="left:22%;top:5%;width:18%;height:26%;background:#7c4424"></b><b class=r style="left:20%;top:30%;width:22%;height:60%;background:#2a6a48"></b><b class=e style="left:38%;top:40%;width:18%;height:30%;background:#9a9a9a"></b><b class=r style="left:34%;top:62%;width:28%;height:38%;background:#a890c0"></b><b class=r style="left:54%;top:20%;width:22%;height:14%;background:#161616"></b><b style="left:54%;top:34%;width:18%;height:10%;background:#dc1f1f"></b><b class=r style="left:64%;top:55%;width:32%;height:45%;background:#444444"></b><b class=e style="left:80%;top:5%;width:18%;height:42%;background:#ededed"></b><b style="left:40%;top:6%;width:24%;height:22%;background:#161616"></b></b><b class="k" style="left:25.7px;top:171.6px;width:58.4px;height:43.2px;background:#fdf6c4"><b class=r style="left:22%;top:14%;width:24%;height:68%;background:#7c4424"></b><b class=e style="left:34%;top:22%;width:10%;height:16%;background:#fbe3d2"></b><b class=r style="left:10%;top:66%;width:42%;height:34%;background:#2a6a48"></b><b class=e style="left:2%;top:5%;width:20%;height:66%;background:#ededed"></b><b class=e style="left:45%;top:14%;width:16%;height:48%;background:#ededed"></b><b style="left:62%;top:38%;width:34%;height:58%;background:#ededed"></b><b class=e style="left:58%;top:3%;width:16%;height:20%;background:#ededed"></b><b style="left:52%;top:82%;width:4%;height:8%;background:#dc1f1f"></b></b><b class="k" style="left:93px;top:35.8px;width:58.2px;height:43.2px;background:#fdf6c4"><b class=r style="left:4%;top:44%;width:28%;height:56%;background:#7c4424"></b><b class=e style="left:24%;top:58%;width:10%;height:18%;background:#fbe3d2"></b><b class=e style="left:54%;top:12%;width:20%;height:34%;background:#9a9a9a"></b><b class=e style="left:58%;top:26%;width:12%;height:18%;background:#fbe3d2"></b><b class=r style="left:52%;top:44%;width:28%;height:56%;background:#a890c0"></b><b class=e style="left:72%;top:44%;width:26%;height:56%;background:#ffffff"></b><b style="left:8%;top:8%;width:40%;height:10%;background:#161616"></b><b style="left:20%;top:22%;width:30%;height:10%;background:#161616"></b><b style="left:2%;top:5%;width:20%;height:16%;background:#ededed"></b><b style="left:0%;top:86%;width:30%;height:14%;background:#2a6a48"></b><b style="left:74%;top:76%;width:6%;height:10%;background:#dc1f1f"></b></b><b class="k" style="left:93px;top:81.2px;width:58.2px;height:43.2px;background:#fdf6c4"><b style="left:62%;top:0%;width:26%;height:62%;background:#444444"></b><b class=r style="left:70%;top:62%;width:28%;height:16%;background:#ffffff"></b><b class=e style="left:0%;top:5%;width:36%;height:42%;background:#ededed"></b><b style="left:50%;top:86%;width:50%;height:14%;background:#cccccc"></b><b class=r style="left:12%;top:40%;width:12%;height:26%;background:#a890c0"></b><b class=e style="left:14%;top:30%;width:10%;height:12%;background:#9a9a9a"></b><b class=r style="left:42%;top:42%;width:10%;height:30%;background:#2a6a48"></b><b class=e style="left:42%;top:34%;width:10%;height:12%;background:#7c4424"></b><b class=e style="left:54%;top:36%;width:12%;height:18%;background:#ffffff"></b><b style="left:52%;top:74%;width:30%;height:10%;background:#161616"></b><b style="left:32%;top:66%;width:16%;height:20%;background:#ededed"></b><b style="left:10%;top:66%;width:10%;height:20%;background:#a8602c"></b></b><b class="k" style="left:93px;top:126.3px;width:58.2px;height:43.2px;background:#ffffff"><b class=r style="left:20%;top:3%;width:52%;height:28%;background:#161616"></b><b class=e style="left:32%;top:8%;width:8%;height:8%;background:#ffffff"></b><b class=e style="left:30%;top:28%;width:42%;height:54%;background:#fbe3d2"></b><b class=r style="left:28%;top:30%;width:46%;height:22%;background:#dc1f1f"></b><b class=r style="left:32%;top:34%;width:16%;height:14%;background:#161616"></b><b class=r style="left:52%;top:34%;width:16%;height:14%;background:#161616"></b><b style="left:4%;top:10%;width:16%;height:86%;background:#161616"></b><b style="left:80%;top:5%;width:14%;height:50%;background:#161616"></b><b style="left:72%;top:40%;width:28%;height:60%;background:#fdf6c4"></b><b style="left:78%;top:66%;width:22%;height:30%;background:#444444"></b><b style="left:52%;top:80%;width:14%;height:20%;background:#ffffff"></b></b><b class="k" style="left:93px;top:171.6px;width:58.2px;height:43.2px;background:#fdf6c4"><b class=r style="left:38%;top:5%;width:28%;height:68%;background:#7c4424"></b><b class=e style="left:46%;top:18%;width:12%;height:26%;background:#fbe3d2"></b><b class=r style="left:30%;top:56%;width:46%;height:44%;background:#2a6a48"></b><b class=e style="left:5%;top:5%;width:26%;height:66%;background:#ededed"></b><b class=e style="left:75%;top:3%;width:23%;height:58%;background:#ededed"></b><b style="left:8%;top:74%;width:16%;height:20%;background:#ededed"></b><b style="left:58%;top:22%;width:4%;height:8%;background:#7c4424"></b></b><i class="g1"></i><i class="g2"></i><i class="g3"></i><i class="t1"></i><i class="t2"></i><i class="t3"></i><i class="t4"></i><i class="c1"></i><i class="c2"></i><i class="c3"></i><i class="c4"></i><i class="c5"></i><i class="c6"></i><i class="c7"></i></div><div class="pn" style="left:213.5px">30</div></div><div class="sp" style="left:1554px;top:902px"><div class="pg" style="left:18px"><b class="k" style="left:25.7px;top:35.8px;width:58.4px;height:43.2px;background:#2a5a40"><b class=e style="left:0%;top:5%;width:36%;height:62%;background:#ffffff"></b><b class=r style="left:70%;top:5%;width:30%;height:92%;background:#ffffff"></b><b class=t style="left:40%;top:12%;width:22%;height:44%;background:#f2500c"></b><b class=e style="left:44%;top:26%;width:5%;height:7%;background:#ffffff"></b><b class=e style="left:52%;top:26%;width:5%;height:7%;background:#ffffff"></b><b class=e style="left:5%;top:66%;width:20%;height:30%;background:#ffffff"></b><b class=e style="left:38%;top:72%;width:30%;height:22%;background:#ffffff"></b></b><b class="k" style="left:25.7px;top:81.2px;width:58.4px;height:43.2px;background:#fdf6c4"><b class=r style="left:56%;top:0%;width:44%;height:72%;background:#7c4424"></b><b class=e style="left:60%;top:34%;width:26%;height:42%;background:#fbe3d2"></b><b style="left:64%;top:76%;width:36%;height:24%;background:#2a6a48"></b><b class=e style="left:3%;top:5%;width:46%;height:42%;background:#ededed"></b><b class=e style="left:3%;top:50%;width:20%;height:30%;background:#ededed"></b><b class=r style="left:22%;top:48%;width:26%;height:52%;background:#6a4a30"></b><b style="left:28%;top:60%;width:12%;height:20%;background:#ffffff"></b><b style="left:48%;top:56%;width:16%;height:34%;background:#ededed"></b></b><b class="k" style="left:25.7px;top:126.3px;width:58.4px;height:43.2px;background:#fdf6c4"><b class=r style="left:22%;top:12%;width:14%;height:28%;background:#7c4424"></b><b class=e style="left:26%;top:18%;width:8%;height:14%;background:#fbe3d2"></b><b class=r style="left:14%;top:38%;width:38%;height:48%;background:#2a6a48"></b><b style="left:26%;top:84%;width:18%;height:16%;background:#1d2c6a"></b><b class=e style="left:44%;top:3%;width:28%;height:64%;background:#ededed"></b><b class=e style="left:72%;top:34%;width:14%;height:26%;background:#9a9a9a"></b><b class=r style="left:74%;top:58%;width:22%;height:42%;background:#a890c0"></b><b class=e style="left:70%;top:50%;width:8%;height:12%;background:#fbe3d2"></b></b><b class="k" style="left:25.7px;top:171.6px;width:58.4px;height:43.2px;background:#fdf6c4"><b class=e style="left:4%;top:0%;width:44%;height:40%;background:#7c4424"></b><b class=e style="left:18%;top:14%;width:24%;height:32%;background:#fbe3d2"></b><b class=r style="left:10%;top:44%;width:50%;height:56%;background:#2a6a48"></b><b style="left:62%;top:0%;width:38%;height:82%;background:#ededed"></b><b style="left:66%;top:6%;width:8%;height:70%;background:#161616"></b><b style="left:78%;top:6%;width:8%;height:70%;background:#161616"></b><b style="left:90%;top:6%;width:8%;height:60%;background:#161616"></b><b class=e style="left:5%;top:64%;width:24%;height:32%;background:#ffffff"></b><b style="left:0%;top:10%;width:8%;height:40%;background:#161616"></b><b style="left:42%;top:56%;width:6%;height:10%;background:#f2500c"></b></b><b class="k" style="left:93px;top:35.8px;width:58.2px;height:43.2px;background:#fdf6c4"><b class=r style="left:22%;top:0%;width:56%;height:74%;background:#7c4424"></b><b class=e style="left:32%;top:20%;width:34%;height:50%;background:#fbe3d2"></b><b class=r style="left:24%;top:76%;width:76%;height:24%;background:#2a6a48"></b><b style="left:82%;top:0%;width:18%;height:46%;background:#ededed"></b><b style="left:0%;top:55%;width:28%;height:40%;background:#ededed"></b><b style="left:4%;top:60%;width:10%;height:30%;background:#161616"></b></b><b class="k" style="left:93px;top:81.2px;width:58.2px;height:43.2px;background:#fdf6c4"><b style="left:22%;top:0%;width:36%;height:100%;background:#777777"></b><b class=t style="left:12%;top:45%;width:22%;height:55%;background:#f2500c"></b><b class=r style="left:54%;top:10%;width:18%;height:44%;background:#7c4424"></b><b class=r style="left:56%;top:44%;width:36%;height:46%;background:#2a6a48"></b><b style="left:68%;top:84%;width:16%;height:14%;background:#1d2c6a"></b><b class=e style="left:4%;top:5%;width:32%;height:40%;background:#ededed"></b><b class=e style="left:78%;top:3%;width:20%;height:36%;background:#ededed"></b><b style="left:0%;top:92%;width:100%;height:8%;background:#e9b65a"></b><b style="left:48%;top:66%;width:8%;height:6%;background:#f0a020"></b></b><b class="k" style="left:93px;top:126.3px;width:58.2px;height:43.2px;background:#fdf6c4"><b class=r style="left:38%;top:0%;width:62%;height:36%;background:#e9b65a"></b><b class=r style="left:10%;top:50%;width:30%;height:50%;background:#7c4424"></b><b class=e style="left:3%;top:8%;width:38%;height:42%;background:#ededed"></b><b class=e style="left:68%;top:5%;width:24%;height:56%;background:#ededed"></b><b class=e style="left:76%;top:54%;width:22%;height:46%;background:#ededed"></b><b style="left:52%;top:36%;width:8%;height:20%;background:#f2500c"></b><b style="left:36%;top:70%;width:20%;height:24%;background:#ededed"></b><b style="left:30%;top:62%;width:10%;height:20%;background:#fbe3d2"></b></b><b class="k" style="left:93px;top:171.6px;width:58.2px;height:43.2px;background:#fdf6c4"><b class=r style="left:32%;top:0%;width:28%;height:46%;background:#7c4424"></b><b class=e style="left:38%;top:12%;width:18%;height:30%;background:#fbe3d2"></b><b class=r style="left:20%;top:46%;width:62%;height:54%;background:#2a6a48"></b><b style="left:3%;top:5%;width:24%;height:66%;background:#ededed"></b><b class=e style="left:64%;top:3%;width:34%;height:52%;background:#ededed"></b><b style="left:8%;top:40%;width:8%;height:30%;background:#161616"></b><b style="left:30%;top:36%;width:8%;height:18%;background:#fbe3d2"></b></b><i class="g1"></i><i class="g2"></i><i class="g3"></i><i class="t1"></i><i class="t2"></i><i class="t3"></i><i class="t4"></i><i class="c1"></i><i class="c2"></i><i class="c3"></i><i class="c4"></i><i class="c5"></i><i class="c6"></i><i class="c7"></i></div><div class="pn" style="left:18px">29</div><div class="pg" style="left:213.5px"><b class="k" style="left:25.7px;top:35.8px;width:58.4px;height:43.2px;background:#fdf6c4"><b style="left:0%;top:0%;width:22%;height:62%;background:#bfe4f0"></b><b class=e style="left:4%;top:8%;width:14%;height:16%;background:#7c4424"></b><b class=e style="left:18%;top:14%;width:16%;height:26%;background:#9a9a9a"></b><b class=e style="left:24%;top:5%;width:38%;height:56%;background:#ededed"></b><b class=r style="left:58%;top:34%;width:38%;height:66%;background:#f0c8ea"></b><b class=e style="left:20%;top:52%;width:18%;height:40%;background:#ededed"></b><b style="left:22%;top:80%;width:8%;height:14%;background:#f2500c"></b><b style="left:64%;top:3%;width:30%;height:28%;background:#ededed"></b></b><b class="k" style="left:25.7px;top:81.2px;width:58.4px;height:43.2px;background:#fdf6c4"><b class=e style="left:0%;top:0%;width:36%;height:46%;background:#7c4424"></b><b class=r style="left:0%;top:40%;width:40%;height:60%;background:#f6b992"></b><b class=r style="left:34%;top:4%;width:42%;height:42%;background:#e8b050"></b><b style="left:46%;top:12%;width:6%;height:14%;background:#f2500c"></b><b style="left:58%;top:26%;width:10%;height:10%;background:#f0c8ea"></b><b class=e style="left:40%;top:46%;width:26%;height:50%;background:#ededed"></b><b class=e style="left:74%;top:5%;width:24%;height:76%;background:#ededed"></b><b style="left:3%;top:66%;width:10%;height:24%;background:#ededed"></b></b><b class="k" style="left:25.7px;top:126.3px;width:58.4px;height:43.2px;background:#fdf6c4"><b class=e style="left:0%;top:5%;width:30%;height:56%;background:#ffffff"></b><b class=e style="left:35%;top:18%;width:16%;height:24%;background:#7c4424"></b><b class=e style="left:38%;top:28%;width:10%;height:14%;background:#fbe3d2"></b><b style="left:38%;top:50%;width:14%;height:26%;background:#1d2c6a"></b><b style="left:34%;top:42%;width:22%;height:16%;background:#f6b992"></b><b style="left:22%;top:70%;width:64%;height:30%;background:#e9b65a"></b><b style="left:68%;top:5%;width:30%;height:56%;background:#ededed"></b><b style="left:2%;top:62%;width:12%;height:34%;background:#161616"></b><b style="left:52%;top:62%;width:8%;height:14%;background:#f2500c"></b><b class=e style="left:62%;top:68%;width:12%;height:10%;background:#ffffff"></b></b><b class="k" style="left:25.7px;top:171.6px;width:58.4px;height:43.2px;background:#fdf6c4"><b style="left:0%;top:0%;width:46%;height:50%;background:#ededed"></b><b style="left:4%;top:5%;width:8%;height:40%;background:#161616"></b><b style="left:16%;top:5%;width:8%;height:40%;background:#161616"></b><b style="left:28%;top:5%;width:8%;height:36%;background:#161616"></b><b class=e style="left:44%;top:24%;width:56%;height:76%;background:#f0c8ea"></b><b class=t style="left:30%;top:44%;width:12%;height:42%;background:#f2500c"></b><b style="left:18%;top:5%;width:16%;height:40%;background:#f6eeb0"></b><b class=r style="left:44%;top:76%;width:52%;height:22%;background:#161616"></b><b style="left:0%;top:90%;width:44%;height:10%;background:#e9b65a"></b><b style="left:3%;top:55%;width:22%;height:30%;background:#ededed"></b></b><b class="k" style="left:93px;top:35.8px;width:58.2px;height:43.2px;background:#fdf6c4"><b class=e style="left:32%;top:12%;width:22%;height:32%;background:#7c4424"></b><b class=e style="left:36%;top:24%;width:14%;height:22%;background:#fbe3d2"></b><b class=r style="left:26%;top:44%;width:32%;height:36%;background:#f6b992"></b><b style="left:0%;top:76%;width:100%;height:24%;background:#e9b65a"></b><b class=e style="left:5%;top:14%;width:24%;height:56%;background:#ededed"></b><b class=e style="left:60%;top:5%;width:38%;height:66%;background:#ededed"></b><b style="left:34%;top:70%;width:16%;height:12%;background:#ffffff"></b><b style="left:54%;top:62%;width:8%;height:16%;background:#f2500c"></b><b class=e style="left:72%;top:60%;width:16%;height:20%;background:#ffffff"></b></b><b class="k" style="left:93px;top:81.2px;width:58.2px;height:43.2px;background:#fdf6c4"><b class=e style="left:0%;top:16%;width:32%;height:50%;background:#7c4424"></b><b class=e style="left:16%;top:36%;width:18%;height:32%;background:#fbe3d2"></b><b style="left:0%;top:74%;width:36%;height:26%;background:#f6b992"></b><b class=r style="left:34%;top:54%;width:66%;height:46%;background:#e8b050"></b><b class=e style="left:30%;top:5%;width:26%;height:50%;background:#ededed"></b><b class=e style="left:60%;top:3%;width:38%;height:48%;background:#ededed"></b><b style="left:48%;top:48%;width:8%;height:14%;background:#f2500c"></b><b style="left:60%;top:58%;width:8%;height:8%;background:#f0c8ea"></b><b class=e style="left:74%;top:56%;width:20%;height:36%;background:#ededed"></b></b><b class="k" style="left:93px;top:126.3px;width:58.2px;height:43.2px;background:#fdf6c4"><b class=e style="left:18%;top:0%;width:38%;height:46%;background:#7c4424"></b><b class=e style="left:26%;top:20%;width:24%;height:36%;background:#fbe3d2"></b><b class=r style="left:12%;top:54%;width:50%;height:46%;background:#f6b992"></b><b class=t style="left:54%;top:44%;width:26%;height:56%;background:#f2500c"></b><b class=e style="left:78%;top:10%;width:22%;height:70%;background:#ededed"></b><b class=e style="left:3%;top:30%;width:14%;height:40%;background:#ededed"></b><b style="left:0%;top:76%;width:30%;height:24%;background:#f0c8ea"></b><b class=e style="left:54%;top:30%;width:8%;height:20%;background:#7c4424"></b></b><b class="k" style="left:93px;top:171.6px;width:58.2px;height:43.2px;background:#9a9a9a"><b style="left:8%;top:12%;width:18%;height:70%;background:#ededed"></b><b style="left:10%;top:16%;width:6%;height:50%;background:#161616"></b><b style="left:18%;top:16%;width:6%;height:40%;background:#161616"></b><b class=e style="left:70%;top:5%;width:28%;height:66%;background:#ffffff"></b><b class=e style="left:32%;top:22%;width:68%;height:78%;background:#f0c8ea"></b><b style="left:44%;top:46%;width:20%;height:5%;background:#161616"></b><b class=e style="left:52%;top:58%;width:12%;height:10%;background:#161616"></b><b style="left:70%;top:72%;width:30%;height:28%;background:#f0c8ea"></b><b style="left:4%;top:84%;width:30%;height:14%;background:#cccccc"></b></b><i class="g1"></i><i class="g2"></i><i class="g3"></i><i class="t1"></i><i class="t2"></i><i class="t3"></i><i class="t4"></i><i class="c1"></i><i class="c2"></i><i class="c3"></i><i class="c4"></i><i class="c5"></i><i class="c6"></i><i class="c7"></i></div><div class="pn" style="left:213.5px">28</div></div><div class="sp" style="left:1986px;top:902px"><div class="pg" style="left:18px"><b class="k" style="left:93px;top:35.8px;width:58.2px;height:43.2px;background:#fdf6c4"><b style="left:18%;top:0%;width:52%;height:100%;background:#555555"></b><b class=r style="left:30%;top:5%;width:20%;height:36%;background:#7c4424"></b><b class=r style="left:32%;top:30%;width:22%;height:40%;background:#fbe3d2"></b><b style="left:36%;top:74%;width:22%;height:26%;background:#1d2c6a"></b><b class=e style="left:52%;top:22%;width:16%;height:28%;background:#ffffff"></b><b class=t style="left:58%;top:60%;width:28%;height:40%;background:#f2500c"></b><b class=e style="left:2%;top:40%;width:24%;height:56%;background:#ededed"></b><b style="left:72%;top:3%;width:26%;height:58%;background:#ededed"></b><b class=e style="left:0%;top:84%;width:30%;height:16%;background:#ffffff"></b></b><b class="k" style="left:93px;top:81.2px;width:58.2px;height:43.2px;background:#fdf6c4"><b class=t style="left:18%;top:14%;width:24%;height:66%;background:#f2500c"></b><b class=e style="left:22%;top:26%;width:5%;height:8%;background:#ffffff"></b><b class=e style="left:32%;top:26%;width:5%;height:8%;background:#ffffff"></b><b class=e style="left:55%;top:3%;width:43%;height:52%;background:#ffffff"></b><b class=r style="left:48%;top:55%;width:38%;height:34%;background:#f0c8ea"></b><b style="left:0%;top:70%;width:100%;height:30%;background:#e9b65a"></b><b class=e style="left:0%;top:70%;width:12%;height:16%;background:#dc1f1f"></b><b style="left:4%;top:74%;width:30%;height:14%;background:#f2500c"></b><b style="left:58%;top:88%;width:20%;height:6%;background:#161616"></b></b><b class="k" style="left:93px;top:126.3px;width:58.2px;height:43.2px;background:#b4ea6c"><b class=r style="left:5%;top:28%;width:68%;height:64%;background:#f0c8ea"></b><b class=e style="left:72%;top:5%;width:26%;height:66%;background:#ededed"></b><b style="left:5%;top:6%;width:40%;height:14%;background:#161616"></b><b style="left:50%;top:10%;width:18%;height:8%;background:#161616"></b><b style="left:26%;top:46%;width:10%;height:4%;background:#161616"></b><b style="left:44%;top:46%;width:10%;height:4%;background:#161616"></b><b class=e style="left:34%;top:70%;width:10%;height:8%;background:#f08ac8"></b></b><b class="k" style="left:93px;top:171.6px;width:58.2px;height:43.2px;background:#ffffff"><b style="left:0%;top:0%;width:100%;height:6%;background:#9a9a9a"></b><b style="left:0%;top:0%;width:5%;height:100%;background:#9a9a9a"></b><b style="left:0%;top:94%;width:100%;height:6%;background:#9a9a9a"></b><b style="left:95%;top:0%;width:5%;height:100%;background:#9a9a9a"></b><b class=e style="left:30%;top:0%;width:50%;height:42%;background:#7c4424"></b><b class=e style="left:36%;top:16%;width:30%;height:36%;background:#fbe3d2"></b><b style="left:62%;top:22%;width:36%;height:76%;background:#ededed"></b><b style="left:66%;top:26%;width:8%;height:60%;background:#161616"></b><b style="left:80%;top:26%;width:8%;height:66%;background:#161616"></b><b style="left:5%;top:46%;width:46%;height:52%;background:#ededed"></b><b style="left:10%;top:50%;width:6%;height:40%;background:#161616"></b><b style="left:22%;top:50%;width:6%;height:40%;background:#161616"></b><b style="left:34%;top:50%;width:6%;height:36%;background:#161616"></b></b><i class="g1"></i><i class="g2"></i><i class="g3"></i><i class="t1"></i><i class="t2"></i><i class="t3"></i><i class="t4"></i><i class="c1"></i><i class="c2"></i><i class="c3"></i><i class="c4"></i><i class="c5"></i><i class="c6"></i><i class="c7"></i></div><div class="pn" style="left:18px">27</div><div class="pg" style="left:213.5px"><b class="k" style="left:25.7px;top:35.8px;width:58.4px;height:43.2px;background:#e040a0"><b class=r style="left:30%;top:0%;width:46%;height:100%;background:#2030a0"></b><b style="left:20%;top:50%;width:70%;height:50%;background:#2030a0"></b><b class=e style="left:28%;top:18%;width:34%;height:46%;background:#ffffff"></b><b class=e style="left:36%;top:26%;width:18%;height:26%;background:#3a2418"></b><b class=r style="left:2%;top:22%;width:28%;height:76%;background:#ffffff"></b><b class=r style="left:70%;top:3%;width:30%;height:60%;background:#ffffff"></b><b style="left:10%;top:3%;width:50%;height:16%;background:#161616"></b><b style="left:66%;top:66%;width:32%;height:12%;background:#161616"></b><b style="left:76%;top:60%;width:24%;height:40%;background:#e040a0"></b></b><b class="k" style="left:25.7px;top:81.2px;width:58.4px;height:43.2px;background:#fdf6c4"><b class=e style="left:0%;top:0%;width:30%;height:66%;background:#ffffff"></b><b style="left:4%;top:8%;width:20%;height:46%;background:#161616"></b><b class=e style="left:48%;top:18%;width:18%;height:26%;background:#7c4424"></b><b class=r style="left:44%;top:32%;width:26%;height:42%;background:#9a9a9a"></b><b class=e style="left:52%;top:40%;width:12%;height:18%;background:#fbe3d2"></b><b style="left:0%;top:68%;width:66%;height:32%;background:#e9b65a"></b><b style="left:22%;top:68%;width:8%;height:18%;background:#f2500c"></b><b class=e style="left:36%;top:70%;width:10%;height:10%;background:#161616"></b><b style="left:72%;top:5%;width:26%;height:46%;background:#ededed"></b><b class=e style="left:30%;top:30%;width:12%;height:14%;background:#ffffff"></b></b><b class="k" style="left:25.7px;top:126.3px;width:58.4px;height:43.2px;background:#fdf6c4"><b class=r style="left:48%;top:0%;width:52%;height:56%;background:#7c4424"></b><b class=e style="left:56%;top:24%;width:32%;height:38%;background:#fbe3d2"></b><b class=e style="left:68%;top:48%;width:12%;height:10%;background:#f08ac8"></b><b class=r style="left:34%;top:46%;width:66%;height:54%;background:#9a9a9a"></b><b class=t style="left:14%;top:42%;width:30%;height:58%;background:#f2500c"></b><b class=r style="left:42%;top:68%;width:32%;height:32%;background:#1d2c6a"></b><b class=e style="left:3%;top:5%;width:34%;height:40%;background:#ededed"></b><b style="left:2%;top:50%;width:12%;height:44%;background:#ededed"></b></b><b class="k" style="left:25.7px;top:171.6px;width:58.4px;height:43.2px;background:#fdf6c4"><b class=e style="left:24%;top:5%;width:28%;height:56%;background:#ffffff"></b><b style="left:30%;top:14%;width:14%;height:38%;background:#161616"></b><b class=t style="left:52%;top:14%;width:40%;height:86%;background:#f2500c"></b><b class=e style="left:58%;top:26%;width:10%;height:14%;background:#ffffff"></b><b class=e style="left:74%;top:26%;width:10%;height:14%;background:#ffffff"></b><b class=r style="left:62%;top:62%;width:14%;height:24%;background:#161616"></b><b style="left:3%;top:50%;width:20%;height:34%;background:#161616"></b><b style="left:28%;top:66%;width:20%;height:30%;background:#ededed"></b><b style="left:2%;top:34%;width:20%;height:12%;background:#ffffff"></b></b><b class="k" style="left:93px;top:35.8px;width:58.2px;height:43.2px;background:#ffffff"><b style="left:3%;top:5%;width:40%;height:50%;background:#ededed"></b><b style="left:47%;top:0%;width:8%;height:100%;background:#9a9a9a"></b><b style="left:86%;top:0%;width:14%;height:100%;background:#9a9a9a"></b><b style="left:55%;top:0%;width:31%;height:100%;background:#cccccc"></b><b class=e style="left:60%;top:14%;width:22%;height:36%;background:#7c4424"></b><b class=e style="left:64%;top:26%;width:12%;height:18%;background:#fbe3d2"></b><b class=r style="left:58%;top:50%;width:28%;height:50%;background:#ffffff"></b><b style="left:64%;top:62%;width:10%;height:8%;background:#a8602c"></b><b style="left:6%;top:60%;width:30%;height:30%;background:#ededed"></b></b><b class="k" style="left:93px;top:81.2px;width:58.2px;height:43.2px;background:#f0928a"><b class=r style="left:14%;top:0%;width:20%;height:40%;background:#7c4424"></b><b class=r style="left:12%;top:34%;width:28%;height:46%;background:#ffffff"></b><b style="left:14%;top:70%;width:20%;height:30%;background:#f0928a"></b><b style="left:34%;top:5%;width:28%;height:90%;background:#bfe4f0"></b><b class=e style="left:62%;top:5%;width:34%;height:46%;background:#ededed"></b><b class=t style="left:66%;top:52%;width:20%;height:48%;background:#f2500c"></b><b class=e style="left:34%;top:82%;width:66%;height:18%;background:#60b040"></b><b style="left:3%;top:55%;width:8%;height:40%;background:#ededed"></b></b><b class="k" style="left:93px;top:126.3px;width:58.2px;height:43.2px;background:#fdf6c4"><b class=e style="left:60%;top:5%;width:36%;height:46%;background:#ededed"></b><b style="left:3%;top:5%;width:20%;height:56%;background:#ededed"></b><b class=t style="left:34%;top:24%;width:32%;height:72%;background:#f2500c"></b><b class=e style="left:10%;top:62%;width:90%;height:38%;background:#68b848"></b><b style="left:36%;top:40%;width:6%;height:40%;background:#7c4424"></b><b style="left:4%;top:66%;width:12%;height:20%;background:#ededed"></b></b><b class="k" style="left:93px;top:171.6px;width:58.2px;height:43.2px;background:#f6f6f2"><b style="left:0%;top:0%;width:60%;height:100%;background:#fdf6c4"></b><b class=r style="left:62%;top:0%;width:38%;height:92%;background:#7c4424"></b><b class=e style="left:72%;top:20%;width:24%;height:52%;background:#fbe3d2"></b><b class=e style="left:24%;top:5%;width:38%;height:60%;background:#ededed"></b><b style="left:6%;top:40%;width:22%;height:50%;background:#ededed"></b><b style="left:4%;top:5%;width:8%;height:36%;background:#e8b050"></b><b style="left:52%;top:68%;width:18%;height:16%;background:#161616"></b><b style="left:80%;top:84%;width:20%;height:16%;background:#cccccc"></b></b><i class="g1"></i><i class="g2"></i><i class="g3"></i><i class="t1"></i><i class="t2"></i><i class="t3"></i><i class="t4"></i><i class="c1"></i><i class="c2"></i><i class="c3"></i><i class="c4"></i><i class="c5"></i><i class="c6"></i><i class="c7"></i></div><div class="pn" style="left:213.5px">26</div></div><div class="sp" style="left:2418px;top:902px"><div class="pg" style="left:18px"><b class="k" style="left:25.7px;top:35.8px;width:58.4px;height:43.2px;background:#fdf6c4"><b class=r style="left:3%;top:55%;width:54%;height:30%;background:#e9b65a"></b><b style="left:6%;top:84%;width:5%;height:14%;background:#e9b65a"></b><b style="left:50%;top:84%;width:5%;height:14%;background:#e9b65a"></b><b class=e style="left:42%;top:8%;width:14%;height:20%;background:#7c4424"></b><b class=r style="left:40%;top:22%;width:24%;height:32%;background:#ffffff"></b><b style="left:48%;top:50%;width:14%;height:26%;background:#161616"></b><b style="left:0%;top:8%;width:22%;height:46%;background:#ededed"></b><b class=e style="left:70%;top:30%;width:26%;height:66%;background:#ededed"></b><b style="left:82%;top:3%;width:13%;height:18%;background:#ffffff"></b><b style="left:30%;top:56%;width:6%;height:8%;background:#a8602c"></b></b><b class="k" style="left:25.7px;top:81.2px;width:58.4px;height:43.2px;background:#fdf6c4"><b class=e style="left:50%;top:5%;width:36%;height:42%;background:#7c4424"></b><b class=e style="left:56%;top:24%;width:22%;height:30%;background:#fbe3d2"></b><b class=e style="left:64%;top:42%;width:10%;height:12%;background:#f08ac8"></b><b class=r style="left:54%;top:55%;width:38%;height:45%;background:#ffffff"></b><b class=e style="left:3%;top:5%;width:44%;height:76%;background:#ededed"></b><b class=e style="left:36%;top:60%;width:12%;height:16%;background:#ffffff"></b></b><b class="k" style="left:25.7px;top:126.3px;width:58.4px;height:43.2px;background:#fdf6c4"><b class=r style="left:48%;top:0%;width:52%;height:46%;background:#7c4424"></b><b class=e style="left:54%;top:24%;width:40%;height:46%;background:#fbe3d2"></b><b class=e style="left:64%;top:46%;width:16%;height:20%;background:#f08ac8"></b><b class=r style="left:54%;top:70%;width:46%;height:30%;background:#ffffff"></b><b style="left:0%;top:5%;width:46%;height:66%;background:#ededed"></b><b class=e style="left:24%;top:70%;width:18%;height:26%;background:#ededed"></b></b><b class="k" style="left:25.7px;top:171.6px;width:58.4px;height:43.2px;background:#fdf6c4"><b style="left:5%;top:30%;width:20%;height:60%;background:#ffffff"></b><b style="left:10%;top:40%;width:10%;height:30%;background:#161616"></b><b class=t style="left:60%;top:44%;width:22%;height:56%;background:#f2500c"></b><b class=e style="left:58%;top:0%;width:28%;height:50%;background:#ffffff"></b><b style="left:28%;top:5%;width:28%;height:86%;background:#ededed"></b><b class=e style="left:82%;top:5%;width:16%;height:46%;background:#ededed"></b><b style="left:84%;top:56%;width:14%;height:30%;background:#ededed"></b></b><b class="k" style="left:93px;top:35.8px;width:58.2px;height:43.2px;background:#fdf6c4"><b style="left:24%;top:0%;width:38%;height:36%;background:#cccccc"></b><b class=e style="left:54%;top:5%;width:32%;height:52%;background:#ededed"></b><b class=e style="left:72%;top:34%;width:28%;height:46%;background:#7c4424"></b><b class=r style="left:58%;top:74%;width:42%;height:26%;background:#ffffff"></b><b class=e style="left:10%;top:40%;width:40%;height:30%;background:#f6eeb0"></b><b style="left:14%;top:60%;width:12%;height:8%;background:#a8602c"></b><b class=e style="left:88%;top:3%;width:12%;height:14%;background:#dc1f1f"></b><b style="left:90%;top:16%;width:8%;height:8%;background:#35a035"></b><b style="left:34%;top:78%;width:6%;height:16%;background:#161616"></b><b style="left:4%;top:8%;width:16%;height:16%;background:#ededed"></b></b><b class="k" style="left:93px;top:81.2px;width:58.2px;height:43.2px;background:#fdf6c4"><b style="left:5%;top:0%;width:7%;height:56%;background:#9a9a9a"></b><b class=e style="left:14%;top:5%;width:24%;height:52%;background:#ededed"></b><b class=e style="left:68%;top:3%;width:30%;height:58%;background:#ededed"></b><b class=e style="left:42%;top:10%;width:10%;height:18%;background:#7c4424"></b><b class=r style="left:42%;top:24%;width:16%;height:26%;background:#ffffff"></b><b style="left:44%;top:50%;width:14%;height:26%;background:#161616"></b><b style="left:48%;top:24%;width:5%;height:26%;background:#161616"></b><b class=e style="left:0%;top:54%;width:26%;height:46%;background:#7c4424"></b><b class=e style="left:14%;top:70%;width:12%;height:20%;background:#fbe3d2"></b><b class=e style="left:22%;top:78%;width:14%;height:16%;background:#f6eeb0"></b><b style="left:50%;top:82%;width:10%;height:6%;background:#161616"></b><b style="left:68%;top:84%;width:10%;height:6%;background:#161616"></b></b><b class="k" style="left:93px;top:126.3px;width:58.2px;height:43.2px;background:#ffffff"><b class=r style="left:0%;top:15%;width:30%;height:62%;background:#9a9a9a"></b><b class=e style="left:4%;top:24%;width:22%;height:36%;background:#ffffff"></b><b style="left:10%;top:36%;width:10%;height:14%;background:#161616"></b><b style="left:28%;top:30%;width:14%;height:60%;background:#161616"></b><b class=e style="left:54%;top:0%;width:32%;height:26%;background:#7c4424"></b><b class=e style="left:54%;top:14%;width:26%;height:36%;background:#fbe3d2"></b><b class=r style="left:40%;top:44%;width:60%;height:42%;background:#ffffff"></b><b class=r style="left:14%;top:80%;width:86%;height:20%;background:#e85020"></b><b style="left:80%;top:30%;width:8%;height:40%;background:#161616"></b><b style="left:74%;top:44%;width:22%;height:30%;background:#ededed"></b><b style="left:40%;top:0%;width:8%;height:80%;background:#bfe4f0"></b></b><b class="k" style="left:93px;top:171.6px;width:58.2px;height:43.2px;background:#fdf6c4"><b class=r style="left:0%;top:24%;width:56%;height:40%;background:#e04818"></b><b style="left:0%;top:5%;width:50%;height:18%;background:#a8d8a0"></b><b style="left:6%;top:5%;width:30%;height:10%;background:#161616"></b><b style="left:64%;top:5%;width:34%;height:58%;background:#ededed"></b><b style="left:70%;top:10%;width:8%;height:46%;background:#161616"></b><b style="left:84%;top:10%;width:8%;height:46%;background:#161616"></b><b style="left:60%;top:22%;width:6%;height:76%;background:#ffffff"></b><b class=e style="left:30%;top:72%;width:16%;height:20%;background:#ffffff"></b><b style="left:4%;top:70%;width:20%;height:14%;background:#ededed"></b></b><i class="g1"></i><i class="g2"></i><i class="g3"></i><i class="t1"></i><i class="t2"></i><i class="t3"></i><i class="t4"></i><i class="c1"></i><i class="c2"></i><i class="c3"></i><i class="c4"></i><i class="c5"></i><i class="c6"></i><i class="c7"></i></div><div class="pn" style="left:18px">25</div><div class="pg" style="left:213.5px"><b class="k" style="left:25.7px;top:35.8px;width:58.4px;height:43.2px;background:#161616"><b style="left:18%;top:5%;width:12%;height:56%;background:#ededed"></b><b style="left:70%;top:3%;width:18%;height:38%;background:#ededed"></b><b style="left:3%;top:40%;width:9%;height:50%;background:#ededed"></b><b class=e style="left:35%;top:18%;width:32%;height:40%;background:#7c4424"></b><b class=e style="left:42%;top:36%;width:18%;height:30%;background:#fbe3d2"></b><b class=r style="left:38%;top:60%;width:42%;height:40%;background:#ffffff"></b><b style="left:60%;top:62%;width:8%;height:38%;background:#161616"></b></b><b class="k" style="left:25.7px;top:81.2px;width:58.4px;height:43.2px;background:#fdf6c4"><b style="left:8%;top:0%;width:5%;height:90%;background:#cccccc"></b><b style="left:0%;top:90%;width:100%;height:10%;background:#cccccc"></b><b class=e style="left:38%;top:8%;width:24%;height:62%;background:#ededed"></b><b style="left:14%;top:5%;width:22%;height:56%;background:#ededed"></b><b class=e style="left:62%;top:30%;width:14%;height:22%;background:#7c4424"></b><b class=r style="left:62%;top:46%;width:16%;height:30%;background:#ffffff"></b><b class=r style="left:72%;top:48%;width:16%;height:40%;background:#161616"></b><b class=e style="left:5%;top:60%;width:22%;height:28%;background:#e8c070"></b><b style="left:64%;top:76%;width:12%;height:14%;background:#161616"></b></b><b class="k" style="left:25.7px;top:126.3px;width:58.4px;height:43.2px;background:#fdf6c4"><b style="left:3%;top:8%;width:26%;height:62%;background:#ededed"></b><b class=r style="left:40%;top:0%;width:60%;height:52%;background:#7c4424"></b><b class=e style="left:48%;top:24%;width:28%;height:46%;background:#fbe3d2"></b><b class=r style="left:44%;top:60%;width:56%;height:40%;background:#ffffff"></b><b style="left:62%;top:64%;width:6%;height:36%;background:#161616"></b><b style="left:4%;top:76%;width:30%;height:10%;background:#f6eeb0"></b></b><b class="k" style="left:25.7px;top:171.6px;width:58.4px;height:43.2px;background:#fdf6c4"><b class=e style="left:5%;top:5%;width:36%;height:50%;background:#f0d090"></b><b class=e style="left:16%;top:10%;width:12%;height:8%;background:#dc1f1f"></b><b class=r style="left:18%;top:24%;width:24%;height:32%;background:#161616"></b><b style="left:38%;top:45%;width:18%;height:50%;background:#ededed"></b><b class=e style="left:50%;top:5%;width:20%;height:36%;background:#ededed"></b><b class=e style="left:66%;top:40%;width:16%;height:26%;background:#9a9a9a"></b><b class=e style="left:64%;top:32%;width:14%;height:16%;background:#7c4424"></b><b class=r style="left:66%;top:62%;width:22%;height:34%;background:#161616"></b><b style="left:0%;top:90%;width:100%;height:10%;background:#cccccc"></b><b style="left:2%;top:60%;width:10%;height:30%;background:#ededed"></b></b><b class="k" style="left:93px;top:35.8px;width:58.2px;height:43.2px;background:#fdf6c4"><b class=e style="left:8%;top:5%;width:42%;height:50%;background:#ffffff"></b><b class=e style="left:18%;top:55%;width:22%;height:38%;background:#ededed"></b><b class=e style="left:62%;top:8%;width:20%;height:28%;background:#7c4424"></b><b class=e style="left:66%;top:18%;width:12%;height:18%;background:#fbe3d2"></b><b class=r style="left:60%;top:38%;width:28%;height:62%;background:#ffffff"></b><b style="left:62%;top:40%;width:5%;height:50%;background:#161616"></b><b style="left:82%;top:40%;width:5%;height:50%;background:#161616"></b></b><b class="k" style="left:93px;top:81.2px;width:58.2px;height:43.2px;background:#fdf6c4"><b class=e style="left:8%;top:8%;width:38%;height:78%;background:#ffffff"></b><b style="left:14%;top:14%;width:10%;height:14%;background:#161616"></b><b class=r style="left:58%;top:14%;width:18%;height:38%;background:#7c4424"></b><b class=e style="left:68%;top:22%;width:8%;height:16%;background:#fbe3d2"></b><b class=r style="left:50%;top:54%;width:22%;height:46%;background:#161616"></b><b class=r style="left:64%;top:54%;width:14%;height:46%;background:#ffffff"></b><b class=e style="left:12%;top:60%;width:16%;height:22%;background:#ffffff"></b></b><b class="k" style="left:93px;top:126.3px;width:58.2px;height:43.2px;background:#fdf6c4"><b class=r style="left:35%;top:0%;width:52%;height:56%;background:#7c4424"></b><b class=e style="left:60%;top:30%;width:26%;height:36%;background:#fbe3d2"></b><b class=e style="left:3%;top:8%;width:20%;height:38%;background:#ffffff"></b><b class=e style="left:3%;top:44%;width:28%;height:42%;background:#f0d090"></b><b class=e style="left:35%;top:58%;width:24%;height:42%;background:#ffffff"></b><b style="left:40%;top:68%;width:14%;height:22%;background:#161616"></b><b class=r style="left:52%;top:64%;width:48%;height:36%;background:#ffffff"></b><b style="left:66%;top:56%;width:6%;height:10%;background:#161616"></b></b><b class="k" style="left:93px;top:171.6px;width:58.2px;height:43.2px;background:#fdf6c4"><b class=e style="left:15%;top:5%;width:66%;height:95%;background:#f8dca0"></b><b class=r style="left:35%;top:58%;width:32%;height:14%;background:#e85020"></b><b style="left:34%;top:36%;width:8%;height:3%;background:#161616"></b><b style="left:54%;top:36%;width:8%;height:3%;background:#161616"></b><b class=e style="left:46%;top:48%;width:6%;height:6%;background:#161616"></b><b class=e style="left:78%;top:3%;width:20%;height:48%;background:#ededed"></b><b style="left:3%;top:45%;width:12%;height:40%;background:#ededed"></b><b class=e style="left:72%;top:56%;width:14%;height:24%;background:#ffffff"></b></b><i class="g1"></i><i class="g2"></i><i class="g3"></i><i class="t1"></i><i class="t2"></i><i class="t3"></i><i class="t4"></i><i class="c1"></i><i class="c2"></i><i class="c3"></i><i class="c4"></i><i class="c5"></i><i class="c6"></i><i class="c7"></i></div><div class="pn" style="left:213.5px">24</div></div><div class="sp" style="left:258px;top:1252px"><div class="pg" style="left:18px"><b class="k" style="left:60.4px;top:35.8px;width:58.4px;height:43.2px;background:#777777"><b style="left:0%;top:5%;width:10%;height:76%;background:#ededed"></b><b class=e style="left:26%;top:12%;width:22%;height:22%;background:#fbe3d2"></b><b style="left:24%;top:34%;width:20%;height:26%;background:#3a96e0"></b><b style="left:20%;top:56%;width:26%;height:14%;background:#f4e050"></b><b class=e style="left:52%;top:10%;width:24%;height:26%;background:#fbe3d2"></b><b class=r style="left:42%;top:28%;width:24%;height:30%;background:#f0928a"></b><b class=e style="left:34%;top:56%;width:40%;height:30%;background:#161616"></b><b style="left:64%;top:40%;width:36%;height:60%;background:#555555"></b><b style="left:70%;top:46%;width:24%;height:42%;background:#ededed"></b><b class=e style="left:58%;top:22%;width:10%;height:12%;background:#ffffff"></b></b><b class="k" style="left:60.4px;top:81.2px;width:58.4px;height:43.2px;background:#dcf2b8"><b style="left:28%;top:0%;width:58%;height:100%;background:#c8c0b0"></b><b style="left:28%;top:0%;width:58%;height:14%;background:#555555"></b><b class=r style="left:4%;top:34%;width:96%;height:40%;background:#f8f0a0"></b><b style="left:0%;top:70%;width:44%;height:30%;background:#8a4a1a"></b><b class=e style="left:6%;top:40%;width:22%;height:26%;background:#ffffff"></b></b><b class="k" style="left:60.4px;top:126.3px;width:58.4px;height:43.2px;background:#d8d4cc"><b class=r style="left:0%;top:35%;width:26%;height:65%;background:#ffffff"></b><b class=r style="left:72%;top:8%;width:28%;height:68%;background:#ffffff"></b><b style="left:0%;top:10%;width:80%;height:40%;background:#eee6da"></b><b style="left:4%;top:50%;width:16%;height:40%;background:#161616"></b><b style="left:78%;top:16%;width:16%;height:50%;background:#161616"></b><b style="left:18%;top:3%;width:8%;height:14%;background:#f2500c"></b><b style="left:40%;top:40%;width:20%;height:12%;background:#ededed"></b></b><b class="k" style="left:60.4px;top:171.6px;width:58.4px;height:43.2px;background:#fdf6c4"><b class=t style="left:42%;top:12%;width:28%;height:58%;background:#f2500c"></b><b class=e style="left:50%;top:26%;width:6%;height:9%;background:#ffffff"></b><b class=r style="left:24%;top:60%;width:62%;height:40%;background:#b06a3a"></b><b class=e style="left:72%;top:44%;width:24%;height:32%;background:#ffffff"></b><b style="left:0%;top:0%;width:30%;height:92%;background:#ededed"></b><b style="left:86%;top:0%;width:14%;height:30%;background:#ededed"></b><b style="left:10%;top:90%;width:20%;height:10%;background:#dc1f1f"></b><b style="left:78%;top:52%;width:10%;height:14%;background:#161616"></b></b><b style="left:72px;top:29.5px;width:36px;height:5px;background:#222;border-radius:2px"></b><i class="g1"></i><i class="g2"></i><i class="g3"></i><i class="t1"></i><i class="t2"></i><i class="t3"></i><i class="t4"></i><i class="c1"></i><i class="c2"></i><i class="c3"></i><i class="c4"></i><i class="c5"></i><i class="c6"></i><i class="c7"></i></div><div class="pn" style="left:18px">47</div><div class="pg" style="left:213.5px"><b class="k" style="left:93px;top:35.8px;width:58.2px;height:43.2px;background:#fdf6c4"><b class=r style="left:38%;top:0%;width:42%;height:30%;background:#7c4424"></b><b class=e style="left:46%;top:10%;width:26%;height:36%;background:#fbe3d2"></b><b class=r style="left:34%;top:26%;width:48%;height:36%;background:#9a9a9a"></b><b class=t style="left:22%;top:24%;width:16%;height:42%;background:#f2500c"></b><b style="left:14%;top:55%;width:86%;height:45%;background:#e9b65a"></b><b class=e style="left:20%;top:62%;width:52%;height:26%;background:#a8602c"></b><b style="left:80%;top:3%;width:18%;height:54%;background:#ededed"></b><b style="left:2%;top:58%;width:16%;height:40%;background:#ededed"></b></b><b class="k" style="left:93px;top:81.2px;width:58.2px;height:43.2px;background:#fdf6c4"><b class=r style="left:20%;top:5%;width:80%;height:95%;background:#444444"></b><b class=e style="left:0%;top:20%;width:16%;height:30%;background:#7c4424"></b><b class=e style="left:40%;top:0%;width:22%;height:30%;background:#9a9a9a"></b><b class=e style="left:46%;top:12%;width:16%;height:22%;background:#fbe3d2"></b><b style="left:50%;top:22%;width:14%;height:12%;background:#ffffff"></b><b style="left:76%;top:5%;width:20%;height:42%;background:#ededed"></b><b style="left:5%;top:35%;width:16%;height:60%;background:#ededed"></b><b style="left:66%;top:50%;width:8%;height:14%;background:#ffffff"></b><b style="left:28%;top:64%;width:20%;height:24%;background:#161616"></b><b style="left:0%;top:92%;width:100%;height:8%;background:#e9b65a"></b></b><b class="k" style="left:93px;top:126.3px;width:58.2px;height:43.2px;background:#e8f0c0"><b class=r style="left:58%;top:10%;width:42%;height:90%;background:#161616"></b><b class=e style="left:20%;top:10%;width:36%;height:52%;background:#7c4424"></b><b class=e style="left:36%;top:40%;width:20%;height:26%;background:#ffffff"></b><b class=r style="left:14%;top:64%;width:42%;height:36%;background:#e8b050"></b><b style="left:62%;top:40%;width:34%;height:50%;background:#ededed"></b><b style="left:0%;top:5%;width:18%;height:46%;background:#ededed"></b><b style="left:2%;top:8%;width:8%;height:30%;background:#161616"></b><b style="left:14%;top:60%;width:8%;height:36%;background:#161616"></b><b style="left:78%;top:5%;width:18%;height:26%;background:#ededed"></b></b><b class="k" style="left:93px;top:171.6px;width:58.2px;height:43.2px;background:#fdf6c4"><b style="left:0%;top:0%;width:82%;height:86%;background:#e8b050"></b><b style="left:0%;top:0%;width:30%;height:30%;background:#fdf6c4"></b><b class=e style="left:54%;top:44%;width:46%;height:56%;background:#7c4424"></b><b class=e style="left:72%;top:3%;width:26%;height:52%;background:#ffffff"></b><b class=e style="left:12%;top:10%;width:18%;height:50%;background:#ffffff"></b><b class=e style="left:42%;top:24%;width:18%;height:20%;background:#f2500c"></b><b class=e style="left:34%;top:36%;width:14%;height:10%;background:#a8602c"></b><b style="left:6%;top:66%;width:12%;height:26%;background:#ededed"></b></b><i class="g1"></i><i class="g2"></i><i class="g3"></i><i class="t1"></i><i class="t2"></i><i class="t3"></i><i class="t4"></i><i class="c1"></i><i class="c2"></i><i class="c3"></i><i class="c4"></i><i class="c5"></i><i class="c6"></i><i class="c7"></i></div><div class="pn" style="left:213.5px">46</div></div><div class="sp" style="left:690px;top:1252px"><div class="pg" style="left:18px"><i class="g1"></i><i class="g2"></i><i class="g3"></i><i class="t1"></i><i class="t2"></i><i class="t3"></i><i class="t4"></i><i class="c1"></i><i class="c2"></i><i class="c3"></i><i class="c4"></i><i class="c5"></i><i class="c6"></i><i class="c7"></i></div><div class="pn" style="left:18px">45</div><div class="pg" style="left:213.5px"><b class="k" style="left:25.7px;top:35.8px;width:58.4px;height:43.2px;background:#d8d4cc"><b class=r style="left:30%;top:0%;width:52%;height:46%;background:#161616"></b><b class=e style="left:44%;top:10%;width:22%;height:26%;background:#ffffff"></b><b class=r style="left:50%;top:30%;width:24%;height:60%;background:#dc1f1f"></b><b style="left:28%;top:32%;width:24%;height:30%;background:#161616"></b><b style="left:2%;top:5%;width:20%;height:46%;background:#ededed"></b><b class=e style="left:12%;top:50%;width:20%;height:46%;background:#ededed"></b><b style="left:76%;top:0%;width:22%;height:70%;background:#ffffff"></b><b class=e style="left:35%;top:52%;width:18%;height:28%;background:#f4e050"></b><b class=e style="left:40%;top:62%;width:12%;height:20%;background:#fbe3d2"></b><b style="left:15%;top:80%;width:26%;height:20%;background:#bfe4f0"></b><b class=e style="left:68%;top:56%;width:24%;height:44%;background:#ffffff"></b></b><b class="k" style="left:25.7px;top:81.2px;width:58.4px;height:43.2px;background:#fdf6c4"><b class=t style="left:28%;top:12%;width:20%;height:54%;background:#f2500c"></b><b class=e style="left:32%;top:22%;width:5%;height:7%;background:#ffffff"></b><b class=e style="left:52%;top:14%;width:18%;height:26%;background:#f4e050"></b><b class=e style="left:56%;top:24%;width:12%;height:18%;background:#fbe3d2"></b><b class=r style="left:44%;top:46%;width:42%;height:54%;background:#bfe4f0"></b><b style="left:56%;top:56%;width:18%;height:44%;background:#ffffff"></b><b class=e style="left:2%;top:5%;width:20%;height:50%;background:#ededed"></b><b class=e style="left:24%;top:56%;width:24%;height:44%;background:#ffffff"></b><b class=e style="left:72%;top:24%;width:26%;height:56%;background:#ededed"></b><b style="left:78%;top:3%;width:20%;height:14%;background:#ededed"></b><b style="left:86%;top:60%;width:12%;height:30%;background:#161616"></b></b><b class="k" style="left:25.7px;top:126.3px;width:58.4px;height:43.2px;background:#b8a8c0"><b class=e style="left:3%;top:3%;width:54%;height:58%;background:#ffffff"></b><b class=r style="left:60%;top:0%;width:40%;height:42%;background:#f4e050"></b><b class=e style="left:62%;top:24%;width:34%;height:60%;background:#fbe3d2"></b><b class=e style="left:74%;top:66%;width:10%;height:6%;background:#dc1f1f"></b><b class=r style="left:44%;top:76%;width:56%;height:24%;background:#bfe4f0"></b><b style="left:60%;top:60%;width:10%;height:36%;background:#f4e050"></b><b style="left:3%;top:66%;width:32%;height:34%;background:#ededed"></b><b style="left:6%;top:12%;width:8%;height:40%;background:#161616"></b></b><b class="k" style="left:25.7px;top:171.6px;width:58.4px;height:43.2px;background:#fdf6c4"><b class=r style="left:34%;top:0%;width:42%;height:46%;background:#7c4424"></b><b class=r style="left:34%;top:30%;width:38%;height:70%;background:#fbe3d2"></b><b style="left:32%;top:34%;width:12%;height:50%;background:#7c4424"></b><b class=e style="left:12%;top:3%;width:24%;height:42%;background:#ededed"></b><b class=r style="left:74%;top:0%;width:26%;height:86%;background:#ffffff"></b><b style="left:3%;top:50%;width:22%;height:46%;background:#ededed"></b><b style="left:58%;top:78%;width:14%;height:16%;background:#ededed"></b><b style="left:6%;top:20%;width:6%;height:8%;background:#ffffff"></b></b><b class="k" style="left:93px;top:35.8px;width:58.2px;height:43.2px;background:#fdf6c4"><b class=t style="left:32%;top:12%;width:24%;height:78%;background:#f2500c"></b><b class=e style="left:48%;top:34%;width:5%;height:9%;background:#ffffff"></b><b class=e style="left:5%;top:3%;width:20%;height:42%;background:#ededed"></b><b class=e style="left:75%;top:5%;width:20%;height:46%;background:#ededed"></b><b class=e style="left:58%;top:5%;width:14%;height:36%;background:#ffffff"></b><b class=r style="left:62%;top:14%;width:10%;height:36%;background:#f4e050"></b><b class=r style="left:55%;top:50%;width:18%;height:40%;background:#bfe4f0"></b><b style="left:3%;top:65%;width:28%;height:25%;background:#ededed"></b><b class=e style="left:5%;top:45%;width:12%;height:12%;background:#161616"></b><b class=e style="left:22%;top:50%;width:12%;height:12%;background:#161616"></b><b style="left:30%;top:82%;width:26%;height:10%;background:#161616"></b></b><b class="k" style="left:93px;top:81.2px;width:58.2px;height:43.2px;background:#fdf6c4"><b class=e style="left:3%;top:3%;width:32%;height:52%;background:#ededed"></b><b class=e style="left:40%;top:10%;width:12%;height:20%;background:#ffffff"></b><b style="left:58%;top:3%;width:40%;height:22%;background:#ededed"></b><b class=t style="left:40%;top:38%;width:18%;height:62%;background:#f2500c"></b><b class=e style="left:44%;top:50%;width:5%;height:9%;background:#ffffff"></b><b class=r style="left:58%;top:40%;width:10%;height:26%;background:#f4e050"></b><b class=e style="left:64%;top:30%;width:12%;height:30%;background:#ffffff"></b><b class=r style="left:60%;top:65%;width:20%;height:35%;background:#bfe4f0"></b><b style="left:86%;top:24%;width:12%;height:62%;background:#161616"></b><b style="left:3%;top:78%;width:52%;height:20%;background:#ededed"></b><b class=e style="left:4%;top:62%;width:10%;height:12%;background:#161616"></b><b class=e style="left:20%;top:62%;width:10%;height:12%;background:#161616"></b></b><b class="k" style="left:93px;top:126.3px;width:58.2px;height:43.2px;background:#b89880"><b class=e style="left:3%;top:8%;width:36%;height:88%;background:#ffffff"></b><b class=e style="left:38%;top:40%;width:8%;height:10%;background:#ffffff"></b><b class=t style="left:48%;top:12%;width:52%;height:88%;background:#f2500c"></b><b class=e style="left:58%;top:40%;width:10%;height:18%;background:#ffffff"></b><b class=e style="left:76%;top:40%;width:10%;height:18%;background:#ffffff"></b><b style="left:14%;top:24%;width:8%;height:50%;background:#161616"></b></b><b class="k" style="left:93px;top:171.6px;width:58.2px;height:43.2px;background:#fdf6c4"><b class=e style="left:0%;top:5%;width:42%;height:56%;background:#7c4424"></b><b class=e style="left:4%;top:40%;width:20%;height:30%;background:#fbe3d2"></b><b class=r style="left:35%;top:0%;width:50%;height:100%;background:#e8b040"></b><b class=e style="left:54%;top:24%;width:12%;height:18%;background:#f4e050"></b><b class=r style="left:52%;top:40%;width:14%;height:30%;background:#bfe4f0"></b><b class=r style="left:75%;top:0%;width:25%;height:90%;background:#ffffff"></b><b style="left:80%;top:8%;width:10%;height:70%;background:#161616"></b><b class=e style="left:8%;top:40%;width:32%;height:56%;background:#ffffff"></b><b style="left:14%;top:50%;width:10%;height:36%;background:#161616"></b><b class=e style="left:25%;top:86%;width:18%;height:14%;background:#161616"></b></b><i class="g1"></i><i class="g2"></i><i class="g3"></i><i class="t1"></i><i class="t2"></i><i class="t3"></i><i class="t4"></i><i class="c1"></i><i class="c2"></i><i class="c3"></i><i class="c4"></i><i class="c5"></i><i class="c6"></i><i class="c7"></i></div><div class="pn" style="left:213.5px">44</div></div><div class="sp" style="left:1122px;top:1252px"><div class="pg" style="left:18px"><b class="k" style="left:93px;top:35.8px;width:58.2px;height:43.2px;background:#fdf6c4"><b style="left:0%;top:20%;width:66%;height:60%;background:#e9b65a"></b><b class=e style="left:3%;top:5%;width:20%;height:40%;background:#ededed"></b><b class=e style="left:42%;top:5%;width:16%;height:36%;background:#ededed"></b><b class=r style="left:60%;top:5%;width:40%;height:42%;background:#7c4424"></b><b class=e style="left:62%;top:30%;width:24%;height:36%;background:#fbe3d2"></b><b class=r style="left:54%;top:70%;width:46%;height:30%;background:#161616"></b><b style="left:80%;top:5%;width:18%;height:36%;background:#ededed"></b><b style="left:5%;top:55%;width:16%;height:40%;background:#ededed"></b><b style="left:32%;top:64%;width:16%;height:32%;background:#ededed"></b><b style="left:22%;top:40%;width:6%;height:16%;background:#f2500c"></b><b style="left:30%;top:40%;width:8%;height:16%;background:#bfe4f0"></b><b style="left:40%;top:48%;width:14%;height:8%;background:#a8602c"></b></b><b class="k" style="left:93px;top:81.2px;width:58.2px;height:43.2px;background:#fdf6c4"><b class=t style="left:18%;top:12%;width:20%;height:74%;background:#f2500c"></b><b class=e style="left:22%;top:24%;width:5%;height:8%;background:#ffffff"></b><b class=e style="left:50%;top:5%;width:30%;height:46%;background:#ffffff"></b><b class=e style="left:56%;top:16%;width:18%;height:28%;background:#f4e050"></b><b class=e style="left:60%;top:26%;width:10%;height:16%;background:#fbe3d2"></b><b class=r style="left:30%;top:50%;width:66%;height:50%;background:#bfe4f0"></b><b style="left:50%;top:60%;width:26%;height:40%;background:#ffffff"></b><b class=r style="left:2%;top:5%;width:14%;height:94%;background:#ededed"></b><b class=e style="left:78%;top:3%;width:20%;height:48%;background:#ededed"></b><b style="left:30%;top:70%;width:8%;height:10%;background:#dc1f1f"></b></b><b class="k" style="left:93px;top:126.3px;width:58.2px;height:43.2px;background:#f6f6f2"><b style="left:0%;top:3%;width:46%;height:28%;background:#cccccc"></b><b class=e style="left:46%;top:0%;width:50%;height:100%;background:#ffffff"></b><b class=e style="left:52%;top:10%;width:38%;height:42%;background:#f4e050"></b><b class=e style="left:58%;top:30%;width:28%;height:40%;background:#fbe3d2"></b><b class=e style="left:68%;top:56%;width:10%;height:6%;background:#dc1f1f"></b><b class=r style="left:50%;top:66%;width:50%;height:34%;background:#bfe4f0"></b><b class=r style="left:26%;top:14%;width:20%;height:16%;background:#161616"></b><b class=r style="left:30%;top:40%;width:22%;height:20%;background:#161616"></b><b class=r style="left:36%;top:70%;width:16%;height:14%;background:#161616"></b><b style="left:44%;top:66%;width:10%;height:34%;background:#f4e050"></b><b style="left:3%;top:36%;width:20%;height:60%;background:#ededed"></b></b><b class="k" style="left:93px;top:171.6px;width:58.2px;height:43.2px;background:#fdf6c4"><b class=r style="left:38%;top:14%;width:18%;height:36%;background:#161616"></b><b class=e style="left:40%;top:8%;width:14%;height:16%;background:#7c4424"></b><b class=e style="left:42%;top:18%;width:8%;height:10%;background:#fbe3d2"></b><b style="left:42%;top:40%;width:10%;height:12%;background:#ffffff"></b><b class=e style="left:65%;top:3%;width:30%;height:48%;background:#ededed"></b><b class=t style="left:72%;top:60%;width:28%;height:40%;background:#f2500c"></b><b class=e style="left:80%;top:70%;width:6%;height:8%;background:#ffffff"></b><b class=r style="left:20%;top:55%;width:50%;height:12%;background:#161616"></b><b class=r style="left:26%;top:72%;width:40%;height:10%;background:#161616"></b><b class=r style="left:34%;top:88%;width:36%;height:10%;background:#161616"></b><b style="left:3%;top:10%;width:18%;height:80%;background:#ededed"></b><b style="left:40%;top:54%;width:24%;height:12%;background:#cccccc"></b></b><i class="g1"></i><i class="g2"></i><i class="g3"></i><i class="t1"></i><i class="t2"></i><i class="t3"></i><i class="t4"></i><i class="c1"></i><i class="c2"></i><i class="c3"></i><i class="c4"></i><i class="c5"></i><i class="c6"></i><i class="c7"></i></div><div class="pn" style="left:18px">43</div><div class="pg" style="left:213.5px"><b class="k" style="left:25.7px;top:35.8px;width:58.4px;height:43.2px;background:#fdf6c4"><b class=r style="left:15%;top:36%;width:70%;height:54%;background:#c08050"></b><b class=r style="left:20%;top:34%;width:62%;height:48%;background:#ffffff"></b><b class=t style="left:38%;top:14%;width:20%;height:56%;background:#f2500c"></b><b class=e style="left:38%;top:64%;width:8%;height:8%;background:#dc1f1f"></b><b class=e style="left:5%;top:10%;width:26%;height:50%;background:#ededed"></b><b class=e style="left:70%;top:5%;width:22%;height:36%;background:#ededed"></b><b class=e style="left:8%;top:74%;width:16%;height:14%;background:#ffffff"></b></b><b class="k" style="left:25.7px;top:81.2px;width:58.4px;height:43.2px;background:#fdf6c4"><b class=r style="left:30%;top:24%;width:48%;height:52%;background:#c08050"></b><b class=r style="left:34%;top:22%;width:40%;height:44%;background:#ffffff"></b><b class=e style="left:40%;top:20%;width:28%;height:48%;background:#f2500c"></b><b class=e style="left:50%;top:60%;width:8%;height:8%;background:#dc1f1f"></b><b class=e style="left:3%;top:5%;width:28%;height:56%;background:#ededed"></b><b style="left:68%;top:44%;width:28%;height:46%;background:#ededed"></b><b class=r style="left:5%;top:70%;width:18%;height:24%;background:#c08050"></b><b class=e style="left:44%;top:78%;width:16%;height:12%;background:#ffffff"></b></b><b class="k" style="left:25.7px;top:126.3px;width:58.4px;height:43.2px;background:#fdf6c4"><b class=r style="left:0%;top:20%;width:60%;height:50%;background:#ffffff"></b><b class=t style="left:18%;top:14%;width:30%;height:36%;background:#f2500c"></b><b class=e style="left:26%;top:22%;width:5%;height:7%;background:#ffffff"></b><b class=e style="left:36%;top:22%;width:5%;height:7%;background:#ffffff"></b><b style="left:0%;top:64%;width:50%;height:36%;background:#a05a30"></b><b class=r style="left:62%;top:0%;width:38%;height:76%;background:#ffffff"></b><b style="left:70%;top:8%;width:10%;height:56%;background:#161616"></b><b style="left:84%;top:8%;width:10%;height:50%;background:#161616"></b><b style="left:30%;top:68%;width:44%;height:14%;background:#161616"></b></b><b class="k" style="left:25.7px;top:171.6px;width:58.4px;height:43.2px;background:#fdf6c4"><b class=r style="left:5%;top:0%;width:56%;height:52%;background:#7c4424"></b><b class=e style="left:14%;top:30%;width:38%;height:40%;background:#fbe3d2"></b><b class=r style="left:8%;top:66%;width:54%;height:34%;background:#f0a020"></b><b class=r style="left:62%;top:0%;width:38%;height:96%;background:#ffffff"></b><b style="left:68%;top:8%;width:8%;height:70%;background:#161616"></b><b style="left:80%;top:8%;width:8%;height:76%;background:#161616"></b><b style="left:20%;top:50%;width:24%;height:12%;background:#ffffff"></b><b style="left:0%;top:40%;width:8%;height:12%;background:#161616"></b></b><b class="k" style="left:93px;top:35.8px;width:58.2px;height:43.2px;background:#fdf6c4"><b class=e style="left:5%;top:22%;width:32%;height:44%;background:#7c4424"></b><b class=e style="left:18%;top:36%;width:16%;height:26%;background:#fbe3d2"></b><b class=r style="left:0%;top:74%;width:40%;height:26%;background:#f0a020"></b><b class=r style="left:44%;top:28%;width:56%;height:38%;background:#e8c078"></b><b style="left:80%;top:64%;width:5%;height:30%;background:#e8c078"></b><b style="left:58%;top:26%;width:12%;height:10%;background:#a8602c"></b><b class=e style="left:40%;top:5%;width:16%;height:26%;background:#ededed"></b><b class=e style="left:72%;top:3%;width:26%;height:58%;background:#ededed"></b><b style="left:40%;top:60%;width:16%;height:20%;background:#ededed"></b></b><b class="k" style="left:93px;top:81.2px;width:58.2px;height:43.2px;background:#161616"><b class=e style="left:6%;top:14%;width:18%;height:16%;background:#ffffff"></b><b class=e style="left:28%;top:0%;width:14%;height:22%;background:#ffffff"></b><b class=e style="left:52%;top:4%;width:26%;height:16%;background:#ffffff"></b><b class=e style="left:82%;top:0%;width:16%;height:26%;background:#ffffff"></b><b class=e style="left:66%;top:22%;width:14%;height:14%;background:#ffffff"></b><b class=e style="left:40%;top:22%;width:16%;height:14%;background:#ffffff"></b><b class=e style="left:4%;top:34%;width:10%;height:12%;background:#ffffff"></b><b class=e style="left:26%;top:84%;width:20%;height:14%;background:#ffffff"></b><b class=e style="left:46%;top:72%;width:16%;height:20%;background:#ffffff"></b><b class=e style="left:86%;top:56%;width:14%;height:18%;background:#ffffff"></b><b class=e style="left:62%;top:60%;width:18%;height:14%;background:#ffffff"></b><b class=e style="left:36%;top:56%;width:12%;height:12%;background:#ffffff"></b><b class=t style="left:12%;top:18%;width:24%;height:82%;background:#f2500c"></b><b class=e style="left:18%;top:32%;width:5%;height:8%;background:#ffffff"></b><b class=e style="left:26%;top:32%;width:5%;height:8%;background:#ffffff"></b><b class=e style="left:38%;top:38%;width:24%;height:32%;background:#f4e050"></b><b style="left:44%;top:46%;width:12%;height:14%;background:#161616"></b><b class=e style="left:70%;top:24%;width:30%;height:52%;background:#c09060"></b><b style="left:0%;top:3%;width:26%;height:12%;background:#ffffff"></b><b style="left:62%;top:78%;width:36%;height:14%;background:#ffffff"></b><b class=e style="left:0%;top:44%;width:20%;height:42%;background:#ffffff"></b></b><b class="k" style="left:93px;top:126.3px;width:58.2px;height:43.2px;background:#161616"><b class=e style="left:6%;top:14%;width:18%;height:16%;background:#ffffff"></b><b class=e style="left:28%;top:0%;width:14%;height:22%;background:#ffffff"></b><b class=e style="left:52%;top:4%;width:26%;height:16%;background:#ffffff"></b><b class=e style="left:82%;top:0%;width:16%;height:26%;background:#ffffff"></b><b class=e style="left:66%;top:22%;width:14%;height:14%;background:#ffffff"></b><b class=e style="left:40%;top:22%;width:16%;height:14%;background:#ffffff"></b><b class=e style="left:4%;top:34%;width:10%;height:12%;background:#ffffff"></b><b class=e style="left:26%;top:84%;width:20%;height:14%;background:#ffffff"></b><b class=e style="left:46%;top:72%;width:16%;height:20%;background:#ffffff"></b><b class=e style="left:86%;top:56%;width:14%;height:18%;background:#ffffff"></b><b class=e style="left:62%;top:60%;width:18%;height:14%;background:#ffffff"></b><b class=e style="left:36%;top:56%;width:12%;height:12%;background:#ffffff"></b><b class=t style="left:12%;top:18%;width:24%;height:82%;background:#f2500c"></b><b class=e style="left:18%;top:32%;width:5%;height:8%;background:#ffffff"></b><b class=e style="left:26%;top:32%;width:5%;height:8%;background:#ffffff"></b><b class=e style="left:38%;top:38%;width:24%;height:32%;background:#f4e050"></b><b style="left:44%;top:46%;width:12%;height:14%;background:#161616"></b><b class=e style="left:70%;top:24%;width:30%;height:52%;background:#c09060"></b><b style="left:0%;top:3%;width:26%;height:12%;background:#ffffff"></b><b style="left:62%;top:78%;width:36%;height:14%;background:#ffffff"></b><b class=e style="left:0%;top:44%;width:20%;height:42%;background:#ffffff"></b></b><b class="k" style="left:93px;top:171.6px;width:58.2px;height:43.2px;background:#fdf6c4"><b class=t style="left:5%;top:10%;width:50%;height:90%;background:#f2500c"></b><b class=e style="left:18%;top:24%;width:8%;height:12%;background:#ffffff"></b><b class=e style="left:32%;top:20%;width:8%;height:12%;background:#ffffff"></b><b class=e style="left:14%;top:50%;width:14%;height:24%;background:#ffffff"></b><b class=e style="left:38%;top:40%;width:24%;height:32%;background:#f4e050"></b><b style="left:44%;top:48%;width:12%;height:14%;background:#161616"></b><b style="left:68%;top:8%;width:32%;height:68%;background:#d8b890"></b><b style="left:72%;top:14%;width:24%;height:56%;background:#ffffff"></b><b style="left:0%;top:3%;width:30%;height:12%;background:#ffffff"></b><b style="left:62%;top:82%;width:32%;height:12%;background:#ffffff"></b><b style="left:56%;top:5%;width:6%;height:40%;background:#f6eeb0"></b></b><i class="g1"></i><i class="g2"></i><i class="g3"></i><i class="t1"></i><i class="t2"></i><i class="t3"></i><i class="t4"></i><i class="c1"></i><i class="c2"></i><i class="c3"></i><i class="c4"></i><i class="c5"></i><i class="c6"></i><i class="c7"></i></div><div class="pn" style="left:213.5px">42</div></div><div class="sp" style="left:1554px;top:1252px"><div class="pg" style="left:18px"><b class="k" style="left:25.7px;top:35.8px;width:58.4px;height:43.2px;background:#c8ecf4"><b class=e style="left:0%;top:30%;width:56%;height:70%;background:#58a8e8"></b><b class=e style="left:0%;top:52%;width:40%;height:20%;background:#ffffff"></b><b class=e style="left:35%;top:5%;width:26%;height:50%;background:#ffffff"></b><b class=e style="left:12%;top:54%;width:24%;height:36%;background:#ffffff"></b><b class=r style="left:60%;top:30%;width:40%;height:70%;background:#7a3a1a"></b><b style="left:58%;top:55%;width:14%;height:45%;background:#fbe3d2"></b><b style="left:64%;top:5%;width:32%;height:16%;background:#ededed"></b><b class=e style="left:18%;top:16%;width:14%;height:16%;background:#f2500c"></b></b><b class="k" style="left:25.7px;top:81.2px;width:58.4px;height:43.2px;background:#c8ecf4"><b class=r style="left:5%;top:5%;width:86%;height:16%;background:#161616"></b><b style="left:0%;top:36%;width:100%;height:40%;background:#58a8e8"></b><b style="left:0%;top:74%;width:100%;height:26%;background:#ffffff"></b><b class=e style="left:10%;top:26%;width:10%;height:12%;background:#f2500c"></b><b class=e style="left:42%;top:26%;width:10%;height:12%;background:#f2500c"></b><b class=e style="left:76%;top:26%;width:10%;height:12%;background:#f2500c"></b><b style="left:20%;top:64%;width:12%;height:36%;background:#7a3a1a"></b><b style="left:52%;top:64%;width:12%;height:36%;background:#7a3a1a"></b><b style="left:88%;top:64%;width:12%;height:36%;background:#7a3a1a"></b><b style="left:33%;top:0%;width:1.5%;height:100%;background:#777777"></b><b style="left:66%;top:0%;width:1.5%;height:100%;background:#777777"></b><b class=e style="left:38%;top:74%;width:12%;height:22%;background:#ededed"></b><b class=e style="left:72%;top:74%;width:12%;height:22%;background:#ededed"></b></b><b class="k" style="left:25.7px;top:126.3px;width:58.4px;height:43.2px;background:#c8ecf4"><b class=e style="left:0%;top:54%;width:72%;height:46%;background:#58a8e8"></b><b class=e style="left:40%;top:40%;width:30%;height:20%;background:#ffffff"></b><b class=e style="left:32%;top:12%;width:20%;height:44%;background:#f2500c"></b><b class=e style="left:36%;top:20%;width:5%;height:7%;background:#ffffff"></b><b class=e style="left:3%;top:15%;width:28%;height:50%;background:#ffffff"></b><b class=e style="left:70%;top:8%;width:10%;height:10%;background:#161616"></b><b class=e style="left:78%;top:22%;width:10%;height:10%;background:#161616"></b><b class=e style="left:72%;top:38%;width:10%;height:10%;background:#161616"></b><b class=e style="left:60%;top:52%;width:10%;height:10%;background:#161616"></b><b class=e style="left:46%;top:62%;width:10%;height:10%;background:#161616"></b><b class=e style="left:30%;top:72%;width:10%;height:10%;background:#161616"></b><b class=e style="left:14%;top:80%;width:10%;height:10%;background:#161616"></b><b class=e style="left:72%;top:64%;width:28%;height:36%;background:#7a3a1a"></b></b><b class="k" style="left:25.7px;top:171.6px;width:58.4px;height:43.2px;background:#fdf6c4"><b class=e style="left:38%;top:14%;width:32%;height:38%;background:#7c4424"></b><b class=e style="left:46%;top:26%;width:16%;height:22%;background:#fbe3d2"></b><b class=r style="left:34%;top:50%;width:40%;height:50%;background:#a89080"></b><b style="left:0%;top:82%;width:100%;height:18%;background:#cccccc"></b><b style="left:3%;top:50%;width:16%;height:40%;background:#ffffff"></b><b style="left:6%;top:56%;width:10%;height:28%;background:#161616"></b><b class=r style="left:70%;top:55%;width:30%;height:30%;background:#ffffff"></b><b class=e style="left:72%;top:5%;width:20%;height:26%;background:#ededed"></b></b><b class="k" style="left:93px;top:35.8px;width:58.2px;height:43.2px;background:#fdf6c4"><b class=r style="left:8%;top:5%;width:78%;height:36%;background:#e9b65a"></b><b style="left:12%;top:40%;width:4%;height:16%;background:#e9b65a"></b><b style="left:80%;top:36%;width:4%;height:20%;background:#e9b65a"></b><b style="left:60%;top:44%;width:4%;height:16%;background:#e9b65a"></b><b class=e style="left:44%;top:16%;width:10%;height:6%;background:#a8602c"></b><b class=e style="left:64%;top:8%;width:8%;height:6%;background:#a8602c"></b><b class=e style="left:35%;top:42%;width:30%;height:34%;background:#7c4424"></b><b class=e style="left:42%;top:56%;width:16%;height:20%;background:#fbe3d2"></b><b class=r style="left:32%;top:80%;width:56%;height:20%;background:#2a6a48"></b><b class=e style="left:3%;top:45%;width:24%;height:50%;background:#ededed"></b><b style="left:84%;top:5%;width:14%;height:32%;background:#ededed"></b><b style="left:0%;top:8%;width:14%;height:6%;background:#ededed"></b></b><b class="k" style="left:93px;top:81.2px;width:58.2px;height:43.2px;background:#fdf6c4"><b class=r style="left:8%;top:5%;width:78%;height:36%;background:#e9b65a"></b><b style="left:12%;top:40%;width:4%;height:16%;background:#e9b65a"></b><b style="left:80%;top:36%;width:4%;height:20%;background:#e9b65a"></b><b style="left:60%;top:44%;width:4%;height:16%;background:#e9b65a"></b><b class=e style="left:44%;top:16%;width:10%;height:6%;background:#a8602c"></b><b class=e style="left:64%;top:8%;width:8%;height:6%;background:#a8602c"></b><b class=e style="left:38%;top:55%;width:28%;height:34%;background:#7c4424"></b><b style="left:30%;top:88%;width:40%;height:12%;background:#2a6a48"></b><b class=e style="left:2%;top:44%;width:22%;height:54%;background:#ededed"></b><b style="left:0%;top:8%;width:22%;height:6%;background:#ededed"></b></b><b class="k" style="left:93px;top:126.3px;width:58.2px;height:43.2px;background:#fdf6c4"><b class=r style="left:8%;top:5%;width:78%;height:36%;background:#e9b65a"></b><b style="left:12%;top:40%;width:4%;height:16%;background:#e9b65a"></b><b style="left:80%;top:36%;width:4%;height:20%;background:#e9b65a"></b><b style="left:60%;top:44%;width:4%;height:16%;background:#e9b65a"></b><b class=e style="left:44%;top:16%;width:10%;height:6%;background:#a8602c"></b><b class=e style="left:64%;top:8%;width:8%;height:6%;background:#a8602c"></b><b class=e style="left:72%;top:54%;width:28%;height:46%;background:#7c4424"></b><b style="left:74%;top:76%;width:12%;height:20%;background:#fbe3d2"></b><b class=e style="left:12%;top:55%;width:24%;height:42%;background:#ededed"></b><b style="left:0%;top:8%;width:22%;height:6%;background:#ededed"></b></b><b class="k" style="left:93px;top:171.6px;width:58.2px;height:43.2px;background:#fdf6c4"><b class=t style="left:22%;top:44%;width:24%;height:56%;background:#f2500c"></b><b class=r style="left:44%;top:30%;width:22%;height:70%;background:#1a2860"></b><b class=e style="left:48%;top:10%;width:14%;height:22%;background:#7c4424"></b><b class=e style="left:50%;top:20%;width:8%;height:12%;background:#fbe3d2"></b><b class=e style="left:75%;top:3%;width:24%;height:58%;background:#ededed"></b><b style="left:3%;top:5%;width:20%;height:46%;background:#ededed"></b><b style="left:6%;top:10%;width:10%;height:30%;background:#161616"></b></b><i class="g1"></i><i class="g2"></i><i class="g3"></i><i class="t1"></i><i class="t2"></i><i class="t3"></i><i class="t4"></i><i class="c1"></i><i class="c2"></i><i class="c3"></i><i class="c4"></i><i class="c5"></i><i class="c6"></i><i class="c7"></i></div><div class="pn" style="left:18px">41</div><div class="pg" style="left:213.5px"><b class="k" style="left:93px;top:35.8px;width:58.2px;height:43.2px;background:#fdf6c4"><b style="left:25%;top:0%;width:75%;height:55%;background:#e9b65a"></b><b class=e style="left:25%;top:30%;width:30%;height:30%;background:#fdf6c4"></b><b class=e style="left:32%;top:3%;width:20%;height:42%;background:#ededed"></b><b class=e style="left:78%;top:3%;width:18%;height:44%;background:#ededed"></b><b style="left:2%;top:55%;width:18%;height:43%;background:#ffffff"></b><b style="left:6%;top:60%;width:10%;height:32%;background:#161616"></b><b class=e style="left:20%;top:55%;width:16%;height:30%;background:#7c4424"></b><b style="left:28%;top:72%;width:12%;height:24%;background:#fbe3d2"></b><b style="left:62%;top:24%;width:8%;height:18%;background:#f2500c"></b><b style="left:52%;top:42%;width:10%;height:8%;background:#35a035"></b></b><b class="k" style="left:93px;top:81.2px;width:58.2px;height:43.2px;background:#fdf6c4"><b style="left:0%;top:60%;width:70%;height:40%;background:#e9b65a"></b><b class=e style="left:62%;top:12%;width:22%;height:34%;background:#7c4424"></b><b class=e style="left:64%;top:24%;width:12%;height:20%;background:#fbe3d2"></b><b class=r style="left:55%;top:45%;width:42%;height:55%;background:#c8b8a8"></b><b class=e style="left:5%;top:40%;width:18%;height:36%;background:#ededed"></b><b class=e style="left:25%;top:3%;width:16%;height:38%;background:#ededed"></b><b class=e style="left:42%;top:5%;width:16%;height:30%;background:#ededed"></b><b style="left:30%;top:62%;width:8%;height:18%;background:#f2500c"></b><b style="left:36%;top:74%;width:8%;height:8%;background:#35a035"></b><b style="left:5%;top:80%;width:10%;height:16%;background:#ededed"></b></b><b class="k" style="left:93px;top:126.3px;width:58.2px;height:43.2px;background:#fdf6c4"><b class=e style="left:12%;top:25%;width:74%;height:50%;background:#a8602c"></b><b class=r style="left:30%;top:28%;width:46%;height:18%;background:#e04818"></b><b class=e style="left:26%;top:46%;width:10%;height:12%;background:#dc1f1f"></b></b><b class="k" style="left:93px;top:171.6px;width:58.2px;height:43.2px;background:#ffffff"><b style="left:0%;top:0%;width:50%;height:50%;background:#cccccc"></b><b class=r style="left:55%;top:0%;width:45%;height:52%;background:#7c4424"></b><b class=e style="left:62%;top:24%;width:32%;height:46%;background:#fbe3d2"></b><b class=r style="left:40%;top:50%;width:60%;height:36%;background:#c8b8a8"></b><b class=r style="left:0%;top:72%;width:100%;height:28%;background:#b87040"></b><b class=r style="left:5%;top:70%;width:26%;height:12%;background:#e04818"></b><b style="left:22%;top:5%;width:12%;height:60%;background:#161616"></b><b style="left:6%;top:8%;width:12%;height:40%;background:#ffffff"></b></b><i class="g1"></i><i class="g2"></i><i class="g3"></i><i class="t1"></i><i class="t2"></i><i class="t3"></i><i class="t4"></i><i class="c1"></i><i class="c2"></i><i class="c3"></i><i class="c4"></i><i class="c5"></i><i class="c6"></i><i class="c7"></i></div><div class="pn" style="left:213.5px">40</div></div><div class="sp" style="left:1986px;top:1252px"><div class="pg" style="left:18px"><b class="k" style="left:25.7px;top:35.8px;width:58.4px;height:43.2px;background:#fdf6c4"><b style="left:3%;top:68%;width:88%;height:32%;background:#e9b65a"></b><b class=r style="left:52%;top:10%;width:16%;height:30%;background:#7c4424"></b><b class=e style="left:54%;top:18%;width:10%;height:14%;background:#fbe3d2"></b><b class=r style="left:50%;top:36%;width:28%;height:34%;background:#ffffff"></b><b class=e style="left:3%;top:8%;width:24%;height:44%;background:#ededed"></b><b class=e style="left:78%;top:3%;width:20%;height:38%;background:#ededed"></b><b class=e style="left:32%;top:42%;width:10%;height:20%;background:#ffffff"></b><b style="left:28%;top:60%;width:8%;height:14%;background:#f2500c"></b><b style="left:32%;top:70%;width:14%;height:6%;background:#35a035"></b></b><b class="k" style="left:25.7px;top:81.2px;width:58.4px;height:43.2px;background:#fdf6c4"><b style="left:0%;top:0%;width:26%;height:56%;background:#cccccc"></b><b class=r style="left:22%;top:5%;width:32%;height:52%;background:#7c4424"></b><b class=e style="left:28%;top:24%;width:18%;height:32%;background:#fbe3d2"></b><b class=r style="left:18%;top:50%;width:38%;height:50%;background:#ffffff"></b><b style="left:32%;top:60%;width:10%;height:40%;background:#1d2c6a"></b><b class=t style="left:0%;top:40%;width:18%;height:60%;background:#f2500c"></b><b class=r style="left:60%;top:3%;width:38%;height:92%;background:#ffffff"></b><b style="left:70%;top:58%;width:16%;height:14%;background:#161616"></b><b style="left:72%;top:24%;width:10%;height:14%;background:#f2500c"></b></b><b class="k" style="left:25.7px;top:126.3px;width:58.4px;height:43.2px;background:#fdf6c4"><b class=e style="left:28%;top:22%;width:34%;height:54%;background:#e8c070"></b><b style="left:40%;top:18%;width:8%;height:14%;background:#f2500c"></b><b class=r style="left:62%;top:22%;width:26%;height:54%;background:#7c4424"></b><b class=e style="left:58%;top:38%;width:14%;height:24%;background:#fbe3d2"></b><b class=e style="left:5%;top:45%;width:30%;height:50%;background:#ededed"></b><b style="left:78%;top:3%;width:20%;height:58%;background:#ededed"></b><b class=r style="left:32%;top:3%;width:38%;height:16%;background:#161616"></b><b style="left:36%;top:6%;width:30%;height:9%;background:#ffffff"></b><b class=r style="left:50%;top:66%;width:46%;height:28%;background:#161616"></b><b style="left:54%;top:70%;width:38%;height:18%;background:#ffffff"></b><b style="left:40%;top:80%;width:14%;height:20%;background:#ffffff"></b></b><b class="k" style="left:25.7px;top:171.6px;width:58.4px;height:43.2px;background:#fdf6c4"><b class=t style="left:55%;top:5%;width:30%;height:95%;background:#f2500c"></b><b class=e style="left:50%;top:50%;width:14%;height:40%;background:#f2500c"></b><b class=e style="left:5%;top:3%;width:18%;height:42%;background:#ededed"></b><b class=e style="left:42%;top:5%;width:16%;height:36%;background:#ededed"></b><b class=e style="left:85%;top:5%;width:13%;height:20%;background:#ededed"></b><b style="left:3%;top:40%;width:10%;height:50%;background:#ededed"></b><b style="left:28%;top:45%;width:14%;height:36%;background:#ededed"></b><b style="left:82%;top:80%;width:10%;height:14%;background:#dc1f1f"></b><b style="left:5%;top:26%;width:10%;height:6%;background:#161616"></b></b><b class="k" style="left:93px;top:35.8px;width:58.2px;height:43.2px;background:#dcdcca"><b class=r style="left:0%;top:64%;width:100%;height:36%;background:#9a9a9a"></b><b class=r style="left:50%;top:30%;width:46%;height:36%;background:#ffffff"></b><b class=e style="left:30%;top:28%;width:46%;height:42%;background:#7c4424"></b><b class=e style="left:44%;top:42%;width:22%;height:22%;background:#fbe3d2"></b><b style="left:82%;top:5%;width:16%;height:26%;background:#ededed"></b><b style="left:18%;top:3%;width:32%;height:22%;background:#d8e8b8"></b><b style="left:3%;top:10%;width:18%;height:40%;background:#ededed"></b></b><b class="k" style="left:93px;top:81.2px;width:58.2px;height:43.2px;background:#f6f6f2"><b style="left:0%;top:0%;width:100%;height:100%;background:#fdf6c4"></b><b class=e style="left:5%;top:5%;width:40%;height:50%;background:#ffffff"></b><b class=r style="left:50%;top:10%;width:46%;height:80%;background:#ffffff"></b><b class=t style="left:25%;top:28%;width:10%;height:18%;background:#f2500c"></b><b class=t style="left:48%;top:42%;width:8%;height:14%;background:#f2500c"></b><b style="left:70%;top:5%;width:26%;height:40%;background:#ededed"></b><b class=e style="left:5%;top:62%;width:20%;height:38%;background:#7c4424"></b><b style="left:0%;top:76%;width:16%;height:24%;background:#9a9a9a"></b></b><b class="k" style="left:93px;top:126.3px;width:58.2px;height:43.2px;background:#fdf6c4"><b style="left:30%;top:0%;width:56%;height:40%;background:#cccccc"></b><b class=r style="left:22%;top:42%;width:78%;height:58%;background:#f2500c"></b><b class=t style="left:30%;top:34%;width:14%;height:30%;background:#f2500c"></b><b class=t style="left:50%;top:34%;width:14%;height:30%;background:#f2500c"></b><b class=t style="left:72%;top:34%;width:14%;height:30%;background:#f2500c"></b><b class=e style="left:36%;top:50%;width:4%;height:6%;background:#ffffff"></b><b class=e style="left:56%;top:50%;width:4%;height:6%;background:#ffffff"></b><b class=e style="left:78%;top:50%;width:4%;height:6%;background:#ffffff"></b><b class=e style="left:44%;top:70%;width:4%;height:6%;background:#ffffff"></b><b class=e style="left:66%;top:70%;width:4%;height:6%;background:#ffffff"></b><b class=e style="left:5%;top:10%;width:10%;height:14%;background:#161616"></b><b style="left:6%;top:24%;width:12%;height:16%;background:#dc1f1f"></b><b class=e style="left:0%;top:65%;width:24%;height:35%;background:#7c4424"></b><b class=e style="left:85%;top:10%;width:14%;height:30%;background:#ededed"></b><b class=e style="left:15%;top:40%;width:12%;height:20%;background:#ededed"></b></b><b class="k" style="left:93px;top:171.6px;width:58.2px;height:43.2px;background:#fdf6c4"><b class=r style="left:0%;top:0%;width:62%;height:100%;background:#7c4424"></b><b class=e style="left:10%;top:26%;width:36%;height:46%;background:#fbe3d2"></b><b class=r style="left:62%;top:3%;width:38%;height:74%;background:#ffffff"></b><b style="left:72%;top:10%;width:14%;height:56%;background:#161616"></b><b style="left:0%;top:86%;width:100%;height:14%;background:#cccccc"></b><b style="left:18%;top:74%;width:30%;height:10%;background:#161616"></b><b style="left:30%;top:80%;width:10%;height:12%;background:#f0c8ea"></b></b><i class="g1"></i><i class="g2"></i><i class="g3"></i><i class="t1"></i><i class="t2"></i><i class="t3"></i><i class="t4"></i><i class="c1"></i><i class="c2"></i><i class="c3"></i><i class="c4"></i><i class="c5"></i><i class="c6"></i><i class="c7"></i></div><div class="pn" style="left:18px">39</div><div class="pg" style="left:213.5px"><b class="k" style="left:25.7px;top:35.8px;width:58.4px;height:43.2px;background:#fdf6c4"><b class=e style="left:22%;top:25%;width:56%;height:54%;background:#ffffff"></b><b class=e style="left:28%;top:30%;width:44%;height:40%;background:#c07038"></b><b class=r style="left:25%;top:5%;width:42%;height:18%;background:#161616"></b><b class=r style="left:30%;top:78%;width:56%;height:18%;background:#161616"></b><b style="left:78%;top:3%;width:16%;height:58%;background:#ededed"></b><b style="left:3%;top:8%;width:14%;height:40%;background:#ededed"></b><b style="left:26%;top:50%;width:50%;height:10%;background:#ffffff"></b></b><b class="k" style="left:25.7px;top:81.2px;width:58.4px;height:43.2px;background:#fdf6c4"><b style="left:12%;top:75%;width:88%;height:25%;background:#e9b65a"></b><b class=e style="left:32%;top:3%;width:18%;height:26%;background:#7c4424"></b><b class=e style="left:36%;top:14%;width:10%;height:14%;background:#fbe3d2"></b><b class=r style="left:28%;top:26%;width:30%;height:50%;background:#ffffff"></b><b class=e style="left:2%;top:10%;width:20%;height:56%;background:#ededed"></b><b class=e style="left:64%;top:3%;width:28%;height:68%;background:#ededed"></b><b style="left:48%;top:68%;width:8%;height:12%;background:#f2500c"></b><b style="left:34%;top:72%;width:10%;height:6%;background:#ffffff"></b></b><b class="k" style="left:25.7px;top:126.3px;width:58.4px;height:43.2px;background:#888"><b class=t style="left:0%;top:8%;width:42%;height:92%;background:#f2500c"></b><b class=e style="left:8%;top:30%;width:8%;height:14%;background:#ffffff"></b><b class=e style="left:24%;top:30%;width:8%;height:14%;background:#ffffff"></b><b class=r style="left:54%;top:0%;width:46%;height:100%;background:#ffffff"></b><b style="left:62%;top:10%;width:12%;height:76%;background:#161616"></b><b style="left:80%;top:10%;width:12%;height:62%;background:#161616"></b></b><b class="k" style="left:25.7px;top:171.6px;width:58.4px;height:43.2px;background:#fdf6c4"><b class=e style="left:0%;top:35%;width:56%;height:65%;background:#e9b65a"></b><b style="left:22%;top:44%;width:10%;height:8%;background:#f2500c"></b><b class=e style="left:50%;top:12%;width:18%;height:30%;background:#7c4424"></b><b class=r style="left:45%;top:38%;width:30%;height:62%;background:#ffffff"></b><b class=e style="left:3%;top:5%;width:18%;height:30%;background:#ededed"></b><b style="left:80%;top:8%;width:14%;height:68%;background:#161616"></b><b class=e style="left:46%;top:66%;width:14%;height:24%;background:#ededed"></b></b><b class="k" style="left:93px;top:35.8px;width:58.2px;height:43.2px;background:#f0928a"><b style="left:0%;top:0%;width:70%;height:40%;background:#f4a8a0"></b><b class=r style="left:0%;top:44%;width:70%;height:42%;background:#cccccc"></b><b style="left:4%;top:50%;width:62%;height:14%;background:#ffffff"></b><b style="left:0%;top:86%;width:100%;height:14%;background:#f0928a"></b><b style="left:72%;top:5%;width:26%;height:46%;background:#ededed"></b><b class=e style="left:80%;top:56%;width:14%;height:24%;background:#ededed"></b><b class=e style="left:62%;top:44%;width:8%;height:10%;background:#7c4424"></b><b style="left:6%;top:24%;width:14%;height:16%;background:#ededed"></b></b><b class="k" style="left:93px;top:81.2px;width:58.2px;height:43.2px;background:#fdf6c4"><b class=r style="left:5%;top:24%;width:56%;height:32%;background:#ffffff"></b><b class=r style="left:0%;top:44%;width:76%;height:56%;background:#cccccc"></b><b class=r style="left:20%;top:20%;width:24%;height:46%;background:#7c4424"></b><b class=e style="left:36%;top:34%;width:12%;height:16%;background:#fbe3d2"></b><b style="left:3%;top:40%;width:10%;height:16%;background:#161616"></b><b class=e style="left:68%;top:5%;width:28%;height:66%;background:#ededed"></b></b><b class="k" style="left:93px;top:126.3px;width:58.2px;height:43.2px;background:#fdf6c4"><b class=e style="left:0%;top:30%;width:32%;height:42%;background:#cccccc"></b><b class=r style="left:38%;top:8%;width:62%;height:54%;background:#7c4424"></b><b class=e style="left:34%;top:30%;width:32%;height:46%;background:#fbe3d2"></b><b style="left:60%;top:56%;width:40%;height:44%;background:#444444"></b><b style="left:76%;top:3%;width:22%;height:48%;background:#ededed"></b><b style="left:8%;top:60%;width:7%;height:36%;background:#161616"></b><b class=e style="left:24%;top:66%;width:40%;height:30%;background:#fbe3d2"></b></b><b class="k" style="left:93px;top:171.6px;width:58.2px;height:43.2px;background:#fdf6c4"><b class=r style="left:30%;top:14%;width:36%;height:86%;background:#f2500c"></b><b class=r style="left:20%;top:0%;width:72%;height:100%;background:#7c4424"></b><b class=e style="left:34%;top:22%;width:22%;height:50%;background:#f2500c"></b><b style="left:28%;top:78%;width:30%;height:22%;background:#f2500c"></b><b style="left:2%;top:5%;width:20%;height:46%;background:#ededed"></b><b class=e style="left:75%;top:3%;width:23%;height:48%;background:#ededed"></b><b style="left:84%;top:56%;width:12%;height:20%;background:#ededed"></b></b><i class="g1"></i><i class="g2"></i><i class="g3"></i><i class="t1"></i><i class="t2"></i><i class="t3"></i><i class="t4"></i><i class="c1"></i><i class="c2"></i><i class="c3"></i><i class="c4"></i><i class="c5"></i><i class="c6"></i><i class="c7"></i></div><div class="pn" style="left:213.5px">38</div></div><div class="sp" style="left:2418px;top:1252px"><div class="pg" style="left:18px"><b class="k" style="left:25.7px;top:35.8px;width:58.4px;height:43.2px;background:#fdf6c4"><b class=e style="left:28%;top:5%;width:30%;height:46%;background:#7c4424"></b><b class=e style="left:34%;top:24%;width:18%;height:30%;background:#fbe3d2"></b><b class=r style="left:14%;top:60%;width:56%;height:40%;background:#cccccc"></b><b class=e style="left:3%;top:34%;width:16%;height:42%;background:#ededed"></b><b class=e style="left:75%;top:5%;width:23%;height:62%;background:#ededed"></b><b class=e style="left:8%;top:52%;width:5%;height:5%;background:#dc1f1f"></b></b><b class="k" style="left:25.7px;top:81.2px;width:58.4px;height:43.2px;background:#fdf6c4"><b class=r style="left:22%;top:20%;width:34%;height:50%;background:#e9b65a"></b><b style="left:36%;top:30%;width:6%;height:12%;background:#f2500c"></b><b style="left:40%;top:40%;width:8%;height:8%;background:#35a035"></b><b class=e style="left:70%;top:34%;width:30%;height:48%;background:#7c4424"></b><b class=e style="left:72%;top:60%;width:18%;height:30%;background:#fbe3d2"></b><b class=e style="left:50%;top:5%;width:18%;height:62%;background:#ededed"></b><b class=e style="left:78%;top:3%;width:14%;height:26%;background:#ededed"></b><b class=e style="left:25%;top:60%;width:22%;height:30%;background:#ededed"></b><b style="left:0%;top:10%;width:12%;height:86%;background:#ffffff"></b><b style="left:3%;top:16%;width:7%;height:72%;background:#161616"></b></b><b class="k" style="left:25.7px;top:126.3px;width:58.4px;height:43.2px;background:#fdf6c4"><b style="left:0%;top:70%;width:100%;height:30%;background:#e9b65a"></b><b class=e style="left:20%;top:0%;width:28%;height:30%;background:#7c4424"></b><b class=r style="left:10%;top:24%;width:42%;height:60%;background:#cccccc"></b><b class=t style="left:58%;top:30%;width:18%;height:70%;background:#f2500c"></b><b class=e style="left:62%;top:40%;width:4%;height:6%;background:#ffffff"></b><b class=r style="left:42%;top:74%;width:22%;height:26%;background:#a8e064"></b><b style="left:80%;top:3%;width:18%;height:58%;background:#ededed"></b><b class=e style="left:28%;top:76%;width:14%;height:20%;background:#ffffff"></b><b style="left:78%;top:90%;width:10%;height:10%;background:#dc1f1f"></b></b><b class="k" style="left:25.7px;top:171.6px;width:58.4px;height:43.2px;background:#fdf6c4"><b class=t style="left:30%;top:12%;width:40%;height:88%;background:#f2500c"></b><b class=e style="left:38%;top:30%;width:8%;height:12%;background:#ffffff"></b><b class=e style="left:54%;top:30%;width:8%;height:12%;background:#ffffff"></b><b class=r style="left:75%;top:0%;width:25%;height:92%;background:#ffffff"></b><b style="left:82%;top:8%;width:10%;height:70%;background:#161616"></b><b class=e style="left:0%;top:5%;width:28%;height:72%;background:#ededed"></b><b style="left:66%;top:22%;width:6%;height:14%;background:#a8e064"></b></b><b class="k" style="left:93px;top:35.8px;width:58.2px;height:43.2px;background:#fdf6c4"><b style="left:35%;top:32%;width:34%;height:22%;background:#e9b65a"></b><b style="left:38%;top:54%;width:4%;height:12%;background:#e9b65a"></b><b style="left:64%;top:54%;width:4%;height:12%;background:#e9b65a"></b><b class=e style="left:3%;top:60%;width:46%;height:40%;background:#7c4424"></b><b style="left:10%;top:3%;width:22%;height:52%;background:#ededed"></b><b class=e style="left:42%;top:3%;width:16%;height:32%;background:#ededed"></b><b style="left:75%;top:5%;width:22%;height:56%;background:#ededed"></b><b class=e style="left:52%;top:60%;width:14%;height:36%;background:#ededed"></b><b style="left:70%;top:56%;width:16%;height:24%;background:#ededed"></b><b style="left:56%;top:26%;width:10%;height:8%;background:#a8602c"></b></b><b class="k" style="left:93px;top:81.2px;width:58.2px;height:43.2px;background:#ffffff"><b style="left:0%;top:0%;width:46%;height:100%;background:#c8c4d4"></b><b class=e style="left:10%;top:5%;width:22%;height:36%;background:#ededed"></b><b style="left:3%;top:45%;width:28%;height:46%;background:#ededed"></b><b class=r style="left:45%;top:0%;width:32%;height:46%;background:#7c4424"></b><b class=e style="left:52%;top:20%;width:20%;height:36%;background:#fbe3d2"></b><b class=r style="left:32%;top:65%;width:68%;height:35%;background:#f0a020"></b><b style="left:40%;top:68%;width:5%;height:32%;background:#161616"></b><b style="left:88%;top:68%;width:5%;height:32%;background:#161616"></b><b style="left:80%;top:5%;width:18%;height:56%;background:#ededed"></b></b><b class="k" style="left:93px;top:126.3px;width:58.2px;height:43.2px;background:#fdf6c4"><b style="left:0%;top:74%;width:100%;height:26%;background:#e9b65a"></b><b class=t style="left:48%;top:12%;width:22%;height:58%;background:#f2500c"></b><b class=e style="left:54%;top:24%;width:5%;height:8%;background:#ffffff"></b><b class=e style="left:62%;top:24%;width:5%;height:8%;background:#ffffff"></b><b class=r style="left:38%;top:44%;width:26%;height:46%;background:#a8e064"></b><b class=e style="left:72%;top:54%;width:10%;height:12%;background:#dc1f1f"></b><b class=e style="left:25%;top:5%;width:24%;height:42%;background:#ededed"></b><b class=e style="left:78%;top:3%;width:20%;height:58%;background:#ededed"></b><b style="left:3%;top:25%;width:20%;height:60%;background:#ededed"></b><b class=e style="left:30%;top:62%;width:10%;height:16%;background:#ffffff"></b></b><b class="k" style="left:93px;top:171.6px;width:58.2px;height:43.2px;background:#fdf6c4"><b class=t style="left:42%;top:8%;width:38%;height:92%;background:#f2500c"></b><b class=e style="left:56%;top:22%;width:7%;height:12%;background:#ffffff"></b><b class=e style="left:68%;top:26%;width:7%;height:12%;background:#ffffff"></b><b class=r style="left:10%;top:25%;width:32%;height:75%;background:#80c048"></b><b class=e style="left:15%;top:3%;width:16%;height:22%;background:#ffffff"></b><b style="left:82%;top:10%;width:18%;height:80%;background:#ffffff"></b><b style="left:86%;top:16%;width:10%;height:66%;background:#161616"></b><b style="left:3%;top:35%;width:15%;height:63%;background:#ffffff"></b><b style="left:6%;top:40%;width:9%;height:54%;background:#161616"></b></b><i class="g1"></i><i class="g2"></i><i class="g3"></i><i class="t1"></i><i class="t2"></i><i class="t3"></i><i class="t4"></i><i class="c1"></i><i class="c2"></i><i class="c3"></i><i class="c4"></i><i class="c5"></i><i class="c6"></i><i class="c7"></i></div><div class="pn" style="left:18px">37</div><div class="pg" style="left:213.5px"><b class="k" style="left:25.7px;top:35.8px;width:58.4px;height:43.2px;background:#fdf6c4"><b class=r style="left:45%;top:30%;width:36%;height:26%;background:#e9b65a"></b><b style="left:50%;top:56%;width:4%;height:20%;background:#e9b65a"></b><b style="left:76%;top:50%;width:4%;height:20%;background:#e9b65a"></b><b class=e style="left:58%;top:34%;width:10%;height:8%;background:#161616"></b><b class=e style="left:22%;top:34%;width:24%;height:32%;background:#7c4424"></b><b class=r style="left:10%;top:62%;width:42%;height:38%;background:#1a2860"></b><b style="left:26%;top:72%;width:12%;height:16%;background:#ffffff"></b><b class=e style="left:3%;top:5%;width:20%;height:52%;background:#ededed"></b><b class=e style="left:68%;top:3%;width:20%;height:44%;background:#ededed"></b></b><b class="k" style="left:25.7px;top:81.2px;width:58.4px;height:43.2px;background:#f0928a"><b style="left:3%;top:10%;width:20%;height:86%;background:#ededed"></b><b class=e style="left:38%;top:44%;width:34%;height:52%;background:#ffffff"></b><b style="left:75%;top:3%;width:23%;height:58%;background:#ededed"></b><b class=e style="left:28%;top:5%;width:16%;height:30%;background:#ededed"></b><b class=e style="left:50%;top:8%;width:14%;height:26%;background:#ededed"></b><b style="left:24%;top:0%;width:3%;height:100%;background:#f0928a"></b><b style="left:60%;top:70%;width:6%;height:8%;background:#dc1f1f"></b></b><b class="k" style="left:25.7px;top:126.3px;width:58.4px;height:43.2px;background:#f0928a"><b style="left:0%;top:0%;width:28%;height:100%;background:#fdf6c4"></b><b class=e style="left:0%;top:5%;width:26%;height:46%;background:#7c4424"></b><b class=e style="left:5%;top:30%;width:22%;height:40%;background:#fbe3d2"></b><b class=e style="left:52%;top:34%;width:24%;height:38%;background:#7c4424"></b><b class=r style="left:45%;top:70%;width:42%;height:30%;background:#1a2860"></b><b style="left:48%;top:60%;width:10%;height:16%;background:#fbe3d2"></b><b style="left:78%;top:3%;width:20%;height:48%;background:#ededed"></b><b class=e style="left:30%;top:55%;width:20%;height:42%;background:#ededed"></b><b style="left:0%;top:50%;width:10%;height:20%;background:#161616"></b><b style="left:40%;top:5%;width:8%;height:40%;background:#ededed"></b></b><b class="k" style="left:25.7px;top:171.6px;width:58.4px;height:43.2px;background:#fdf6c4"><b class=r style="left:38%;top:35%;width:40%;height:50%;background:#e9b65a"></b><b class=e style="left:52%;top:44%;width:10%;height:8%;background:#161616"></b><b class=e style="left:28%;top:62%;width:24%;height:38%;background:#7c4424"></b><b style="left:3%;top:5%;width:26%;height:56%;background:#ededed"></b><b style="left:80%;top:3%;width:16%;height:54%;background:#161616"></b><b class=e style="left:40%;top:3%;width:12%;height:16%;background:#7c4424"></b><b style="left:38%;top:18%;width:16%;height:20%;background:#ffffff"></b><b style="left:58%;top:84%;width:8%;height:12%;background:#ffffff"></b></b><b class="k" style="left:93px;top:35.8px;width:58.2px;height:43.2px;background:#fdf6c4"><b style="left:22%;top:0%;width:40%;height:62%;background:#f0928a"></b><b style="left:45%;top:5%;width:10%;height:56%;background:#ffffff"></b><b style="left:46%;top:8%;width:3%;height:14%;background:#161616"></b><b class=e style="left:68%;top:30%;width:26%;height:28%;background:#7c4424"></b><b class=e style="left:66%;top:44%;width:10%;height:16%;background:#fbe3d2"></b><b class=r style="left:58%;top:50%;width:40%;height:50%;background:#1a2860"></b><b style="left:2%;top:45%;width:18%;height:53%;background:#ffffff"></b><b style="left:5%;top:50%;width:10%;height:44%;background:#161616"></b><b class=e style="left:20%;top:55%;width:36%;height:45%;background:#ffffff"></b></b><b class="k" style="left:93px;top:81.2px;width:58.2px;height:43.2px;background:#f6f6f2"><b class=r style="left:10%;top:5%;width:36%;height:30%;background:#161616"></b><b class=e style="left:38%;top:5%;width:36%;height:42%;background:#7c4424"></b><b class=e style="left:45%;top:24%;width:18%;height:26%;background:#fbe3d2"></b><b class=r style="left:22%;top:45%;width:58%;height:55%;background:#1a2860"></b><b class=r style="left:55%;top:50%;width:20%;height:36%;background:#ffffff"></b><b class=r style="left:66%;top:64%;width:32%;height:30%;background:#161616"></b><b style="left:80%;top:3%;width:18%;height:48%;background:#ededed"></b><b style="left:3%;top:40%;width:12%;height:56%;background:#ededed"></b><b style="left:40%;top:70%;width:10%;height:20%;background:#161616"></b></b><b class="k" style="left:93px;top:126.3px;width:58.2px;height:43.2px;background:#fdf6c4"><b style="left:0%;top:0%;width:62%;height:100%;background:#f0928a"></b><b class=r style="left:3%;top:28%;width:26%;height:68%;background:#ffffff"></b><b style="left:8%;top:36%;width:16%;height:52%;background:#161616"></b><b class=e style="left:32%;top:12%;width:14%;height:24%;background:#7c4424"></b><b class=r style="left:32%;top:32%;width:18%;height:34%;background:#1a2860"></b><b style="left:38%;top:64%;width:12%;height:36%;background:#60b0e0"></b><b class=t style="left:68%;top:40%;width:32%;height:60%;background:#f2500c"></b><b class=e style="left:76%;top:3%;width:20%;height:36%;background:#ededed"></b><b style="left:56%;top:0%;width:4%;height:100%;background:#ffffff"></b></b><b class="k" style="left:93px;top:171.6px;width:58.2px;height:43.2px;background:#fdf6c4"><b class=t style="left:35%;top:12%;width:28%;height:88%;background:#f2500c"></b><b class=e style="left:42%;top:28%;width:6%;height:10%;background:#ffffff"></b><b class=e style="left:52%;top:28%;width:6%;height:10%;background:#ffffff"></b><b class=e style="left:8%;top:5%;width:22%;height:36%;background:#ededed"></b><b class=e style="left:68%;top:5%;width:24%;height:30%;background:#ededed"></b><b class=e style="left:70%;top:30%;width:26%;height:30%;background:#ededed"></b><b class=e style="left:75%;top:60%;width:18%;height:26%;background:#ededed"></b><b class=r style="left:5%;top:40%;width:22%;height:40%;background:#ffffff"></b><b style="left:10%;top:46%;width:12%;height:28%;background:#161616"></b><b style="left:10%;top:84%;width:8%;height:10%;background:#ffffff"></b></b><i class="g1"></i><i class="g2"></i><i class="g3"></i><i class="t1"></i><i class="t2"></i><i class="t3"></i><i class="t4"></i><i class="c1"></i><i class="c2"></i><i class="c3"></i><i class="c4"></i><i class="c5"></i><i class="c6"></i><i class="c7"></i></div><div class="pn" style="left:213.5px">36</div></div><div class="sp" style="left:690px;top:1602px"><div style="left:10px;top:4px;width:192px;height:318px;background:#60708d;border-radius:4px"></div><div class="pg" style="left:18px"><b class="k" style="left:25.7px;top:35.8px;width:58.4px;height:43.2px;background:#fdf6c4"><b class=e style="left:15%;top:5%;width:26%;height:22%;background:#9a9a9a"></b><b class=e style="left:22%;top:28%;width:20%;height:14%;background:#cccccc"></b><b class=e style="left:45%;top:5%;width:42%;height:46%;background:#ededed"></b><b class=e style="left:2%;top:55%;width:24%;height:36%;background:#ffffff"></b><b class=e style="left:28%;top:58%;width:24%;height:20%;background:#ffffff"></b><b class=e style="left:56%;top:56%;width:18%;height:22%;background:#ffffff"></b><b style="left:70%;top:78%;width:18%;height:12%;background:#ededed"></b><b style="left:30%;top:86%;width:60%;height:10%;background:#ededed"></b><b style="left:14%;top:84%;width:6%;height:8%;background:#dc1f1f"></b><b class=e style="left:20%;top:40%;width:10%;height:10%;background:#ffffff"></b></b><b class="k" style="left:25.7px;top:81.2px;width:58.4px;height:43.2px;background:#fdf6c4"><b class=r style="left:0%;top:0%;width:36%;height:30%;background:#f4e050"></b><b class=e style="left:28%;top:10%;width:26%;height:42%;background:#f2500c"></b><b class=e style="left:10%;top:30%;width:8%;height:8%;background:#dc1f1f"></b><b class=r style="left:65%;top:0%;width:24%;height:46%;background:#ffffff"></b><b class=e style="left:72%;top:0%;width:14%;height:16%;background:#7c4424"></b><b class=t style="left:68%;top:36%;width:32%;height:64%;background:#f2500c"></b><b class=e style="left:74%;top:52%;width:6%;height:8%;background:#ffffff"></b><b class=e style="left:86%;top:52%;width:6%;height:8%;background:#ffffff"></b><b class=r style="left:0%;top:46%;width:40%;height:54%;background:#161616"></b><b class=e style="left:6%;top:56%;width:26%;height:34%;background:#ffffff"></b><b class=e style="left:42%;top:45%;width:26%;height:50%;background:#ffffff"></b></b><b class="k" style="left:25.7px;top:126.3px;width:58.4px;height:43.2px;background:#fdf6c4"><b class=r style="left:5%;top:35%;width:42%;height:60%;background:#e86020"></b><b style="left:50%;top:0%;width:50%;height:100%;background:#f6eeb0"></b><b class=e style="left:58%;top:40%;width:28%;height:26%;background:#cccccc"></b><b class=r style="left:50%;top:3%;width:46%;height:22%;background:#161616"></b><b style="left:5%;top:8%;width:20%;height:26%;background:#ededed"></b><b style="left:20%;top:5%;width:26%;height:14%;background:#f0a020"></b><b class=r style="left:4%;top:80%;width:24%;height:14%;background:#161616"></b><b style="left:62%;top:70%;width:34%;height:10%;background:#d8d8a8"></b></b><b class="k" style="left:25.7px;top:171.6px;width:58.4px;height:43.2px;background:#fdf6c4"><b style="left:0%;top:0%;width:50%;height:100%;background:#e8b050"></b><b class=e style="left:10%;top:30%;width:26%;height:30%;background:#f6eeb0"></b><b style="left:22%;top:10%;width:8%;height:30%;background:#161616"></b><b class=e style="left:62%;top:3%;width:34%;height:44%;background:#ffffff"></b><b class=t style="left:65%;top:45%;width:35%;height:55%;background:#f0a070"></b><b class=e style="left:84%;top:62%;width:6%;height:9%;background:#ffffff"></b><b class=e style="left:18%;top:82%;width:28%;height:18%;background:#7c4424"></b><b style="left:50%;top:5%;width:12%;height:56%;background:#ededed"></b><b style="left:2%;top:3%;width:10%;height:10%;background:#ededed"></b></b><b class="k" style="left:93px;top:35.8px;width:58.2px;height:43.2px;background:#fdf6c4"><b style="left:5%;top:35%;width:50%;height:12%;background:#e9b65a"></b><b style="left:8%;top:46%;width:5%;height:40%;background:#e9b65a"></b><b style="left:48%;top:46%;width:5%;height:30%;background:#e9b65a"></b><b class=r style="left:62%;top:0%;width:30%;height:52%;background:#7c4424"></b><b class=e style="left:66%;top:14%;width:18%;height:26%;background:#fbe3d2"></b><b class=r style="left:58%;top:54%;width:40%;height:46%;background:#ffffff"></b><b style="left:92%;top:0%;width:8%;height:100%;background:#f0928a"></b><b class=e style="left:8%;top:3%;width:28%;height:48%;background:#ededed"></b><b style="left:24%;top:28%;width:6%;height:8%;background:#a8602c"></b><b class=e style="left:72%;top:76%;width:10%;height:10%;background:#1d2c6a"></b></b><b class="k" style="left:93px;top:81.2px;width:58.2px;height:43.2px;background:#fdf6c4"><b class=r style="left:3%;top:0%;width:54%;height:52%;background:#7c4424"></b><b class=e style="left:12%;top:16%;width:40%;height:50%;background:#fbe3d2"></b><b class=r style="left:0%;top:60%;width:72%;height:40%;background:#ffffff"></b><b class=r style="left:15%;top:58%;width:36%;height:8%;background:#dc1f1f"></b><b class=t style="left:65%;top:38%;width:34%;height:62%;background:#f2500c"></b><b class=e style="left:70%;top:56%;width:5%;height:8%;background:#ffffff"></b><b class=e style="left:70%;top:5%;width:18%;height:30%;background:#ededed"></b><b style="left:40%;top:60%;width:34%;height:10%;background:#fbe3d2"></b></b><b class="k" style="left:93px;top:126.3px;width:58.2px;height:43.2px;background:#fdf6c4"><b style="left:0%;top:10%;width:22%;height:90%;background:#f2500c"></b><b style="left:5%;top:10%;width:93%;height:85%;background:#ffffff"></b><b style="left:12%;top:18%;width:70%;height:6%;background:#161616"></b><b style="left:16%;top:34%;width:66%;height:6%;background:#161616"></b><b style="left:22%;top:50%;width:70%;height:6%;background:#161616"></b><b style="left:30%;top:66%;width:62%;height:6%;background:#161616"></b><b style="left:36%;top:80%;width:56%;height:6%;background:#161616"></b></b><b class="k" style="left:93px;top:171.6px;width:58.2px;height:43.2px;background:#fdf6c4"><b class=r style="left:3%;top:3%;width:32%;height:94%;background:#161616"></b><b style="left:8%;top:8%;width:22%;height:84%;background:#ffffff"></b><b style="left:14%;top:12%;width:10%;height:70%;background:#161616"></b><b style="left:80%;top:5%;width:16%;height:36%;background:#ededed"></b><b style="left:40%;top:35%;width:10%;height:22%;background:#e8b050"></b><b class=e style="left:56%;top:42%;width:12%;height:14%;background:#7c4424"></b><b style="left:62%;top:46%;width:18%;height:12%;background:#ffffff"></b><b style="left:78%;top:46%;width:12%;height:12%;background:#1d2c6a"></b><b class=e style="left:38%;top:66%;width:16%;height:26%;background:#ededed"></b></b><i class="g1"></i><i class="g2"></i><i class="g3"></i><i class="t1"></i><i class="t2"></i><i class="t3"></i><i class="t4"></i><i class="c1"></i><i class="c2"></i><i class="c3"></i><i class="c4"></i><i class="c5"></i><i class="c6"></i><i class="c7"></i></div><div class="pn" style="left:18px">57</div><div class="pg" style="left:213.5px"><b class="k" style="left:93px;top:35.8px;width:58.2px;height:43.2px;background:#3a8a30"><b class=e style="left:25%;top:0%;width:50%;height:50%;background:#d0f0f0"></b><b class=e style="left:32%;top:0%;width:30%;height:18%;background:#7c4424"></b><b class=e style="left:38%;top:4%;width:18%;height:12%;background:#fbe3d2"></b><b style="left:0%;top:55%;width:100%;height:45%;background:#a8e064"></b><b style="left:3%;top:50%;width:13%;height:42%;background:#ededed"></b><b style="left:68%;top:40%;width:14%;height:52%;background:#ededed"></b><b style="left:85%;top:5%;width:13%;height:36%;background:#ededed"></b><b class=t style="left:38%;top:48%;width:10%;height:28%;background:#f2500c"></b><b style="left:36%;top:72%;width:6%;height:8%;background:#dc1f1f"></b></b><b class="k" style="left:93px;top:81.2px;width:58.2px;height:43.2px;background:#b8e878"><b class=r style="left:5%;top:5%;width:30%;height:46%;background:#f0c8ea"></b><b style="left:3%;top:55%;width:17%;height:43%;background:#ededed"></b><b style="left:35%;top:55%;width:15%;height:43%;background:#ededed"></b><b style="left:72%;top:12%;width:10%;height:34%;background:#f2500c"></b><b style="left:70%;top:10%;width:14%;height:8%;background:#dc1f1f"></b><b style="left:85%;top:3%;width:13%;height:42%;background:#ededed"></b><b style="left:38%;top:15%;width:32%;height:26%;background:#d8f0c8"></b><b style="left:44%;top:5%;width:30%;height:10%;background:#161616"></b><b style="left:55%;top:60%;width:45%;height:40%;background:#a8e064"></b><b class=e style="left:60%;top:46%;width:12%;height:24%;background:#ededed"></b></b><b class="k" style="left:93px;top:126.3px;width:58.2px;height:43.2px;background:#d8d8a8"><b style="left:0%;top:20%;width:100%;height:30%;background:#e8e8c0"></b><b class=e style="left:38%;top:28%;width:34%;height:40%;background:#f0c8ea"></b><b style="left:28%;top:16%;width:24%;height:4%;background:#777777"></b><b style="left:0%;top:88%;width:100%;height:12%;background:#80b040"></b><b class=e style="left:78%;top:78%;width:14%;height:12%;background:#ffffff"></b></b><b class="k" style="left:93px;top:171.6px;width:58.2px;height:43.2px;background:#e0f4f4"><b style="left:0%;top:72%;width:100%;height:28%;background:#a0d860"></b><b style="left:80%;top:20%;width:20%;height:36%;background:#3a8a30"></b><b class=r style="left:68%;top:3%;width:30%;height:28%;background:#ffffff"></b><b class=t style="left:5%;top:60%;width:20%;height:40%;background:#f2500c"></b><b class=t style="left:38%;top:55%;width:10%;height:26%;background:#f2500c"></b><b class=e style="left:50%;top:76%;width:6%;height:8%;background:#dc1f1f"></b><b class=e style="left:70%;top:55%;width:24%;height:30%;background:#7c4424"></b><b class=e style="left:72%;top:66%;width:18%;height:24%;background:#fbe3d2"></b><b style="left:85%;top:72%;width:15%;height:28%;background:#f0c8ea"></b><b style="left:3%;top:5%;width:12%;height:42%;background:#ededed"></b><b style="left:0%;top:78%;width:12%;height:10%;background:#2a5a40"></b></b><i class="g1"></i><i class="g2"></i><i class="g3"></i><i class="t1"></i><i class="t2"></i><i class="t3"></i><i class="t4"></i><i class="c1"></i><i class="c2"></i><i class="c3"></i><i class="c4"></i><i class="c5"></i><i class="c6"></i><i class="c7"></i></div><div class="pn" style="left:213.5px">56</div></div><div class="sp" style="left:1122px;top:1602px"><div class="pg" style="left:18px"><b class="k" style="left:25.7px;top:35.8px;width:58.4px;height:43.2px;background:#ffffff"><b style="left:28%;top:0%;width:58%;height:46%;background:#1a7a3a"></b><b style="left:40%;top:5%;width:12%;height:12%;background:#ffffff"></b><b style="left:64%;top:5%;width:12%;height:12%;background:#ffffff"></b><b style="left:52%;top:24%;width:12%;height:12%;background:#ffffff"></b><b class=e style="left:28%;top:18%;width:22%;height:28%;background:#7c4424"></b><b class=e style="left:38%;top:28%;width:12%;height:16%;background:#fbe3d2"></b><b class=r style="left:22%;top:44%;width:30%;height:36%;background:#2a5a3a"></b><b style="left:48%;top:50%;width:28%;height:30%;background:#e8b050"></b><b style="left:54%;top:54%;width:14%;height:12%;background:#ffffff"></b><b class=r style="left:3%;top:5%;width:18%;height:90%;background:#ededed"></b><b class=r style="left:78%;top:5%;width:20%;height:90%;background:#ededed"></b><b class=e style="left:5%;top:76%;width:72%;height:24%;background:#7a3a1a"></b><b class=e style="left:30%;top:80%;width:26%;height:20%;background:#fbe3d2"></b></b><b class="k" style="left:25.7px;top:81.2px;width:58.4px;height:43.2px;background:#ffffff"><b style="left:18%;top:0%;width:68%;height:56%;background:#1a7a3a"></b><b style="left:26%;top:6%;width:12%;height:12%;background:#ffffff"></b><b style="left:50%;top:6%;width:12%;height:12%;background:#ffffff"></b><b style="left:70%;top:24%;width:12%;height:12%;background:#ffffff"></b><b style="left:22%;top:36%;width:12%;height:12%;background:#ffffff"></b><b class=t style="left:40%;top:18%;width:22%;height:42%;background:#f2500c"></b><b class=e style="left:44%;top:28%;width:6%;height:8%;background:#ffffff"></b><b class=e style="left:54%;top:28%;width:6%;height:8%;background:#ffffff"></b><b class=e style="left:0%;top:56%;width:24%;height:42%;background:#ededed"></b><b class=e style="left:25%;top:58%;width:24%;height:40%;background:#ededed"></b><b class=e style="left:50%;top:58%;width:24%;height:40%;background:#ededed"></b><b class=e style="left:75%;top:56%;width:24%;height:42%;background:#ededed"></b><b style="left:2%;top:5%;width:14%;height:46%;background:#ededed"></b><b style="left:86%;top:5%;width:12%;height:46%;background:#ededed"></b><b style="left:36%;top:92%;width:30%;height:8%;background:#1a7a3a"></b></b><b class="k" style="left:25.7px;top:126.3px;width:58.4px;height:43.2px;background:#ffffff"><b style="left:18%;top:0%;width:68%;height:56%;background:#1a7a3a"></b><b style="left:26%;top:6%;width:12%;height:12%;background:#ffffff"></b><b style="left:50%;top:6%;width:12%;height:12%;background:#ffffff"></b><b style="left:70%;top:24%;width:12%;height:12%;background:#ffffff"></b><b style="left:22%;top:36%;width:12%;height:12%;background:#ffffff"></b><b class=t style="left:40%;top:18%;width:22%;height:42%;background:#f2500c"></b><b class=e style="left:44%;top:28%;width:6%;height:8%;background:#ffffff"></b><b class=e style="left:54%;top:28%;width:6%;height:8%;background:#ffffff"></b><b class=e style="left:0%;top:56%;width:24%;height:42%;background:#ededed"></b><b class=e style="left:25%;top:58%;width:24%;height:40%;background:#ededed"></b><b class=e style="left:50%;top:58%;width:24%;height:40%;background:#ededed"></b><b class=e style="left:75%;top:56%;width:24%;height:42%;background:#ededed"></b><b style="left:2%;top:5%;width:14%;height:46%;background:#ededed"></b><b style="left:86%;top:5%;width:12%;height:46%;background:#ededed"></b><b style="left:36%;top:92%;width:30%;height:8%;background:#1a7a3a"></b></b><b class="k" style="left:25.7px;top:171.6px;width:58.4px;height:43.2px;background:#ffffff"><b style="left:18%;top:0%;width:68%;height:56%;background:#1a7a3a"></b><b style="left:26%;top:6%;width:12%;height:12%;background:#ffffff"></b><b style="left:50%;top:6%;width:12%;height:12%;background:#ffffff"></b><b style="left:70%;top:24%;width:12%;height:12%;background:#ffffff"></b><b style="left:22%;top:36%;width:12%;height:12%;background:#ffffff"></b><b class=t style="left:40%;top:18%;width:22%;height:42%;background:#f2500c"></b><b class=e style="left:44%;top:28%;width:6%;height:8%;background:#ffffff"></b><b class=e style="left:54%;top:28%;width:6%;height:8%;background:#ffffff"></b><b class=e style="left:0%;top:56%;width:24%;height:42%;background:#ededed"></b><b class=e style="left:25%;top:58%;width:24%;height:40%;background:#ededed"></b><b class=e style="left:50%;top:58%;width:24%;height:40%;background:#ededed"></b><b class=e style="left:75%;top:56%;width:24%;height:42%;background:#ededed"></b><b style="left:2%;top:5%;width:14%;height:46%;background:#ededed"></b><b style="left:86%;top:5%;width:12%;height:46%;background:#ededed"></b><b style="left:36%;top:92%;width:30%;height:8%;background:#1a7a3a"></b></b><i class="g1"></i><i class="g2"></i><i class="g3"></i><i class="t1"></i><i class="t2"></i><i class="t3"></i><i class="t4"></i><i class="c1"></i><i class="c2"></i><i class="c3"></i><i class="c4"></i><i class="c5"></i><i class="c6"></i><i class="c7"></i></div><div class="pn" style="left:18px">55</div><div class="pg" style="left:213.5px"><b class="k" style="left:93px;top:35.8px;width:58.2px;height:43.2px;background:#fdf6c4"><b style="left:15%;top:72%;width:82%;height:28%;background:#e0a840"></b><b class=r style="left:58%;top:20%;width:22%;height:32%;background:#7c4424"></b><b class=e style="left:60%;top:28%;width:12%;height:16%;background:#fbe3d2"></b><b class=r style="left:54%;top:48%;width:32%;height:28%;background:#ffffff"></b><b style="left:32%;top:20%;width:7%;height:20%;background:#f2500c"></b><b class=t style="left:36%;top:55%;width:9%;height:18%;background:#f2500c"></b><b class=e style="left:3%;top:3%;width:20%;height:64%;background:#ededed"></b><b style="left:82%;top:3%;width:16%;height:58%;background:#ededed"></b><b style="left:48%;top:78%;width:8%;height:10%;background:#ffffff"></b><b style="left:62%;top:76%;width:10%;height:10%;background:#161616"></b><b style="left:4%;top:70%;width:8%;height:26%;background:#ededed"></b></b><b class="k" style="left:93px;top:81.2px;width:58.2px;height:43.2px;background:#fdf6c4"><b class=t style="left:0%;top:22%;width:46%;height:78%;background:#e84a10"></b><b class=e style="left:14%;top:40%;width:10%;height:14%;background:#ffffff"></b><b class=e style="left:30%;top:44%;width:10%;height:14%;background:#ffffff"></b><b class=e style="left:17%;top:44%;width:5%;height:7%;background:#161616"></b><b class=e style="left:33%;top:48%;width:5%;height:7%;background:#161616"></b><b class=r style="left:40%;top:0%;width:60%;height:62%;background:#7c4424"></b><b class=e style="left:46%;top:18%;width:42%;height:52%;background:#fbe3d2"></b><b class=r style="left:45%;top:70%;width:55%;height:30%;background:#ffffff"></b><b class=e style="left:85%;top:3%;width:15%;height:28%;background:#ededed"></b></b><b class="k" style="left:93px;top:126.3px;width:58.2px;height:43.2px;background:#e8b050"><b class=r style="left:55%;top:0%;width:45%;height:100%;background:#7a3a1a"></b><b class=r style="left:5%;top:25%;width:46%;height:70%;background:#161616"></b><b style="left:10%;top:30%;width:36%;height:58%;background:#ffffff"></b><b class=e style="left:22%;top:46%;width:12%;height:30%;background:#fbe3d2"></b><b class=e style="left:22%;top:40%;width:12%;height:12%;background:#7c4424"></b><b class=t style="left:46%;top:55%;width:14%;height:40%;background:#f2500c"></b><b class=e style="left:38%;top:3%;width:13%;height:20%;background:#ffffff"></b><b style="left:41%;top:7%;width:7%;height:12%;background:#161616"></b><b style="left:0%;top:0%;width:30%;height:20%;background:#fdf6c4"></b></b><b class="k" style="left:93px;top:171.6px;width:58.2px;height:43.2px;background:#fdf6c4"><b style="left:18%;top:55%;width:64%;height:45%;background:#e9b65a"></b><b style="left:20%;top:80%;width:5%;height:20%;background:#e9b65a"></b><b class=e style="left:28%;top:32%;width:18%;height:20%;background:#7c4424"></b><b style="left:32%;top:46%;width:20%;height:12%;background:#ffffff"></b><b class=e style="left:5%;top:5%;width:18%;height:42%;background:#ededed"></b><b class=e style="left:42%;top:3%;width:20%;height:44%;background:#ededed"></b><b style="left:68%;top:3%;width:30%;height:58%;background:#ededed"></b><b style="left:5%;top:50%;width:10%;height:40%;background:#ededed"></b><b style="left:50%;top:70%;width:8%;height:12%;background:#ffffff"></b><b style="left:36%;top:66%;width:8%;height:10%;background:#f0a020"></b></b><i class="g1"></i><i class="g2"></i><i class="g3"></i><i class="t1"></i><i class="t2"></i><i class="t3"></i><i class="t4"></i><i class="c1"></i><i class="c2"></i><i class="c3"></i><i class="c4"></i><i class="c5"></i><i class="c6"></i><i class="c7"></i></div><div class="pn" style="left:213.5px">54</div></div><div class="sp" style="left:1554px;top:1602px"><div class="pg" style="left:18px"><b class="k" style="left:25.7px;top:35.8px;width:58.4px;height:43.2px;background:#fdf6c4"><b style="left:20%;top:8%;width:50%;height:48%;background:#161616"></b><b style="left:23%;top:12%;width:44%;height:40%;background:#d0e8c0"></b><b class=e style="left:32%;top:14%;width:16%;height:22%;background:#7c4424"></b><b class=e style="left:26%;top:34%;width:12%;height:14%;background:#f4e050"></b><b style="left:30%;top:58%;width:30%;height:10%;background:#cccccc"></b><b class=e style="left:58%;top:50%;width:28%;height:40%;background:#9a5a2a"></b><b class=r style="left:60%;top:86%;width:36%;height:14%;background:#2a8a6a"></b><b class=e style="left:78%;top:3%;width:20%;height:48%;background:#ededed"></b><b style="left:3%;top:50%;width:15%;height:36%;background:#ededed"></b><b style="left:25%;top:62%;width:30%;height:38%;background:#bfe4f0"></b><b class=t style="left:35%;top:76%;width:12%;height:24%;background:#f2500c"></b></b><b class="k" style="left:25.7px;top:81.2px;width:58.4px;height:43.2px;background:#d8ecd0"><b class=r style="left:32%;top:0%;width:46%;height:50%;background:#7c4424"></b><b class=e style="left:38%;top:18%;width:32%;height:52%;background:#fbe3d2"></b><b class=e style="left:52%;top:54%;width:12%;height:10%;background:#f08ac8"></b><b class=r style="left:50%;top:65%;width:50%;height:35%;background:#ffffff"></b><b class=e style="left:3%;top:35%;width:25%;height:50%;background:#ededed"></b><b style="left:84%;top:5%;width:10%;height:86%;background:#161616"></b><b class=r style="left:30%;top:70%;width:15%;height:30%;background:#f4e050"></b><b class=e style="left:28%;top:66%;width:20%;height:10%;background:#ffffff"></b></b><b class="k" style="left:25.7px;top:126.3px;width:58.4px;height:43.2px;background:#fdf6c4"><b style="left:0%;top:40%;width:38%;height:60%;background:#161616"></b><b class=r style="left:30%;top:38%;width:55%;height:42%;background:#e8b050"></b><b style="left:62%;top:78%;width:5%;height:20%;background:#e8b050"></b><b class=e style="left:42%;top:3%;width:20%;height:26%;background:#7c4424"></b><b class=e style="left:46%;top:12%;width:12%;height:16%;background:#fbe3d2"></b><b class=r style="left:38%;top:24%;width:28%;height:32%;background:#2a8a6a"></b><b class=r style="left:78%;top:3%;width:22%;height:54%;background:#ffffff"></b><b style="left:84%;top:10%;width:10%;height:40%;background:#161616"></b><b class=e style="left:28%;top:5%;width:12%;height:30%;background:#ededed"></b></b><b class="k" style="left:25.7px;top:171.6px;width:58.4px;height:43.2px;background:#fdf6c4"><b class=t style="left:58%;top:3%;width:32%;height:97%;background:#f2500c"></b><b class=e style="left:64%;top:20%;width:8%;height:12%;background:#ffffff"></b><b class=e style="left:76%;top:20%;width:8%;height:12%;background:#ffffff"></b><b class=e style="left:25%;top:30%;width:20%;height:26%;background:#7c4424"></b><b class=e style="left:28%;top:40%;width:14%;height:18%;background:#fbe3d2"></b><b class=r style="left:22%;top:56%;width:30%;height:44%;background:#2a8a6a"></b><b class=e style="left:3%;top:5%;width:17%;height:30%;background:#ededed"></b><b class=e style="left:38%;top:3%;width:17%;height:38%;background:#ededed"></b><b style="left:86%;top:30%;width:14%;height:60%;background:#ededed"></b><b style="left:5%;top:62%;width:10%;height:30%;background:#ededed"></b></b><b class="k" style="left:93px;top:35.8px;width:58.2px;height:43.2px;background:#555555"><b class=t style="left:30%;top:0%;width:55%;height:96%;background:#ffffff"></b><b class=t style="left:45%;top:8%;width:26%;height:72%;background:#f2500c"></b><b class=e style="left:50%;top:20%;width:6%;height:9%;background:#ffffff"></b><b class=e style="left:60%;top:20%;width:6%;height:9%;background:#ffffff"></b><b class=e style="left:62%;top:56%;width:8%;height:8%;background:#dc1f1f"></b><b style="left:3%;top:45%;width:27%;height:46%;background:#ededed"></b><b style="left:80%;top:3%;width:18%;height:42%;background:#ededed"></b></b><b class="k" style="left:93px;top:81.2px;width:58.2px;height:43.2px;background:#ffffff"><b style="left:0%;top:0%;width:20%;height:40%;background:#555555"></b><b style="left:85%;top:0%;width:15%;height:60%;background:#555555"></b><b class=t style="left:48%;top:5%;width:38%;height:95%;background:#f2500c"></b><b class=e style="left:54%;top:22%;width:9%;height:14%;background:#ffffff"></b><b class=e style="left:70%;top:22%;width:9%;height:14%;background:#ffffff"></b><b style="left:3%;top:35%;width:42%;height:60%;background:#ededed"></b><b style="left:22%;top:3%;width:20%;height:32%;background:#ededed"></b><b style="left:80%;top:82%;width:8%;height:10%;background:#dc1f1f"></b></b><b class="k" style="left:93px;top:126.3px;width:58.2px;height:43.2px;background:#888"><b class=t style="left:42%;top:15%;width:18%;height:60%;background:#f2500c"></b><b style="left:48%;top:50%;width:6%;height:10%;background:#dc1f1f"></b><b style="left:42%;top:74%;width:18%;height:6%;background:#f2500c"></b><b style="left:0%;top:35%;width:22%;height:65%;background:#ededed"></b><b style="left:78%;top:3%;width:20%;height:52%;background:#ededed"></b><b style="left:30%;top:15%;width:6%;height:10%;background:#ffffff"></b></b><b class="k" style="left:93px;top:171.6px;width:58.2px;height:43.2px;background:#fdf6c4"><b class=r style="left:20%;top:20%;width:65%;height:60%;background:#e9b65a"></b><b class=e style="left:55%;top:55%;width:45%;height:45%;background:#7c4424"></b><b style="left:3%;top:3%;width:17%;height:22%;background:#ffffff"></b><b style="left:30%;top:0%;width:45%;height:12%;background:#cccccc"></b><b class=e style="left:82%;top:5%;width:16%;height:46%;background:#ededed"></b><b style="left:3%;top:45%;width:15%;height:50%;background:#ededed"></b><b class=e style="left:30%;top:40%;width:14%;height:14%;background:#ffffff"></b><b style="left:40%;top:36%;width:14%;height:6%;background:#f2500c"></b><b style="left:3%;top:26%;width:4%;height:30%;background:#e9b65a"></b></b><i class="g1"></i><i class="g2"></i><i class="g3"></i><i class="t1"></i><i class="t2"></i><i class="t3"></i><i class="t4"></i><i class="c1"></i><i class="c2"></i><i class="c3"></i><i class="c4"></i><i class="c5"></i><i class="c6"></i><i class="c7"></i></div><div class="pn" style="left:18px">53</div><div class="pg" style="left:213.5px"><b class="k" style="left:25.7px;top:35.8px;width:58.4px;height:43.2px;background:#fdf6c4"><b class=r style="left:38%;top:12%;width:18%;height:34%;background:#7c4424"></b><b class=e style="left:44%;top:20%;width:10%;height:16%;background:#fbe3d2"></b><b class=r style="left:25%;top:40%;width:36%;height:46%;background:#444444"></b><b style="left:32%;top:84%;width:24%;height:16%;background:#1d2c6a"></b><b class=r style="left:50%;top:60%;width:42%;height:40%;background:#ffffff"></b><b style="left:0%;top:76%;width:30%;height:24%;background:#cccccc"></b><b class=e style="left:5%;top:10%;width:20%;height:46%;background:#ededed"></b><b style="left:72%;top:3%;width:18%;height:48%;background:#ededed"></b><b style="left:12%;top:62%;width:12%;height:10%;background:#f4e050"></b></b><b class="k" style="left:25.7px;top:81.2px;width:58.4px;height:43.2px;background:#fdf6c4"><b class=r style="left:30%;top:8%;width:26%;height:48%;background:#7c4424"></b><b class=e style="left:34%;top:18%;width:10%;height:18%;background:#fbe3d2"></b><b class=r style="left:28%;top:45%;width:30%;height:36%;background:#444444"></b><b style="left:35%;top:80%;width:20%;height:20%;background:#1d2c6a"></b><b class=t style="left:62%;top:42%;width:28%;height:58%;background:#f2500c"></b><b class=e style="left:66%;top:56%;width:5%;height:8%;background:#ffffff"></b><b class=e style="left:3%;top:35%;width:25%;height:50%;background:#ededed"></b><b class=e style="left:72%;top:3%;width:20%;height:38%;background:#ededed"></b></b><b class="k" style="left:25.7px;top:126.3px;width:58.4px;height:43.2px;background:#ffffff"><b class=e style="left:0%;top:20%;width:56%;height:80%;background:#161616"></b><b class=e style="left:10%;top:50%;width:30%;height:30%;background:#ffffff"></b><b class=e style="left:0%;top:0%;width:40%;height:35%;background:#7c4424"></b><b class=e style="left:45%;top:28%;width:15%;height:22%;background:#f2500c"></b><b class=e style="left:65%;top:25%;width:33%;height:60%;background:#ffffff"></b><b style="left:76%;top:38%;width:12%;height:30%;background:#161616"></b><b style="left:35%;top:85%;width:36%;height:15%;background:#1d2c6a"></b><b style="left:5%;top:30%;width:20%;height:10%;background:#161616"></b><b style="left:50%;top:80%;width:30%;height:12%;background:#161616"></b></b><b class="k" style="left:25.7px;top:171.6px;width:58.4px;height:43.2px;background:#fdf6c4"><b style="left:18%;top:50%;width:52%;height:9%;background:#e9b65a"></b><b style="left:22%;top:58%;width:4%;height:30%;background:#e9b65a"></b><b style="left:62%;top:58%;width:4%;height:30%;background:#e9b65a"></b><b class=t style="left:45%;top:22%;width:10%;height:28%;background:#e04818"></b><b class=e style="left:38%;top:70%;width:58%;height:30%;background:#7a3a1a"></b><b class=e style="left:58%;top:80%;width:8%;height:12%;background:#ffffff"></b><b class=e style="left:18%;top:8%;width:20%;height:46%;background:#ededed"></b><b class=e style="left:78%;top:20%;width:14%;height:50%;background:#ededed"></b><b style="left:3%;top:45%;width:12%;height:50%;background:#ededed"></b><b style="left:0%;top:5%;width:10%;height:40%;background:#cccccc"></b></b><b class="k" style="left:93px;top:35.8px;width:58.2px;height:43.2px;background:#c0c0c8"><b style="left:25%;top:0%;width:75%;height:46%;background:#333"></b><b style="left:25%;top:40%;width:75%;height:14%;background:#777777"></b><b class=e style="left:48%;top:5%;width:30%;height:42%;background:#7c4424"></b><b class=e style="left:52%;top:20%;width:20%;height:30%;background:#fbe3d2"></b><b class=r style="left:35%;top:55%;width:65%;height:45%;background:#ffffff"></b><b class=e style="left:3%;top:3%;width:22%;height:52%;background:#ffffff"></b><b style="left:22%;top:30%;width:12%;height:30%;background:#fbe3d2"></b><b style="left:6%;top:8%;width:10%;height:40%;background:#161616"></b></b><b class="k" style="left:93px;top:81.2px;width:58.2px;height:43.2px;background:#e8b050"><b style="left:75%;top:0%;width:25%;height:100%;background:#fdf6c4"></b><b class=e style="left:75%;top:8%;width:25%;height:54%;background:#7c4424"></b><b class=r style="left:72%;top:40%;width:28%;height:60%;background:#fbe3d2"></b><b class=e style="left:38%;top:3%;width:20%;height:42%;background:#ededed"></b><b class=e style="left:28%;top:40%;width:22%;height:56%;background:#ededed"></b><b class=e style="left:3%;top:60%;width:22%;height:36%;background:#ededed"></b><b class=r style="left:15%;top:20%;width:20%;height:16%;background:#e04818"></b><b style="left:12%;top:30%;width:26%;height:8%;background:#a8602c"></b><b style="left:62%;top:50%;width:10%;height:40%;background:#fbe3d2"></b></b><b class="k" style="left:93px;top:126.3px;width:58.2px;height:43.2px;background:#fdf6c4"><b class=t style="left:55%;top:18%;width:33%;height:82%;background:#f2500c"></b><b class=e style="left:60%;top:32%;width:7%;height:10%;background:#ffffff"></b><b class=e style="left:72%;top:32%;width:7%;height:10%;background:#ffffff"></b><b style="left:3%;top:3%;width:22%;height:58%;background:#ededed"></b><b style="left:52%;top:3%;width:18%;height:14%;background:#161616"></b><b style="left:30%;top:10%;width:20%;height:50%;background:#f6eeb0"></b><b style="left:28%;top:60%;width:10%;height:26%;background:#3a96e0"></b><b class=e style="left:28%;top:50%;width:8%;height:12%;background:#f4e050"></b><b style="left:6%;top:8%;width:10%;height:46%;background:#161616"></b></b><b class="k" style="left:93px;top:171.6px;width:58.2px;height:43.2px;background:#fdf6c4"><b class=e style="left:42%;top:12%;width:18%;height:30%;background:#7c4424"></b><b class=e style="left:46%;top:22%;width:10%;height:14%;background:#fbe3d2"></b><b class=r style="left:40%;top:38%;width:28%;height:42%;background:#ffffff"></b><b class=e style="left:28%;top:68%;width:38%;height:20%;background:#161616"></b><b style="left:0%;top:85%;width:100%;height:15%;background:#e9b65a"></b><b class=e style="left:15%;top:3%;width:20%;height:42%;background:#ededed"></b><b style="left:72%;top:3%;width:26%;height:48%;background:#ededed"></b><b class=e style="left:5%;top:45%;width:17%;height:36%;background:#ededed"></b><b style="left:35%;top:78%;width:10%;height:14%;background:#f2500c"></b><b style="left:80%;top:56%;width:12%;height:20%;background:#ededed"></b></b><i class="g1"></i><i class="g2"></i><i class="g3"></i><i class="t1"></i><i class="t2"></i><i class="t3"></i><i class="t4"></i><i class="c1"></i><i class="c2"></i><i class="c3"></i><i class="c4"></i><i class="c5"></i><i class="c6"></i><i class="c7"></i></div><div class="pn" style="left:213.5px">52</div></div><div class="sp" style="left:1986px;top:1602px"><div class="pg" style="left:18px"><b class="k" style="left:25.7px;top:35.8px;width:58.4px;height:43.2px;background:#fdf6c4"><b class=e style="left:0%;top:5%;width:36%;height:90%;background:#ffffff"></b><b class=e style="left:55%;top:18%;width:17%;height:24%;background:#7c4424"></b><b class=e style="left:56%;top:26%;width:10%;height:14%;background:#fbe3d2"></b><b class=r style="left:50%;top:38%;width:34%;height:56%;background:#ffffff"></b><b style="left:62%;top:34%;width:8%;height:8%;background:#161616"></b><b class=e style="left:82%;top:3%;width:18%;height:58%;background:#ededed"></b><b style="left:22%;top:58%;width:20%;height:5%;background:#e9b65a"></b><b style="left:24%;top:62%;width:3%;height:34%;background:#e9b65a"></b><b style="left:38%;top:62%;width:3%;height:34%;background:#e9b65a"></b><b style="left:28%;top:48%;width:7%;height:10%;background:#a8602c"></b><b style="left:60%;top:84%;width:12%;height:10%;background:#161616"></b></b><b class="k" style="left:25.7px;top:81.2px;width:58.4px;height:43.2px;background:#fdf6c4"><b class=e style="left:0%;top:5%;width:36%;height:90%;background:#ffffff"></b><b class=e style="left:55%;top:18%;width:17%;height:24%;background:#7c4424"></b><b class=e style="left:56%;top:26%;width:10%;height:14%;background:#fbe3d2"></b><b class=r style="left:50%;top:38%;width:34%;height:56%;background:#ffffff"></b><b style="left:62%;top:34%;width:8%;height:8%;background:#161616"></b><b class=e style="left:82%;top:3%;width:18%;height:58%;background:#ededed"></b><b style="left:22%;top:58%;width:20%;height:5%;background:#e9b65a"></b><b style="left:24%;top:62%;width:3%;height:34%;background:#e9b65a"></b><b style="left:38%;top:62%;width:3%;height:34%;background:#e9b65a"></b><b style="left:28%;top:48%;width:7%;height:10%;background:#a8602c"></b><b style="left:60%;top:84%;width:12%;height:10%;background:#161616"></b></b><b class="k" style="left:25.7px;top:126.3px;width:58.4px;height:43.2px;background:#fdf6c4"><b class=e style="left:0%;top:5%;width:36%;height:90%;background:#ffffff"></b><b class=e style="left:55%;top:18%;width:17%;height:24%;background:#7c4424"></b><b class=e style="left:56%;top:26%;width:10%;height:14%;background:#fbe3d2"></b><b class=r style="left:50%;top:38%;width:34%;height:56%;background:#ffffff"></b><b style="left:62%;top:34%;width:8%;height:8%;background:#161616"></b><b class=e style="left:82%;top:3%;width:18%;height:58%;background:#ededed"></b><b style="left:22%;top:58%;width:20%;height:5%;background:#e9b65a"></b><b style="left:24%;top:62%;width:3%;height:34%;background:#e9b65a"></b><b style="left:38%;top:62%;width:3%;height:34%;background:#e9b65a"></b><b style="left:28%;top:48%;width:7%;height:10%;background:#a8602c"></b><b style="left:60%;top:84%;width:12%;height:10%;background:#161616"></b><b class=e style="left:2%;top:60%;width:20%;height:38%;background:#ededed"></b></b><b class="k" style="left:25.7px;top:171.6px;width:58.4px;height:43.2px;background:#fdf6c4"><b class=e style="left:3%;top:5%;width:28%;height:60%;background:#ffffff"></b><b class=e style="left:45%;top:3%;width:30%;height:42%;background:#7c4424"></b><b class=e style="left:50%;top:22%;width:20%;height:30%;background:#fbe3d2"></b><b class=r style="left:35%;top:50%;width:50%;height:50%;background:#ffffff"></b><b class=e style="left:80%;top:3%;width:20%;height:48%;background:#ededed"></b><b style="left:3%;top:68%;width:16%;height:30%;background:#ededed"></b><b style="left:44%;top:30%;width:10%;height:16%;background:#a8602c"></b><b style="left:56%;top:50%;width:8%;height:8%;background:#161616"></b><b style="left:0%;top:50%;width:8%;height:20%;background:#f4e050"></b></b><b class="k" style="left:93px;top:35.8px;width:58.2px;height:43.2px;background:#fdf6c4"><b class=t style="left:10%;top:15%;width:36%;height:85%;background:#d85010"></b><b style="left:0%;top:40%;width:45%;height:12%;background:#2a4ab0"></b><b style="left:8%;top:60%;width:40%;height:12%;background:#2a4ab0"></b><b style="left:28%;top:14%;width:10%;height:80%;background:#2a4ab0"></b><b class=r style="left:5%;top:3%;width:50%;height:26%;background:#161616"></b><b class=e style="left:65%;top:5%;width:18%;height:30%;background:#7c4424"></b><b class=r style="left:62%;top:35%;width:34%;height:65%;background:#ffffff"></b><b class=e style="left:42%;top:75%;width:13%;height:25%;background:#dc1f1f"></b><b style="left:46%;top:50%;width:20%;height:14%;background:#161616"></b></b><b class="k" style="left:93px;top:81.2px;width:58.2px;height:43.2px;background:#fdf6c4"><b class=r style="left:0%;top:35%;width:75%;height:65%;background:#e8b050"></b><b class=e style="left:68%;top:10%;width:32%;height:50%;background:#7c4424"></b><b class=e style="left:72%;top:34%;width:22%;height:40%;background:#fbe3d2"></b><b style="left:65%;top:70%;width:35%;height:30%;background:#ffffff"></b><b style="left:78%;top:66%;width:22%;height:8%;background:#161616"></b><b style="left:3%;top:5%;width:17%;height:30%;background:#ededed"></b><b class=e style="left:48%;top:3%;width:17%;height:38%;background:#ededed"></b><b class=e style="left:5%;top:50%;width:17%;height:40%;background:#ededed"></b><b class=e style="left:52%;top:50%;width:18%;height:36%;background:#ededed"></b><b style="left:32%;top:38%;width:6%;height:24%;background:#a8602c"></b><b style="left:38%;top:56%;width:8%;height:10%;background:#f2500c"></b></b><b class="k" style="left:93px;top:126.3px;width:58.2px;height:43.2px;background:#fdf6c4"><b style="left:5%;top:12%;width:36%;height:68%;background:#ffffff"></b><b style="left:12%;top:20%;width:22%;height:40%;background:#161616"></b><b style="left:58%;top:10%;width:30%;height:66%;background:#ffffff"></b><b style="left:64%;top:20%;width:16%;height:40%;background:#161616"></b><b style="left:49%;top:0%;width:1.5%;height:100%;background:#777777"></b><b style="left:0%;top:80%;width:40%;height:20%;background:#fbe3d2"></b><b style="left:56%;top:76%;width:30%;height:24%;background:#fbe3d2"></b><b style="left:14%;top:16%;width:20%;height:8%;background:#cccccc"></b></b><b class="k" style="left:93px;top:171.6px;width:58.2px;height:43.2px;background:#fdf6c4"><b style="left:0%;top:0%;width:36%;height:100%;background:#ffffff"></b><b class=r style="left:8%;top:10%;width:20%;height:62%;background:#161616"></b><b class=r style="left:45%;top:0%;width:55%;height:66%;background:#7c4424"></b><b class=r style="left:55%;top:35%;width:45%;height:65%;background:#fbe3d2"></b><b class=e style="left:70%;top:72%;width:18%;height:24%;background:#f0c8ea"></b><b class=r style="left:38%;top:45%;width:16%;height:36%;background:#161616"></b><b class=e style="left:28%;top:75%;width:16%;height:22%;background:#ededed"></b><b style="left:20%;top:92%;width:10%;height:8%;background:#f2500c"></b></b><i class="g1"></i><i class="g2"></i><i class="g3"></i><i class="t1"></i><i class="t2"></i><i class="t3"></i><i class="t4"></i><i class="c1"></i><i class="c2"></i><i class="c3"></i><i class="c4"></i><i class="c5"></i><i class="c6"></i><i class="c7"></i></div><div class="pn" style="left:18px">51</div><div class="pg" style="left:213.5px"><b class="k" style="left:25.7px;top:35.8px;width:58.4px;height:43.2px;background:#fdf6c4"><b class=r style="left:0%;top:30%;width:56%;height:56%;background:#e8b050"></b><b style="left:48%;top:70%;width:5%;height:28%;background:#e8b050"></b><b class=r style="left:58%;top:12%;width:30%;height:50%;background:#7c4424"></b><b class=e style="left:58%;top:34%;width:12%;height:20%;background:#fbe3d2"></b><b class=r style="left:58%;top:60%;width:42%;height:40%;background:#444444"></b><b class=e style="left:15%;top:8%;width:17%;height:28%;background:#ededed"></b><b class=e style="left:8%;top:50%;width:17%;height:40%;background:#ededed"></b><b style="left:45%;top:3%;width:13%;height:18%;background:#ededed"></b><b style="left:85%;top:3%;width:13%;height:32%;background:#ededed"></b><b style="left:36%;top:34%;width:8%;height:16%;background:#f2500c"></b><b class=e style="left:24%;top:44%;width:8%;height:8%;background:#ffffff"></b></b><b class="k" style="left:25.7px;top:81.2px;width:58.4px;height:43.2px;background:#fdf6c4"><b class=r style="left:38%;top:5%;width:36%;height:46%;background:#7c4424"></b><b class=e style="left:42%;top:24%;width:20%;height:30%;background:#fbe3d2"></b><b class=t style="left:25%;top:55%;width:26%;height:45%;background:#f2500c"></b><b class=r style="left:50%;top:48%;width:50%;height:52%;background:#444444"></b><b style="left:3%;top:5%;width:20%;height:50%;background:#ededed"></b><b style="left:78%;top:3%;width:20%;height:48%;background:#ededed"></b><b style="left:0%;top:45%;width:8%;height:18%;background:#dc1f1f"></b><b style="left:56%;top:60%;width:6%;height:40%;background:#161616"></b></b><b class="k" style="left:25.7px;top:126.3px;width:58.4px;height:43.2px;background:#fdf6c4"><b class=t style="left:32%;top:12%;width:22%;height:60%;background:#f2500c"></b><b class=e style="left:36%;top:24%;width:5%;height:8%;background:#ffffff"></b><b class=e style="left:44%;top:24%;width:5%;height:8%;background:#ffffff"></b><b style="left:32%;top:68%;width:26%;height:32%;background:#f0a020"></b><b class=e style="left:10%;top:76%;width:70%;height:24%;background:#bfe4f0"></b><b class=e style="left:3%;top:8%;width:17%;height:32%;background:#ededed"></b><b style="left:3%;top:46%;width:28%;height:14%;background:#161616"></b><b style="left:60%;top:46%;width:30%;height:14%;background:#161616"></b><b style="left:85%;top:8%;width:13%;height:22%;background:#ededed"></b></b><b class="k" style="left:25.7px;top:171.6px;width:58.4px;height:43.2px;background:#fdf6c4"><b class=r style="left:0%;top:5%;width:75%;height:55%;background:#e8b050"></b><b style="left:56%;top:58%;width:5%;height:26%;background:#e8b050"></b><b class=e style="left:52%;top:40%;width:20%;height:22%;background:#7c4424"></b><b class=r style="left:55%;top:52%;width:45%;height:48%;background:#444444"></b><b style="left:78%;top:80%;width:22%;height:20%;background:#1d2c6a"></b><b class=e style="left:5%;top:3%;width:20%;height:28%;background:#ededed"></b><b style="left:80%;top:3%;width:18%;height:38%;background:#ededed"></b><b class=e style="left:58%;top:14%;width:10%;height:10%;background:#161616"></b><b style="left:30%;top:20%;width:6%;height:14%;background:#f2500c"></b><b style="left:5%;top:62%;width:10%;height:30%;background:#ededed"></b></b><b class="k" style="left:93px;top:35.8px;width:58.2px;height:43.2px;background:#fdf6c4"><b class=e style="left:35%;top:8%;width:28%;height:42%;background:#7c4424"></b><b class=e style="left:42%;top:24%;width:16%;height:30%;background:#fbe3d2"></b><b class=e style="left:46%;top:42%;width:8%;height:8%;background:#f08ac8"></b><b class=r style="left:18%;top:55%;width:68%;height:45%;background:#444444"></b><b style="left:40%;top:58%;width:20%;height:42%;background:#ffffff"></b><b class=e style="left:72%;top:3%;width:26%;height:68%;background:#ededed"></b><b class=r style="left:22%;top:32%;width:10%;height:18%;background:#ffffff"></b><b style="left:3%;top:5%;width:12%;height:26%;background:#ededed"></b></b><b class="k" style="left:93px;top:81.2px;width:58.2px;height:43.2px;background:#fdf6c4"><b class=r style="left:28%;top:30%;width:38%;height:70%;background:#d0f0f4"></b><b class=r style="left:35%;top:8%;width:20%;height:28%;background:#c8b8a8"></b><b class=t style="left:65%;top:8%;width:30%;height:88%;background:#f2500c"></b><b class=e style="left:70%;top:26%;width:6%;height:9%;background:#ffffff"></b><b style="left:3%;top:5%;width:22%;height:40%;background:#ededed"></b><b class=e style="left:78%;top:40%;width:14%;height:30%;background:#ededed"></b><b class=e style="left:3%;top:55%;width:32%;height:40%;background:#ffffff"></b><b style="left:90%;top:88%;width:10%;height:12%;background:#dc1f1f"></b></b><b class="k" style="left:93px;top:126.3px;width:58.2px;height:43.2px;background:#fdf6c4"><b style="left:50%;top:0%;width:50%;height:100%;background:#888"></b><b class=e style="left:15%;top:20%;width:20%;height:46%;background:#e04818"></b><b class=e style="left:18%;top:12%;width:14%;height:14%;background:#dc1f1f"></b><b class=r style="left:5%;top:75%;width:40%;height:25%;background:#bfe4f0"></b><b class=r style="left:38%;top:10%;width:18%;height:50%;background:#fbe3d2"></b><b class=e style="left:52%;top:3%;width:16%;height:22%;background:#7c4424"></b><b class=r style="left:55%;top:25%;width:20%;height:30%;background:#444444"></b><b class=e style="left:52%;top:35%;width:24%;height:60%;background:#ffffff"></b><b style="left:58%;top:44%;width:12%;height:42%;background:#161616"></b><b style="left:78%;top:5%;width:20%;height:40%;background:#ededed"></b><b style="left:3%;top:5%;width:12%;height:14%;background:#ededed"></b></b><b class="k" style="left:93px;top:171.6px;width:58.2px;height:43.2px;background:#fdf6c4"><b class=r style="left:35%;top:3%;width:36%;height:48%;background:#7c4424"></b><b class=e style="left:42%;top:24%;width:20%;height:32%;background:#fbe3d2"></b><b class=e style="left:48%;top:38%;width:12%;height:18%;background:#f08ac8"></b><b class=r style="left:22%;top:50%;width:58%;height:36%;background:#444444"></b><b style="left:78%;top:3%;width:20%;height:48%;background:#ededed"></b><b class=e style="left:3%;top:5%;width:17%;height:56%;background:#ededed"></b><b class=r style="left:15%;top:80%;width:84%;height:20%;background:#161616"></b><b class=e style="left:22%;top:84%;width:12%;height:10%;background:#ffffff"></b><b class=e style="left:60%;top:84%;width:14%;height:10%;background:#ffffff"></b><b class=e style="left:30%;top:46%;width:24%;height:18%;background:#e8b050"></b><b style="left:5%;top:66%;width:10%;height:30%;background:#ededed"></b></b><i class="g1"></i><i class="g2"></i><i class="g3"></i><i class="t1"></i><i class="t2"></i><i class="t3"></i><i class="t4"></i><i class="c1"></i><i class="c2"></i><i class="c3"></i><i class="c4"></i><i class="c5"></i><i class="c6"></i><i class="c7"></i></div><div class="pn" style="left:213.5px">50</div></div><div class="sp" style="left:2418px;top:1602px"><div class="pg" style="left:18px"><b class="k" style="left:93px;top:35.8px;width:58.2px;height:43.2px;background:#dc1f1f"><b style="left:0%;top:0%;width:20%;height:30%;background:#f4e050"></b><b style="left:30%;top:0%;width:20%;height:22%;background:#f4e050"></b><b style="left:70%;top:0%;width:24%;height:30%;background:#f4e050"></b><b style="left:0%;top:55%;width:16%;height:30%;background:#f4e050"></b><b style="left:78%;top:50%;width:22%;height:26%;background:#f4e050"></b><b style="left:20%;top:86%;width:24%;height:14%;background:#f4e050"></b><b style="left:60%;top:86%;width:24%;height:14%;background:#f4e050"></b><b class=r style="left:5%;top:3%;width:76%;height:22%;background:#161616"></b><b class=e style="left:28%;top:34%;width:20%;height:30%;background:#7c4424"></b><b class=e style="left:36%;top:42%;width:14%;height:22%;background:#fbe3d2"></b><b class=e style="left:40%;top:34%;width:36%;height:42%;background:#ffffff"></b><b class=r style="left:20%;top:65%;width:60%;height:35%;background:#c89040"></b><b class=e style="left:3%;top:50%;width:28%;height:45%;background:#ffffff"></b><b style="left:85%;top:3%;width:15%;height:48%;background:#ededed"></b></b><b class="k" style="left:93px;top:81.2px;width:58.2px;height:43.2px;background:#fdf6c4"><b style="left:0%;top:75%;width:85%;height:25%;background:#e9b65a"></b><b class=e style="left:38%;top:15%;width:20%;height:30%;background:#7c4424"></b><b class=e style="left:42%;top:26%;width:12%;height:18%;background:#fbe3d2"></b><b class=r style="left:32%;top:45%;width:34%;height:40%;background:#ffffff"></b><b class=e style="left:2%;top:5%;width:16%;height:46%;background:#ededed"></b><b class=e style="left:62%;top:3%;width:18%;height:52%;background:#ededed"></b><b style="left:85%;top:3%;width:15%;height:48%;background:#ededed"></b><b class=e style="left:5%;top:55%;width:20%;height:40%;background:#ededed"></b><b class=r style="left:40%;top:72%;width:15%;height:16%;background:#e8b050"></b><b style="left:56%;top:64%;width:6%;height:18%;background:#a8602c"></b><b style="left:46%;top:48%;width:6%;height:24%;background:#cccccc"></b></b><b class="k" style="left:93px;top:126.3px;width:58.2px;height:43.2px;background:#fdf6c4"><b class=t style="left:42%;top:10%;width:38%;height:90%;background:#f2500c"></b><b class=e style="left:48%;top:30%;width:8%;height:12%;background:#ffffff"></b><b class=e style="left:60%;top:30%;width:8%;height:12%;background:#ffffff"></b><b class=r style="left:0%;top:25%;width:30%;height:75%;background:#ffffff"></b><b style="left:8%;top:36%;width:14%;height:54%;background:#161616"></b><b class=e style="left:85%;top:3%;width:15%;height:62%;background:#ededed"></b><b class=r style="left:10%;top:3%;width:30%;height:14%;background:#161616"></b><b class=e style="left:22%;top:12%;width:18%;height:16%;background:#e8b050"></b></b><b class="k" style="left:93px;top:171.6px;width:58.2px;height:43.2px;background:#fdf6c4"><b class=e style="left:45%;top:15%;width:14%;height:20%;background:#7c4424"></b><b class=r style="left:40%;top:32%;width:26%;height:36%;background:#ffffff"></b><b class=e style="left:35%;top:65%;width:38%;height:20%;background:#2a3a6a"></b><b class=e style="left:3%;top:3%;width:22%;height:48%;background:#ededed"></b><b style="left:80%;top:3%;width:18%;height:42%;background:#ededed"></b><b class=e style="left:78%;top:45%;width:17%;height:50%;background:#ededed"></b><b style="left:3%;top:60%;width:20%;height:36%;background:#ededed"></b><b style="left:32%;top:40%;width:6%;height:30%;background:#e8b050"></b><b class=e style="left:30%;top:80%;width:46%;height:8%;background:#cccccc"></b></b><i class="g1"></i><i class="g2"></i><i class="g3"></i><i class="t1"></i><i class="t2"></i><i class="t3"></i><i class="t4"></i><i class="c1"></i><i class="c2"></i><i class="c3"></i><i class="c4"></i><i class="c5"></i><i class="c6"></i><i class="c7"></i></div><div class="pn" style="left:18px">49</div><div class="pg" style="left:213.5px"><b class="k" style="left:25.7px;top:35.8px;width:58.4px;height:43.2px;background:#fdf6c4"><b class=r style="left:12%;top:15%;width:24%;height:50%;background:#7c4424"></b><b class=e style="left:26%;top:30%;width:12%;height:26%;background:#fbe3d2"></b><b class=r style="left:18%;top:55%;width:28%;height:45%;background:#c8b8a8"></b><b style="left:0%;top:45%;width:15%;height:55%;background:#ffffff"></b><b style="left:42%;top:15%;width:58%;height:70%;background:#e8b050"></b><b style="left:42%;top:15%;width:30%;height:20%;background:#fdf6c4"></b><b style="left:62%;top:30%;width:8%;height:18%;background:#a8602c"></b><b style="left:78%;top:3%;width:20%;height:48%;background:#ededed"></b></b><b class="k" style="left:25.7px;top:81.2px;width:58.4px;height:43.2px;background:#30a030"><b style="left:3%;top:3%;width:22%;height:42%;background:#ededed"></b><b style="left:78%;top:3%;width:20%;height:62%;background:#ededed"></b><b style="left:42%;top:50%;width:20%;height:40%;background:#ededed"></b><b class=t style="left:0%;top:55%;width:22%;height:45%;background:#f2500c"></b><b class=e style="left:4%;top:66%;width:5%;height:8%;background:#ffffff"></b><b class=e style="left:12%;top:66%;width:5%;height:8%;background:#ffffff"></b><b class=r style="left:30%;top:8%;width:20%;height:12%;background:#161616"></b><b class=r style="left:40%;top:30%;width:16%;height:12%;background:#161616"></b><b class=r style="left:62%;top:50%;width:16%;height:12%;background:#161616"></b><b class=r style="left:70%;top:76%;width:24%;height:12%;background:#161616"></b><b class=e style="left:44%;top:26%;width:8%;height:8%;background:#dc1f1f"></b><b style="left:22%;top:6%;width:6%;height:10%;background:#f4e050"></b><b class=e style="left:25%;top:86%;width:75%;height:14%;background:#a8e064"></b></b><b class="k" style="left:25.7px;top:126.3px;width:58.4px;height:43.2px;background:#fdf6c4"><b class=r style="left:0%;top:3%;width:16%;height:16%;background:#161616"></b><b class=r style="left:18%;top:8%;width:12%;height:14%;background:#161616"></b><b class=r style="left:48%;top:10%;width:14%;height:16%;background:#161616"></b><b class=r style="left:30%;top:60%;width:16%;height:20%;background:#161616"></b><b class=r style="left:50%;top:78%;width:16%;height:16%;background:#161616"></b><b class=e style="left:62%;top:10%;width:32%;height:64%;background:#8a5030"></b><b class=e style="left:28%;top:10%;width:14%;height:40%;background:#f2500c"></b><b class=e style="left:55%;top:50%;width:16%;height:26%;background:#f080c0"></b><b style="left:3%;top:35%;width:20%;height:60%;background:#ededed"></b><b style="left:85%;top:30%;width:15%;height:50%;background:#ededed"></b><b style="left:60%;top:72%;width:24%;height:20%;background:#f6eeb0"></b></b><b class="k" style="left:25.7px;top:171.6px;width:58.4px;height:43.2px;background:#9a9a9a"><b style="left:0%;top:8%;width:22%;height:38%;background:#ffffff"></b><b style="left:5%;top:14%;width:12%;height:26%;background:#161616"></b><b class=r style="left:35%;top:5%;width:38%;height:70%;background:#7c4424"></b><b class=e style="left:55%;top:30%;width:18%;height:30%;background:#fbe3d2"></b><b class=r style="left:25%;top:62%;width:65%;height:38%;background:#c8b8a8"></b><b class=e style="left:72%;top:15%;width:24%;height:46%;background:#ffffff"></b><b class=e style="left:78%;top:60%;width:20%;height:36%;background:#ffffff"></b><b style="left:76%;top:26%;width:6%;height:14%;background:#dc1f1f"></b><b style="left:0%;top:50%;width:24%;height:50%;background:#cccccc"></b><b style="left:20%;top:76%;width:20%;height:24%;background:#ffffff"></b></b><b class="k" style="left:93px;top:35.8px;width:58.2px;height:43.2px;background:#aaa"><b style="left:10%;top:10%;width:80%;height:80%;background:#c4c0b4"></b><b class=e style="left:35%;top:25%;width:28%;height:30%;background:#f8d060"></b><b style="left:46%;top:32%;width:6%;height:12%;background:#b04010"></b><b style="left:62%;top:5%;width:34%;height:10%;background:#ededed"></b><b style="left:0%;top:70%;width:100%;height:30%;background:#777777"></b><b style="left:8%;top:20%;width:6%;height:60%;background:#cccccc"></b><b style="left:84%;top:24%;width:6%;height:56%;background:#cccccc"></b></b><b class="k" style="left:93px;top:81.2px;width:58.2px;height:43.2px;background:#fdf6c4"><b class=t style="left:25%;top:5%;width:18%;height:40%;background:#f2500c"></b><b style="left:22%;top:14%;width:10%;height:12%;background:#ffffff"></b><b class=r style="left:50%;top:5%;width:50%;height:70%;background:#7c4424"></b><b class=e style="left:52%;top:25%;width:26%;height:42%;background:#fbe3d2"></b><b class=e style="left:54%;top:42%;width:14%;height:16%;background:#f08ac8"></b><b class=t style="left:22%;top:55%;width:10%;height:30%;background:#f2500c"></b><b class=e style="left:0%;top:65%;width:20%;height:22%;background:#7c4424"></b><b style="left:55%;top:70%;width:45%;height:30%;background:#ffffff"></b><b style="left:3%;top:5%;width:15%;height:42%;background:#ededed"></b><b style="left:85%;top:3%;width:15%;height:48%;background:#ededed"></b><b style="left:82%;top:18%;width:6%;height:30%;background:#f2500c"></b><b style="left:10%;top:90%;width:40%;height:8%;background:#e9b65a"></b></b><b class="k" style="left:93px;top:126.3px;width:58.2px;height:43.2px;background:#fdf6c4"><b style="left:0%;top:0%;width:22%;height:46%;background:#b8e0e8"></b><b style="left:30%;top:35%;width:22%;height:65%;background:#444444"></b><b style="left:0%;top:50%;width:22%;height:50%;background:#f0928a"></b><b class=t style="left:85%;top:30%;width:15%;height:70%;background:#f2500c"></b><b style="left:25%;top:0%;width:35%;height:30%;background:#e8b050"></b><b style="left:52%;top:8%;width:8%;height:16%;background:#f2500c"></b><b class=e style="left:62%;top:3%;width:23%;height:48%;background:#ededed"></b><b class=e style="left:60%;top:50%;width:20%;height:40%;background:#ededed"></b><b class=e style="left:34%;top:10%;width:12%;height:16%;background:#ffffff"></b><b style="left:22%;top:40%;width:8%;height:60%;background:#cccccc"></b><b style="left:8%;top:30%;width:10%;height:8%;background:#a8602c"></b></b><b class="k" style="left:93px;top:171.6px;width:58.2px;height:43.2px;background:#f6f6f2"><b style="left:30%;top:0%;width:70%;height:100%;background:#fdf6c4"></b><b class=e style="left:65%;top:5%;width:24%;height:36%;background:#e85020"></b><b class=e style="left:62%;top:62%;width:24%;height:38%;background:#e85020"></b><b class=e style="left:0%;top:62%;width:25%;height:38%;background:#7c4424"></b><b class=e style="left:30%;top:3%;width:20%;height:28%;background:#ededed"></b><b class=e style="left:35%;top:50%;width:20%;height:46%;background:#ededed"></b><b style="left:88%;top:45%;width:12%;height:50%;background:#ededed"></b><b style="left:5%;top:8%;width:10%;height:40%;background:#ededed"></b><b style="left:30%;top:30%;width:10%;height:8%;background:#f2500c"></b><b style="left:86%;top:10%;width:8%;height:14%;background:#f2500c"></b></b><i class="g1"></i><i class="g2"></i><i class="g3"></i><i class="t1"></i><i class="t2"></i><i class="t3"></i><i class="t4"></i><i class="c1"></i><i class="c2"></i><i class="c3"></i><i class="c4"></i><i class="c5"></i><i class="c6"></i><i class="c7"></i></div><div class="pn" style="left:213.5px">48</div></div><div id="rd"></div><div id="rp"></div><div style="left:3024px;top:91px;width:336px;height:7px;background:#2f312f;"></div><div style="left:3024px;top:97.5px;width:40px;height:28px;background:#353735;"></div><div style="left:3064px;top:98px;width:112.5px;height:38px;background:#4d4f4d;"></div><div style="left:3026px;top:125.4px;width:332px;height:10.8px;background:#4d4f4d;"></div><div style="left:3178px;top:97.5px;width:58px;height:26.5px;background:#474947;box-shadow:0 0 0 2px #303230"></div><div style="left:3238px;top:97.5px;width:58px;height:26.5px;background:#474947;box-shadow:0 0 0 2px #303230"></div><div style="left:3298px;top:97.5px;width:58px;height:26.5px;background:#474947;box-shadow:0 0 0 2px #303230"></div><div style="left:3026px;top:136.2px;width:334px;height:2px;background:#353735;"></div><div style="left:3028px;top:138px;width:328px;height:316px;background:#4b4d4b;box-shadow:0 0 0 1.5px #353735"></div><div style="left:3026px;top:455.5px;width:334px;height:86.5px;background:#484a48;"></div><div style="left:3024px;top:542px;width:336px;height:10px;background:#2f312f;"></div><div style="left:3024px;top:551.5px;width:40px;height:28px;background:#353735;"></div><div style="left:3064px;top:552px;width:173px;height:38px;background:#4d4f4d;"></div><div style="left:3026px;top:579.5px;width:332px;height:10.5px;background:#4d4f4d;"></div><div style="left:3239px;top:551.5px;width:57px;height:26.5px;background:#474947;box-shadow:0 0 0 2px #303230"></div><div style="left:3298px;top:551.5px;width:57px;height:26.5px;background:#474947;box-shadow:0 0 0 2px #303230"></div><div style="left:3332px;top:589px;width:28px;height:408px;background:#414341;"></div><div style="left:3024px;top:996.5px;width:336px;height:9px;background:#313331;"></div><div style="left:3024px;top:1005.5px;width:40px;height:27px;background:#353735;"></div><div style="left:3324px;top:1005.5px;width:36px;height:27px;background:#353735;"></div><div style="left:3064px;top:1005.5px;width:140px;height:38px;background:#4d4f4d;"></div><div style="left:3026px;top:1032.5px;width:334px;height:144.5px;background:#4b4d4b;"></div><div style="left:3207px;top:1005.5px;width:57px;height:26px;background:#474947;box-shadow:0 0 0 2px #303230"></div><div style="left:3266px;top:1005.5px;width:57px;height:26px;background:#474947;box-shadow:0 0 0 2px #303230"></div><div style="left:3031px;top:1044px;width:75px;height:39px;background:#505250;"></div><div style="left:3112px;top:1044px;width:80px;height:39px;background:#505250;"></div><div style="left:3227px;top:1087px;width:60px;height:38px;background:#505250;"></div><div style="left:3295px;top:1087px;width:65px;height:38px;background:#505250;"></div><div style="left:3332px;top:1177px;width:28px;height:911px;background:#414341;"></div><div style="left:3204px;top:1054px;width:74px;height:17.5px;background:#454745;box-shadow:inset 0 0 0 1.2px #9c9e9c"></div><div class="ptx" style="left:3121px;top:101px;width:52px">ナビゲーター</div><div class="ptx" style="left:3121.5px;top:555.500px;width:110px;font-size:20px">レイヤープロパティ</div><div class="ptx" style="left:3122.5px;top:1008px;width:80px;font-size:19.600px;-webkit-mask-image:none;mask-image:none">レイヤー</div><svg class="ic" style="left:2984px;top:0" width="376" height="1200" viewBox="2984 0 376 1200"><g fill="none" stroke="#7c7e7c" stroke-width="1.800" stroke-linecap="round" stroke-linejoin="round"><path d="M3009 63.300 l-7.500 7.500 l7.500 7.500 M3018.800 63.300 l-7.500 7.500 l7.500 7.500 M3292.200 63.300 l7.500 7.500 l-7.500 7.500 M3337.500 63.300 l7.500 7.500 l-7.500 7.500 M3347 63.300 l7.500 7.500 l-7.500 7.500"/><path d="M3033 58 v23.400 M3037 58 v23.400 M3041 58 v23.400" stroke-width="1.400"/></g><path d="M3038 105 h14" stroke="#8c8e8c" stroke-width="1.700"/><path d="M3038 111.2 h14" stroke="#8c8e8c" stroke-width="1.700"/><path d="M3038 117.5 h14" stroke="#8c8e8c" stroke-width="1.700"/><path d="M3038 559 h14" stroke="#8c8e8c" stroke-width="1.700"/><path d="M3038 565.2 h14" stroke="#8c8e8c" stroke-width="1.700"/><path d="M3038 571.5 h14" stroke="#8c8e8c" stroke-width="1.700"/><path d="M3038 1012.5 h14" stroke="#8c8e8c" stroke-width="1.700"/><path d="M3038 1018.7 h14" stroke="#8c8e8c" stroke-width="1.700"/><path d="M3038 1025 h14" stroke="#8c8e8c" stroke-width="1.700"/><rect x="3079" y="112.500" width="19.500" height="16" rx="3" fill="none" stroke="#dcdedc" stroke-width="1.800"/><rect x="3083.500" y="107.200" width="21.200" height="17" rx="3" fill="#8a8c8a" stroke="#dcdedc" stroke-width="1.900"/><clipPath id="c1"><rect x="3176" y="97" width="184" height="27"/></clipPath><g clip-path="url(#c1)" fill="none" stroke="#6e706e" stroke-width="2"><g transform="translate(0,-0.500)"><rect x="3195.500" y="105.500" width="26" height="28" rx="3"/><path d="M3199.500 105.500 V130 M3217.500 105.500 V130"/><path d="M3200 124 L3206 118 L3210 121 L3217 115 V130 H3200Z" fill="#6e706e" stroke="none"/><circle cx="3267.500" cy="120.500" r="13.500"/><path d="M3258.500 112.500 Q3267.500 101.500 3276.500 112.500 M3261 113 V120.500 H3274 V113 M3254 120.500 H3261 M3274 120.500 H3281"/><circle cx="3327.500" cy="119.500" r="15"/><circle cx="3327.500" cy="110.800" r="2.300" fill="#6e706e" stroke="none"/><path d="M3327.500 114.500 V130" stroke-width="3.600"/></g></g><rect x="3036.700" y="471" width="103" height="22.500" fill="#4b4d4b" stroke="#8c8e8c" stroke-width="1"/><path d="M3037.200 493 L3139.200 471.500 V493Z" fill="#323432"/><rect x="3036.700" y="510.600" width="103" height="22.500" fill="#4b4d4b" stroke="#8c8e8c" stroke-width="1"/><path d="M3037.200 511.500 C3055 511.500 3060 532.600 3072 532.600 C3090 532.600 3098 511.500 3112 511.500 C3126 511.500 3130 532.600 3139.200 532.600 H3037.200Z" fill="#323432"/><g fill="none" stroke="#6e706e" stroke-width="1.900" stroke-linecap="round" stroke-linejoin="round"><circle cx="3170.3" cy="481.700" r="13.800"/><circle cx="3210" cy="481.700" r="13.800"/><circle cx="3249.7" cy="481.700" r="13.800"/><path d="M3162 481.700 H3178.600 M3201.700 481.700 H3218.300 M3210 473.400 V490"/><rect x="3242.700" y="474.700" width="14" height="14" rx="2" fill="#6e706e"/><path d="M3275.500 468 V496 M3275.500 508 V536"/><rect x="3285.500" y="469.500" width="14" height="13.500" rx="1.500"/><rect x="3296.500" y="480.500" width="14" height="13.500" rx="1.500" fill="#484a48"/><path d="M3290.500 474.500 L3305.500 489.500 M3290.500 480 V474.500 H3296 M3305.500 484 V489.500 H3300"/><rect x="3326.500" y="471" width="22" height="21.500" rx="2"/><path d="M3331.500 476 L3343.500 488 M3331.500 482 V476 H3337.500 M3343.500 482 V488 H3337.500"/><path d="M3161.500 517 A10.500 10.500 0 1 1 3166 531.500"/><path d="M3156.500 514.500 H3166.500 L3161.500 523Z" fill="#6e706e" stroke="none"/><path d="M3218.500 517 A10.500 10.500 0 1 0 3214 531.500"/><path d="M3223.500 514.500 H3213.500 L3218.500 523Z" fill="#6e706e" stroke="none"/><circle cx="3249.700" cy="523.500" r="11.500"/><circle cx="3249.700" cy="523.500" r="3.200" fill="#6e706e"/><path d="M3249.700 523.500 V510 M3241 513 A14 14 0 0 1 3249.700 509.500" stroke-dasharray="2.500 2.500"/><path d="M3286 513.500 V530.500 L3295 522Z"/><path d="M3298.300 509 V535"/><path d="M3311 513.500 V530.500 L3302 522Z" fill="#6e706e"/><path d="M3329 510 H3347 L3338 518.500Z" fill="#6e706e"/><path d="M3324.500 522 H3351.500"/><path d="M3329 534.500 H3347 L3338 526Z"/></g><g fill="none" stroke="#dcdedc" stroke-width="1.900" stroke-linejoin="round"><path d="M3092 557 L3106 563.500 L3092 570 L3079 563.500Z"/><path d="M3080 569.500 L3092 575.500 L3098 572.500 M3080 575.500 L3092 581.500 L3095 580"/></g><g fill="#dcdedc"><circle cx="3098.500" cy="577" r="2.100"/><circle cx="3104.500" cy="577" r="2.100"/><rect x="3102" y="581.500" width="5.500" height="5.500" fill="none" stroke="#dcdedc" stroke-width="1.400"/><path d="M3096 582 l5 5 m0 -5 l-5 5" stroke="#dcdedc" stroke-width="1.200"/></g><clipPath id="c2"><rect x="3237" y="549" width="123" height="27.500"/></clipPath><g clip-path="url(#c2)" transform="translate(0,1.500)" fill="none" stroke="#6e706e" stroke-width="2" stroke-linejoin="round"><path d="M3268 557 L3281 563 L3268 569 L3255 563Z M3256 569 L3268 575 L3273 572.500"/><path d="M3272 573 H3284 L3278 580Z" fill="#6e706e"/><circle cx="3328" cy="574" r="12.500"/><path d="M3328 561.500 A12.500 12.500 0 0 0 3316 578 L3328 574Z" fill="#6e706e"/></g><g fill="none" stroke="#dcdedc" stroke-width="1.900" stroke-linejoin="round"><path d="M3092 1012.500 L3105 1019.500 L3092 1026.500 L3079 1019.500Z"/><path d="M3080 1026 L3092 1032.500 L3104 1026 M3080 1032.500 L3092 1039 L3104 1032.500"/></g><clipPath id="c3"><rect x="3205" y="1004" width="121" height="28"/></clipPath><g clip-path="url(#c3)" fill="none" stroke="#6e706e" stroke-width="2" stroke-linejoin="round" stroke-linecap="round"><path d="M3222 1036 V1030 q0 -7 7 -7 H3240 q8 0 8 -4.500 q0 -5 -8 -5 H3228"/><path d="M3229 1009.500 L3222.500 1013.500 L3229 1017.500Z" fill="#6e706e"/><path d="M3282 1020 L3306 1010.500 L3307 1014.500 L3283 1024Z" fill="#6e706e"/><rect x="3283" y="1024" width="25" height="16" /><path d="M3283 1024 h25 v4 h-25z" fill="#6e706e"/><path d="M3296 1032 L3306 1040 H3296Z" fill="#6e706e"/></g><path d="M3084.0 1059.2 l7 -6.500 l7 6.500 M3084.0 1068.2 l7 6.500 l7 -6.500 M3169.7 1059.2 l7 -6.500 l7 6.500 M3169.7 1068.2 l7 6.500 l7 -6.500 M3268.0 1101.0 l7 -6.500 l7 6.500 M3268.0 1110.0 l7 6.500 l7 -6.500 M3334.0 1101.0 l7 -6.500 l7 6.500 M3334.0 1110.0 l7 6.500 l7 -6.500 " fill="none" stroke="#b4b6b4" stroke-width="1.600" stroke-linecap="round" stroke-linejoin="round"/><g fill="none" stroke="#6e706e" stroke-width="2" stroke-linejoin="round" stroke-linecap="round"><rect x="3033" y="1099" width="20" height="20" rx="4" fill="#6e706e" stroke="none"/><rect x="3038" y="1092.500" width="21.500" height="21.500" rx="4" stroke-dasharray="4 2.600" fill="#4b4d4b"/><path d="M3038 1104 q0 -6 6 -6 h9 v10 q0 6 -6 6 h-9z" fill="#6e706e" stroke="none"/><path d="M3080.500 1119 L3083 1103.500 H3089 L3091.500 1119Z" fill="#6e706e" stroke="none"/><rect x="3083.200" y="1096" width="5.600" height="6" /><path d="M3072.500 1100.500 L3081.500 1098.500 M3099.500 1100.500 L3090.500 1098.500 M3073.500 1093.500 L3081.500 1097 M3098.500 1093.500 L3090.500 1097" stroke-width="1.700"/><path d="M3114 1092.500 H3127.500 V1104 L3123 1118 H3119 Q3118 1108 3114 1104Z" fill="#6e706e" stroke="none"/><path d="M3124 1116 Q3132 1108 3139 1115 M3139 1115 l-4.500 .5 M3139 1115 l-.5 -4.500" stroke-width="1.700"/><rect x="3156.500" y="1103.500" width="19.500" height="15.500" rx="2.500" fill="#6e706e" stroke="none"/><path d="M3160.500 1104 V1099 a5.600 5.600 0 0 1 11.200 0 V1104" stroke-width="2.400"/><rect x="3195.5" y="1092.5" width="5.800" height="5.800" fill="#6e706e" stroke="none" opacity=".8"/><rect x="3207.5" y="1092.5" width="5.800" height="5.800" fill="#6e706e" stroke="none" opacity=".8"/><rect x="3201.5" y="1098.5" width="5.800" height="5.800" fill="#6e706e" stroke="none" opacity=".8"/><rect x="3213.5" y="1098.5" width="5.800" height="5.800" fill="#6e706e" stroke="none" opacity=".8"/><rect x="3207.5" y="1104.5" width="5.800" height="5.800" fill="#6e706e" stroke="none" opacity=".8"/><rect x="3213.5" y="1110.5" width="5.800" height="5.800" fill="#6e706e" stroke="none" opacity=".8"/><rect x="3219" y="1092.5" width="5.800" height="5.800" fill="#6e706e" stroke="none" opacity=".8"/><rect x="3193" y="1108.500" width="13.500" height="10.500" rx="2" fill="#6e706e" stroke="none"/><path d="M3196 1109 V1106 a3.800 3.800 0 0 1 7.600 0 V1109" stroke-width="2"/><path d="M3071 1165.500 H3052 q-6 0 -6 -6 V1141 q0 -2 2 -2 H3070 q2 0 2 2 V1156" /><path d="M3046 1158 q7 1 8 7.500" /><circle cx="3068.500" cy="1163.500" r="7" stroke-width="1.600"/><path d="M3064.500 1163.500 h8 m-4 -4 v8" stroke-width="1.600"/><path d="M3111 1165.500 H3092 q-6 0 -6 -6 V1141 q0 -2 2 -2 H3110 q2 0 2 2 V1156" /><path d="M3099 1144.500 L3105 1147.500 V1154.500 L3099 1157.500 L3093 1154.500 V1147.500Z M3093 1147.500 L3099 1150.500 L3105 1147.500 M3099 1150.500 V1157.500" stroke-width="1.400"/><circle cx="3109" cy="1163.500" r="7" stroke-width="1.600"/><path d="M3105 1163.500 h8 m-4 -4 v8" stroke-width="1.600"/><path d="M3123.500 1163 V1140 q0 -1.500 1.500 -1.500 H3132 l3 3.500 H3149.500 q1.500 0 1.500 1.500 V1157 H3123.500Z" fill="#6e706e" stroke="none"/><circle cx="3148.500" cy="1163.500" r="7" stroke-width="1.600" fill="#4b4d4b"/><path d="M3144.500 1163.500 h8 m-4 -4 v8" stroke-width="1.600"/><rect x="3176.500" y="1137.500" width="17.500" height="17.500" rx="3"/><rect x="3182" y="1143" width="7" height="7" fill="#6e706e" stroke="none"/><path d="M3172 1150 H3166 q-2.500 0 -2.500 2.500 V1164.500 q0 2.500 2.500 2.500 H3178 q2.500 0 2.500 -2.500 V1160"/><path d="M3186 1157 V1160.500 q0 3 -3 3 H3173 M3176.500 1159.500 L3172 1163.500 L3176.500 1167.500" /><rect x="3216" y="1137.500" width="18" height="17.500" rx="3"/><path d="M3212 1150 H3206 q-2.500 0 -2.500 2.500 V1164.500 q0 2.500 2.500 2.500 H3218 q2.500 0 2.500 -2.500 V1160"/><path d="M3222 1149.500 L3210.500 1161 M3210.500 1154.500 V1161 H3217" stroke-width="2.400"/><rect x="3244" y="1138.500" width="27.500" height="27.500" rx="4" fill="#6e706e" stroke="none"/><circle cx="3257.700" cy="1152.200" r="7.800" fill="#4b4d4b" stroke="none"/><path d="M3298.500 1140.500 H3287 q-3 0 -3 3 V1160 q0 3 3 3 H3296" /><rect x="3296" y="1146" width="18.500" height="19.500" rx="3.500" fill="#6e706e" stroke="none"/><circle cx="3305.200" cy="1155.800" r="4.600" fill="#4b4d4b" stroke="none"/><path d="M3295.500 1153.500 H3288.500 M3291.500 1150 L3288 1153.500 L3291.500 1157" stroke-width="1.800"/><path d="M3327.500 1143 H3348.500 M3333.500 1143 q0 -3.500 4.500 -3.500 q4.500 0 4.500 3.500 M3329.500 1143 L3331 1164 q.3 2.500 2.500 2.500 H3342.500 q2.200 0 2.500 -2.500 L3346.500 1143 M3334.500 1148 V1161.500 M3338 1148 V1161.500 M3341.500 1148 V1161.500" stroke-width="1.700"/></g></svg></body></html>
